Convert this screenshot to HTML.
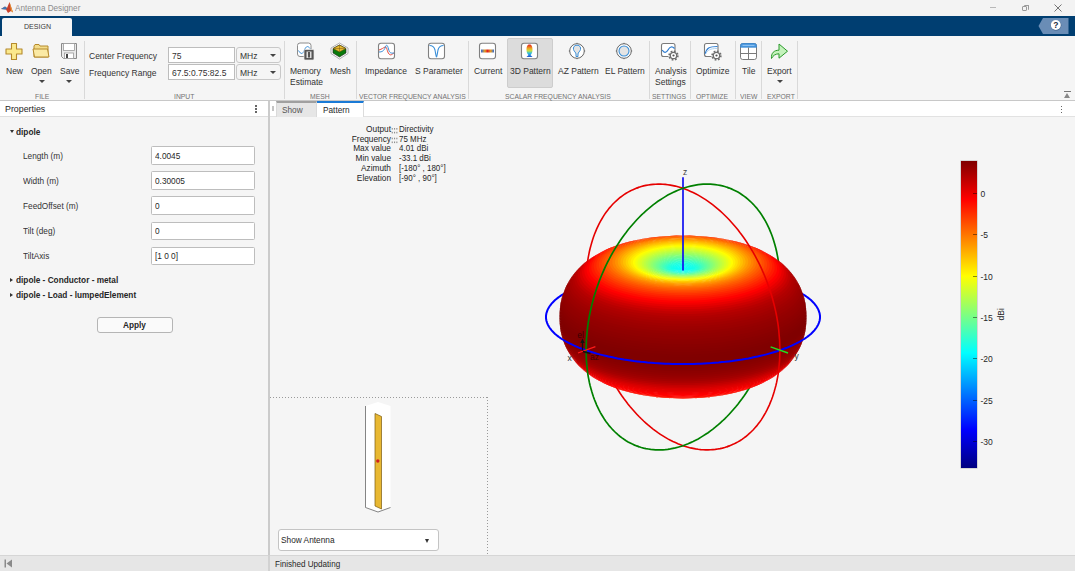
<!DOCTYPE html>
<html><head><meta charset="utf-8">
<style>
*{margin:0;padding:0;box-sizing:border-box}
html,body{width:1075px;height:571px;overflow:hidden;background:#f5f5f5;font-family:"Liberation Sans",sans-serif;color:#262626}
.a{position:absolute}
.t{position:absolute;white-space:nowrap;line-height:1}
#title{left:0;top:0;width:1075px;height:16px;background:#f3f3f3}
#tabbar{left:0;top:16px;width:1075px;height:20px;background:#003e71}
#design{left:2px;top:18px;width:70px;height:18px;background:#f5f5f5;border-radius:2px 2px 0 0}
#strip{left:0;top:36px;width:1075px;height:64px;background:#f5f5f5}
.sep{position:absolute;top:41px;width:1px;height:58px;background:#d9d9d9}
.lbl{font-size:8.5px;color:#333}
.grp{font-size:7.3px;color:#727272;transform:scaleX(.93);transform-origin:0 0}
.inp{position:absolute;background:#fff;border:1px solid #bdbdbd}
.dd{position:absolute;background:#f5f5f5;border:1px solid #c8c8c8;border-radius:3px}
</style></head><body>
<!-- title bar -->
<div id="title" class="a"></div>
<div class="t" style="left:14.5px;top:3.8px;font-size:8.6px;color:#8c8c8c;transform:scaleX(.95);transform-origin:0 0">Antenna Designer</div>
<div id="tabbar" class="a"></div>
<div id="design" class="a"></div>
<div class="t" style="left:24px;top:23.3px;font-size:7.6px;color:#3a3a3a;transform:scaleX(.93);transform-origin:0 0">DESIGN</div>
<svg class="a" style="left:0;top:0" width="14" height="15" viewBox="0 0 14 15">
<path d="M1,9 L5,6.5 L7,8 L9.5,2 L13,12.5 L11,11 L8,13 L6,9.5z" fill="#c8402a"/>
<path d="M1,9 L5,6.5 L7,8 L6,9.5z" fill="#3a7ab8"/>
<path d="M9.5,2 L13,12.5 L11,11z" fill="#e89a30"/></svg>
<div class="a" style="left:990px;top:7px;width:6px;height:1px;background:#b8b8b8"></div>
<div class="a" style="left:1022px;top:6px;width:5px;height:5px;border:1px solid #9a9a9a;border-radius:1px"></div>
<div class="a" style="left:1024px;top:4.5px;width:5px;height:5px;border-top:1px solid #9a9a9a;border-right:1px solid #9a9a9a;border-radius:1px"></div>
<svg class="a" style="left:1054px;top:4px" width="8" height="8" viewBox="0 0 8 8"><path d="M0.5,0.5 L7.5,7.5 M7.5,0.5 L0.5,7.5" stroke="#666" stroke-width="0.9"/></svg>
<svg class="a" style="left:1038px;top:18px" width="31" height="16" viewBox="0 0 31 16">
<path d="M0.5,8 L5,0 H30.5 V16 H5z" fill="#6a8db6"/>
<circle cx="18" cy="7.3" r="5.3" fill="#0f2f55" opacity=".5"/>
<circle cx="17.8" cy="7" r="5" fill="#fff"/>
<text x="17.8" y="10.2" font-family="Liberation Sans" font-weight="bold" font-size="8.5" text-anchor="middle" fill="#1a2a40">?</text></svg>
<div id="strip" class="a"></div>
<div class="a" style="left:0;top:100px;width:1075px;height:1px;background:#c8c8c8"></div>

<!-- separators -->
<div class="sep" style="left:84px"></div>
<div class="sep" style="left:284px"></div>
<div class="sep" style="left:356px"></div>
<div class="sep" style="left:468px"></div>
<div class="sep" style="left:649px"></div>
<div class="sep" style="left:690px"></div>
<div class="sep" style="left:735px"></div>
<div class="sep" style="left:761px"></div>
<div class="sep" style="left:797px"></div>

<!-- labels -->
<div class="t lbl" style="left:6px;top:67px">New</div>
<div class="t lbl" style="left:31px;top:67px">Open</div>
<div class="t lbl" style="left:60px;top:67px">Save</div>
<div class="a" style="left:39px;top:80px;width:0;height:0;border-left:3px solid transparent;border-right:3px solid transparent;border-top:3px solid #444"></div>
<div class="a" style="left:66px;top:80px;width:0;height:0;border-left:3px solid transparent;border-right:3px solid transparent;border-top:3px solid #444"></div>
<div class="t grp" style="left:35px;top:93px">FILE</div>
<svg class="a" style="left:4px;top:42px" width="20" height="20" viewBox="0 0 20 20">
<path d="M7.5,1.5 h5 v5.5 h5.5 v5 h-5.5 v5.5 h-5 v-5.5 h-5.5 v-5 h5.5z" fill="#fbe98c" stroke="#b58a2c" stroke-width="1.1" stroke-linejoin="round"/></svg>
<svg class="a" style="left:32px;top:43px" width="19" height="16" viewBox="0 0 19 16">
<path d="M2,3 l1,-1.5 h4 l1,1.5 h8 v11 h-14z" fill="#f3dc8a" stroke="#b58a2c" stroke-width="1"/>
<path d="M1,6 h14.5 l1.5,8 h-14.5z" fill="#fbeaa5" stroke="#b58a2c" stroke-width="1" stroke-linejoin="round"/></svg>
<svg class="a" style="left:60px;top:42px" width="18" height="18" viewBox="0 0 18 18">
<path d="M1.5,1.5 h15 v15 h-13 l-2,-2z" fill="#e9e9e9" stroke="#8a8a8a" stroke-width="1"/>
<rect x="3.5" y="1.5" width="11" height="7" fill="#fff" stroke="#9a9a9a" stroke-width="0.8"/>
<rect x="4.5" y="11" width="9" height="5.5" fill="#fff" stroke="#9a9a9a" stroke-width="0.8"/>
<rect x="6" y="12" width="2" height="4" fill="#444"/></svg>

<div class="t lbl" style="left:89px;top:52px">Center Frequency</div>
<div class="t lbl" style="left:89px;top:69px">Frequency Range</div>
<div class="inp" style="left:168px;top:47px;width:67px;height:16px"></div>
<div class="inp" style="left:168px;top:64px;width:67px;height:16px"></div>
<div class="t lbl" style="left:172px;top:52px">75</div>
<div class="t lbl" style="left:172px;top:69px">67.5:0.75:82.5</div>
<div class="dd" style="left:236px;top:47px;width:45px;height:16px"></div>
<div class="dd" style="left:236px;top:64px;width:45px;height:16px"></div>
<div class="t lbl" style="left:240px;top:52px">MHz</div>
<div class="t lbl" style="left:240px;top:69px">MHz</div>
<div class="a" style="left:270px;top:54px;width:0;height:0;border-left:3px solid transparent;border-right:3px solid transparent;border-top:3px solid #444"></div>
<div class="a" style="left:270px;top:71px;width:0;height:0;border-left:3px solid transparent;border-right:3px solid transparent;border-top:3px solid #444"></div>
<div class="t grp" style="left:174px;top:93px">INPUT</div>

<svg class="a" style="left:296px;top:42px" width="20" height="19" viewBox="0 0 20 19">
<rect x="1.5" y="1" width="13.5" height="13.5" rx="2.5" fill="#fff" stroke="#8c8c8c" stroke-width="1"/>
<path d="M2.5,8.5 C5,13 7,12 8.5,8 C10,4 12,3.5 14,6.5" fill="none" stroke="#3a8fd8" stroke-width="1"/>
<rect x="8" y="7.5" width="10" height="10.5" rx="1" fill="#555" stroke="#eee" stroke-width="0.7"/>
<rect x="10.5" y="9.5" width="5" height="6.5" fill="#ddd"/><rect x="12" y="10" width="2" height="5.5" fill="#555"/></svg>
<svg class="a" style="left:330px;top:42px" width="19" height="18" viewBox="0 0 19 18">
<path d="M9.5,1 L18,6 L18,11.5 L9.5,17 L1,11.5 L1,6z" fill="#fff" stroke="#9a9a9a" stroke-width="0.8"/>
<path d="M9.5,3 L16,6.5 L16,11 L9.5,15 L3,11 L3,6.5z" fill="#0a7a0a" stroke="#222" stroke-width="0.6"/>
<path d="M9.5,3 L16,6.5 L9.5,10 L3,6.5z" fill="#e8b930" stroke="#5a4a10" stroke-width="0.6"/>
<path d="M9.5,3 V10 M3,6.5 H16" stroke="#7a5a10" stroke-width="0.5"/></svg>
<div class="t lbl" style="left:290px;top:67px">Memory</div>
<div class="t lbl" style="left:290px;top:78px">Estimate</div>
<div class="t lbl" style="left:330px;top:67px">Mesh</div>
<div class="t grp" style="left:310px;top:93px">MESH</div>

<svg class="a" style="left:376.5px;top:42px" width="19" height="18" viewBox="0 0 19 18">
<rect x="1.5" y="1.2" width="16" height="15.6" rx="2.5" fill="#fff" stroke="#808080" stroke-width="1.1"/>
<path d="M2,8 C5,7 6,6 8,5 C10,4 10,10 12,12 C14,14 15,12 17,11" fill="none" stroke="#e8473a" stroke-width="1"/>
<path d="M2,10 C5,10 7,9 8.5,5 C9.5,2 10.5,3 11.5,7 C12.5,11 14,11.5 17,11" fill="none" stroke="#3a8fd8" stroke-width="1"/></svg>
<svg class="a" style="left:427px;top:42px" width="19" height="18" viewBox="0 0 19 18">
<rect x="1.5" y="1.2" width="16" height="15.6" rx="2.5" fill="#fff" stroke="#808080" stroke-width="1.1"/>
<path d="M2.5,3.5 C5,3.5 7,4 8,8 C8.8,12 9,15 9.5,15 C10,15 10.2,12 11,8 C12,4 14,3.5 16.5,3.5" fill="none" stroke="#3a8fd8" stroke-width="1.1"/></svg>
<div class="t lbl" style="left:365px;top:67px">Impedance</div>
<div class="t lbl" style="left:415px;top:67px">S Parameter</div>
<div class="t grp" style="left:359px;top:93px">VECTOR FREQUENCY ANALYSIS</div>

<div class="a" style="left:507px;top:38px;width:46px;height:50px;background:#dcdcdc;border:1px solid #cdcdcd;border-radius:2px"></div>
<svg class="a" style="left:478px;top:42px" width="19" height="18" viewBox="0 0 19 18">
<rect x="1.5" y="1.2" width="16" height="15.6" rx="2.5" fill="#fff" stroke="#808080" stroke-width="1.1"/>
<defs><linearGradient id="cur" x1="0" x2="1"><stop offset="0" stop-color="#2a6ae0"/><stop offset=".3" stop-color="#e8a020"/><stop offset=".5" stop-color="#e02020"/><stop offset=".75" stop-color="#e8a020"/><stop offset="1" stop-color="#2a6ae0"/></linearGradient></defs>
<rect x="3" y="7.5" width="13" height="3" fill="url(#cur)"/></svg>
<svg class="a" style="left:520px;top:42px" width="19" height="18" viewBox="0 0 19 18">
<rect x="1.5" y="1.2" width="16" height="15.6" rx="2.5" fill="#fff" stroke="#808080" stroke-width="1.1"/>
<defs><linearGradient id="p3" x1="0" y1="0" x2="0" y2="1"><stop offset="0" stop-color="#e02020"/><stop offset=".3" stop-color="#f0a020"/><stop offset=".5" stop-color="#c8e040"/><stop offset=".7" stop-color="#30c0e0"/><stop offset="1" stop-color="#2050d0"/></linearGradient></defs>
<path d="M9.5,2.5 C12,2.5 12.5,5 12.5,8 C12.5,11 11,12.5 10.5,13 L12.5,15 H6.5 L8.5,13 C8,12.5 6.5,11 6.5,8 C6.5,5 7,2.5 9.5,2.5z" fill="url(#p3)"/></svg>
<svg class="a" style="left:568px;top:42px" width="18" height="18" viewBox="0 0 18 18">
<circle cx="9" cy="9" r="7.3" fill="#fff" stroke="#666" stroke-width="1"/>
<path d="M9,0.8 V2 M9,16 V17.2 M0.8,9 H2 M16,9 H17.2" stroke="#666" stroke-width="0.8"/>
<path d="M9,3.2 C12,3.2 13,5.5 12.5,7.5 C12,9.5 10,10.5 10,12 V14.5 H8 V12 C8,10.5 6,9.5 5.5,7.5 C5,5.5 6,3.2 9,3.2z" fill="#e4e4e4" stroke="#3a8fd8" stroke-width="1"/></svg>
<svg class="a" style="left:615px;top:42px" width="18" height="18" viewBox="0 0 18 18">
<circle cx="9" cy="9" r="7.3" fill="#fff" stroke="#666" stroke-width="1"/>
<path d="M9,0.8 V2 M9,16 V17.2 M0.8,9 H2 M16,9 H17.2" stroke="#666" stroke-width="0.8"/>
<circle cx="9" cy="9" r="5" fill="#e4e4e4" stroke="#3a8fd8" stroke-width="1.1"/></svg>
<div class="t lbl" style="left:474px;top:67px">Current</div>
<div class="t lbl" style="left:510px;top:67px">3D Pattern</div>
<div class="t lbl" style="left:558px;top:67px">AZ Pattern</div>
<div class="t lbl" style="left:605px;top:67px">EL Pattern</div>
<div class="t grp" style="left:505px;top:93px">SCALAR FREQUENCY ANALYSIS</div>

<svg class="a" style="left:660px;top:42px" width="20" height="20" viewBox="0 0 20 20">
<rect x="1.5" y="1.5" width="13.5" height="13" rx="2" fill="#fff" stroke="#7a7a7a" stroke-width="1.1"/>
<path d="M2.2,8 C4,11 6,11.5 8,8 C10,4.5 12,4 14.5,6.5" fill="none" stroke="#2a7ad0" stroke-width="1.2"/>
<g transform="translate(13.5,13.5)"><circle r="5.2" fill="#f5f5f5"/><circle r="4.3" fill="none" stroke="#6e6e6e" stroke-width="1.8" stroke-dasharray="1.689 1.689"/><circle r="3.2" fill="#fff" stroke="#6e6e6e" stroke-width="1.3"/><circle r="1.1" fill="#555"/></g></svg>
<svg class="a" style="left:703px;top:42px" width="20" height="20" viewBox="0 0 20 20">
<rect x="1.5" y="1.5" width="13.5" height="13" rx="2" fill="#fff" stroke="#7a7a7a" stroke-width="1.1"/>
<path d="M2.2,12 C3.5,6 6,4.5 14.5,4.5" fill="none" stroke="#2a7ad0" stroke-width="1.2"/>
<path d="M2.5,12 C5,8 7,6.5 14,6.5" fill="none" stroke="#9cc8ee" stroke-width="0.8"/>
<g transform="translate(13.5,13.5)"><circle r="5.2" fill="#f5f5f5"/><circle r="4.3" fill="none" stroke="#6e6e6e" stroke-width="1.8" stroke-dasharray="1.689 1.689"/><circle r="3.2" fill="#fff" stroke="#6e6e6e" stroke-width="1.3"/><circle r="1.1" fill="#555"/></g></svg>
<svg class="a" style="left:739px;top:42px" width="19" height="19" viewBox="0 0 19 19">
<rect x="1.5" y="1.5" width="16" height="16" rx="2.2" fill="#fff" stroke="#7a7a7a" stroke-width="1"/>
<path d="M1.5,5.2 V3.7 Q1.5,1.5 3.7,1.5 H15.3 Q17.5,1.5 17.5,3.7 V5.2z" fill="#4a98e0" stroke="#3a88d0" stroke-width="0.8"/>
<path d="M3.5,3.4 H15.5" stroke="#a8d0f5" stroke-width="0.8"/>
<path d="M1.5,11.5 H17.5 M9.5,5.5 V17.5" stroke="#7a7a7a" stroke-width="1"/></svg>
<svg class="a" style="left:769px;top:42px" width="20" height="18" viewBox="0 0 20 18">
<path d="M2.5,16.5 C2,11 5,8.2 10,8.2 V2 L18.5,9.2 L10,16.2 V11.8 C6.5,11.8 4,13.5 2.5,16.5z" fill="#c4f2bc" stroke="#2a9a2a" stroke-width="1" stroke-linejoin="round"/></svg>
<div class="t lbl" style="left:655px;top:67px">Analysis</div>
<div class="t lbl" style="left:655px;top:78px">Settings</div>
<div class="t grp" style="left:652px;top:93px">SETTINGS</div>
<div class="t lbl" style="left:696px;top:67px">Optimize</div>
<div class="t grp" style="left:696px;top:93px">OPTIMIZE</div>
<div class="t lbl" style="left:742px;top:67px">Tile</div>
<div class="t grp" style="left:740px;top:93px">VIEW</div>
<div class="t lbl" style="left:767px;top:67px">Export</div>
<div class="a" style="left:777px;top:80px;width:0;height:0;border-left:3px solid transparent;border-right:3px solid transparent;border-top:3px solid #444"></div>
<div class="t grp" style="left:767px;top:93px">EXPORT</div>
<!-- collapse -->
<div class="a" style="left:1064px;top:91px;width:7px;height:1px;background:#777"></div>
<div class="a" style="left:1064px;top:93px;width:0;height:0;border-left:3.5px solid transparent;border-right:3.5px solid transparent;border-bottom:5px solid #888"></div>

<!-- left panel -->
<div class="a" style="left:0;top:101px;width:268px;height:16px;background:#fff;border-bottom:1px solid #dedede"></div>
<div class="t" style="left:4.5px;top:104.5px;font-size:9.3px;color:#262626;transform:scaleX(.95);transform-origin:0 0">Properties</div>
<div class="a" style="left:255px;top:105px;width:1.5px;height:1.5px;background:#666"></div>
<div class="a" style="left:255px;top:108px;width:1.5px;height:1.5px;background:#666"></div>
<div class="a" style="left:255px;top:111px;width:1.5px;height:1.5px;background:#666"></div>
<div class="a" style="left:268px;top:101px;width:2px;height:454px;background:#cbcbcb"></div>
<div class="a" style="left:10px;top:130px;width:0;height:0;border-left:2.5px solid transparent;border-right:2.5px solid transparent;border-top:3px solid #333"></div>
<div class="t" style="left:16px;top:127.5px;font-size:8.7px;font-weight:bold;color:#262626;transform:scaleX(.95);transform-origin:0 0">dipole</div>
<div class="t" style="left:23px;top:151.5px;font-size:8.7px;color:#333;transform:scaleX(.95);transform-origin:0 0">Length (m)</div>
<div class="a" style="left:151px;top:146.0px;width:104px;height:18.5px;background:#fff;border:1px solid #bdbdbd;border-radius:1.5px"></div>
<div class="t" style="left:154.5px;top:151.5px;font-size:8.7px;color:#262626;transform:scaleX(.95);transform-origin:0 0">4.0045</div>
<div class="t" style="left:23px;top:176.7px;font-size:8.7px;color:#333;transform:scaleX(.95);transform-origin:0 0">Width (m)</div>
<div class="a" style="left:151px;top:171.2px;width:104px;height:18.5px;background:#fff;border:1px solid #bdbdbd;border-radius:1.5px"></div>
<div class="t" style="left:154.5px;top:176.7px;font-size:8.7px;color:#262626;transform:scaleX(.95);transform-origin:0 0">0.30005</div>
<div class="t" style="left:23px;top:201.9px;font-size:8.7px;color:#333;transform:scaleX(.95);transform-origin:0 0">FeedOffset (m)</div>
<div class="a" style="left:151px;top:196.4px;width:104px;height:18.5px;background:#fff;border:1px solid #bdbdbd;border-radius:1.5px"></div>
<div class="t" style="left:154.5px;top:201.9px;font-size:8.7px;color:#262626;transform:scaleX(.95);transform-origin:0 0">0</div>
<div class="t" style="left:23px;top:227.1px;font-size:8.7px;color:#333;transform:scaleX(.95);transform-origin:0 0">Tilt (deg)</div>
<div class="a" style="left:151px;top:221.6px;width:104px;height:18.5px;background:#fff;border:1px solid #bdbdbd;border-radius:1.5px"></div>
<div class="t" style="left:154.5px;top:227.1px;font-size:8.7px;color:#262626;transform:scaleX(.95);transform-origin:0 0">0</div>
<div class="t" style="left:23px;top:252.3px;font-size:8.7px;color:#333;transform:scaleX(.95);transform-origin:0 0">TiltAxis</div>
<div class="a" style="left:151px;top:246.8px;width:104px;height:18.5px;background:#fff;border:1px solid #bdbdbd;border-radius:1.5px"></div>
<div class="t" style="left:154.5px;top:252.3px;font-size:8.7px;color:#262626;transform:scaleX(.95);transform-origin:0 0">[1 0 0]</div>
<div class="a" style="left:10px;top:277.5px;width:0;height:0;border-top:2.5px solid transparent;border-bottom:2.5px solid transparent;border-left:3px solid #333"></div>
<div class="t" style="left:16px;top:275.5px;font-size:8.7px;font-weight:bold;color:#262626;transform:scaleX(.95);transform-origin:0 0">dipole - Conductor - metal</div>
<div class="a" style="left:10px;top:293px;width:0;height:0;border-top:2.5px solid transparent;border-bottom:2.5px solid transparent;border-left:3px solid #333"></div>
<div class="t" style="left:16px;top:291px;font-size:8.7px;font-weight:bold;color:#262626;transform:scaleX(.95);transform-origin:0 0">dipole - Load - lumpedElement</div>
<div class="a" style="left:96.5px;top:317px;width:76.5px;height:16px;background:#fafafa;border:1px solid #b5b5b5;border-radius:3px"></div>
<div class="t" style="left:123px;top:321px;font-size:8.7px;font-weight:bold;color:#262626;transform:scaleX(.95);transform-origin:0 0">Apply</div>

<!-- doc area -->
<div class="a" style="left:270px;top:101px;width:805px;height:16px;background:#fff;border-bottom:1px solid #e2e2e2"></div>
<div class="a" style="left:271.8px;top:106px;width:2px;height:5px;background:#c4c4c4"></div>
<div class="a" style="left:276px;top:101px;width:40.5px;height:16px;background:#e6e6e6;border-top:2px solid #a0a0a0;border-left:1px solid #dadada;border-right:1px solid #dadada"></div>
<div class="a" style="left:316.5px;top:101px;width:47px;height:16px;background:#fff;border-top:2px solid #1a7ad6;border-right:1px solid #dcdcdc"></div>
<div class="t" style="left:281.5px;top:105.8px;font-size:8.7px;color:#555;transform:scaleX(.95);transform-origin:0 0">Show</div>
<div class="t" style="left:322.5px;top:105.8px;font-size:8.7px;color:#262626;transform:scaleX(.95);transform-origin:0 0">Pattern</div>
<div class="a" style="left:1060.5px;top:105.5px;width:1.5px;height:1.5px;background:#666"></div>
<div class="a" style="left:1060.5px;top:108.5px;width:1.5px;height:1.5px;background:#666"></div>
<div class="a" style="left:1060.5px;top:111.5px;width:1.5px;height:1.5px;background:#666"></div>
<!-- info text -->
<svg class="a" style="left:390px;top:126px" width="9" height="18" viewBox="0 0 9 18" fill="#8f8f8f"><rect x="1.7" y="2.0" width="1.1" height="1.6"/><rect x="1.7" y="5.8" width="1.1" height="1.6"/><rect x="4.0" y="2.0" width="1.1" height="1.6"/><rect x="4.0" y="5.8" width="1.1" height="1.6"/><rect x="6.3" y="2.0" width="1.1" height="1.6"/><rect x="6.3" y="5.8" width="1.1" height="1.6"/><rect x="1.7" y="11.7" width="1.1" height="1.6"/><rect x="1.7" y="15.5" width="1.1" height="1.6"/><rect x="4.0" y="11.7" width="1.1" height="1.6"/><rect x="4.0" y="15.5" width="1.1" height="1.6"/><rect x="6.3" y="11.7" width="1.1" height="1.6"/><rect x="6.3" y="15.5" width="1.1" height="1.6"/></svg>

<div class="a" style="left:300px;top:125px;width:91px;font-size:8.3px;line-height:9.7px;text-align:right;color:#262626">Output<br>Frequency<br>Max value<br>Min value<br>Azimuth<br>Elevation</div>
<div class="a" style="left:398.5px;top:125px;font-size:8.3px;line-height:9.7px;color:#262626;white-space:nowrap;transform:scaleX(.96);transform-origin:0 0">Directivity<br>75 MHz<br>4.01 dBi<br>-33.1 dBi<br>[-180&deg; , 180&deg;]<br>[-90&deg; , 90&deg;]</div>
<!--PLOT-->
<svg class="a" style="left:0;top:0" width="1075" height="571" viewBox="0 0 1075 571">
<path d="M820,317L820,315.8L819.8,314.5L819.6,313.3L819.2,312.1L818.8,310.9L818.3,309.6L817.7,308.4L817,307.2L816.2,306L815.3,304.8L814.4,303.6L813.3,302.5L812.1,301.3L810.9,300.1L809.6,299L808.2,297.9L806.7,296.7L805.1,295.6L803.4,294.5L801.6,293.5M564.4,293.5L562.6,294.5L560.9,295.6L559.3,296.7L557.8,297.9L556.4,299L555.1,300.1L553.9,301.3L552.7,302.5L551.6,303.6L550.7,304.8L549.8,306L549,307.2L548.3,308.4L547.7,309.6L547.2,310.9L546.8,312.1L546.4,313.3L546.2,314.5L546,315.8L546,317L546,318.2" fill="none" stroke="#0000ff" stroke-width="2.0"/><path d="M639,187.3L636.8,188L634.6,188.9L632.4,189.9L630.2,191L628.1,192.1L626.1,193.3L624,194.7L622,196.1L620.1,197.5L618.2,199.1L616.3,200.8L614.5,202.5L612.7,204.3L611,206.2L609.3,208.1L607.7,210.2L606.1,212.3L604.6,214.4L603.2,216.7L601.8,219L600.4,221.4L599.1,223.8L597.9,226.4L596.7,228.9L595.6,231.6L594.5,234.3L593.5,237L592.6,239.8L591.7,242.7L590.9,245.6L590.1,248.5L589.4,251.5L588.8,254.6L588.2,257.7L587.7,260.8L587.3,264M614.5,384.4L616.3,387.4L618.2,390.3L620.1,393.2L622,396L624,398.8L626.1,401.5L628.1,404.2L630.2,406.8L632.4,409.3L634.6,411.8L636.8,414.2L639,416.5L641.3,418.8L643.6,421L645.9,423.1L648.3,425.2L650.7,427.2L653.1,429.1L655.5,430.9L657.9,432.7L660.4,434.3L662.9,435.9L665.3,437.4L667.8,438.9L670.4,440.2L672.9,441.5L675.4,442.6L677.9,443.7L680.5,444.7L683,445.7L685.5,446.5L688.1,447.2L690.6,447.9L693.1,448.4L695.6,448.9L698.2,449.3L700.7,449.6L703.1,449.8L705.6,449.9L708.1,449.9L710.5,449.8L712.9,449.6L715.3,449.4L717.7,449L720.1,448.6L722.4,448.1L724.7,447.5L727,446.7L729.2,446" fill="none" stroke="#e60000" stroke-width="1.6"/><path d="M727,187.3L729.2,188L731.4,188.9L733.6,189.9L735.8,191L737.9,192.1L739.9,193.3L742,194.7L744,196.1L745.9,197.5L747.8,199.1L749.7,200.8L751.5,202.5L753.3,204.3L755,206.2L756.7,208.1L758.3,210.2L759.9,212.3L761.4,214.4L762.8,216.7L764.2,219L765.6,221.4L766.9,223.8L768.1,226.4L769.3,228.9L770.4,231.6L771.5,234.3L772.5,237L773.4,239.8L774.3,242.7L775.1,245.6L775.9,248.5L776.6,251.5L777.2,254.6L777.8,257.7L778.3,260.8L778.7,264M751.5,384.4L749.7,387.4L747.8,390.3L745.9,393.2L744,396L742,398.8L739.9,401.5L737.9,404.2L735.8,406.8L733.6,409.3L731.4,411.8L729.2,414.2L727,416.5L724.7,418.8L722.4,421L720.1,423.1L717.7,425.2L715.3,427.2L712.9,429.1L710.5,430.9L708.1,432.7L705.6,434.3L703.1,435.9L700.7,437.4L698.2,438.9L695.6,440.2L693.1,441.5L690.6,442.6L688.1,443.7L685.5,444.7L683,445.7L680.5,446.5L677.9,447.2L675.4,447.9L672.9,448.4L670.4,448.9L667.8,449.3L665.3,449.6L662.9,449.8L660.4,449.9L657.9,449.9L655.5,449.8L653.1,449.6L650.7,449.4L648.3,449L645.9,448.6L643.6,448.1L641.3,447.5L639,446.7L636.8,446" fill="none" stroke="#008000" stroke-width="1.7"/>
<g><path d="M683,269L683,269L683,269L683,269L683,269L683,269L683,269L683,269L683,269L683,269L683,269L683,269L683,269L683,269L683,269L683,269L683,269L683,269L683,269L683,269L683,269L683,269L683,269L683,269L683,269L683,269L683,269L683,269L683,269L683,269L683,269L683,269L683,269L683,269L683,269L683,269L683,269L683,269L683,269L683,269L683,269L683,269L683,269L683,269L683,269L683,269L683,269L683,269L683,269L683,269L683,269L683,269L683,269L683,269L683,269L683,269L683,269L683,269L683,269L683,269L683,269L683,269L683,269L683,269L683,269L683,269L683,269L683,269L683,269L683,269L683,269L683,269L683,269L683,269L683,269L683,269L683,269L683,269L683,269L683,269ZM681.8,269.4L681.9,269.4L682,269.4L682.1,269.5L682.2,269.5L682.3,269.5L682.5,269.5L682.6,269.5L682.7,269.5L682.9,269.5L683,269.6L683.1,269.5L683.3,269.5L683.4,269.5L683.5,269.5L683.7,269.5L683.8,269.5L683.9,269.5L684,269.4L684.1,269.4L684.2,269.4L684.3,269.3L684.4,269.3L684.5,269.3L684.5,269.2L684.6,269.2L684.6,269.1L684.7,269.1L684.7,269.1L684.7,269L684.7,269L684.7,268.9L684.7,268.9L684.7,268.8L684.6,268.8L684.6,268.7L684.5,268.7L684.5,268.7L684.4,268.6L684.3,268.6L684.2,268.5L684.1,268.5L684,268.5L683.9,268.5L683.8,268.4L683.7,268.4L683.5,268.4L683.4,268.4L683.3,268.4L683.1,268.4L683,268.4L682.9,268.4L682.7,268.4L682.6,268.4L682.5,268.4L682.3,268.4L682.2,268.4L682.1,268.5L682,268.5L681.9,268.5L681.8,268.5L681.7,268.6L681.6,268.6L681.5,268.7L681.5,268.7L681.4,268.7L681.4,268.8L681.3,268.8L681.3,268.9L681.3,268.9L681.3,269L681.3,269L681.3,269.1L681.3,269.1L681.4,269.1L681.4,269.2L681.5,269.2L681.5,269.3L681.6,269.3L681.7,269.3Z" fill="#05fffa" fill-rule="evenodd"/><path d="M682.2,269.2L682.3,269.3L682.4,269.3L682.4,269.3L682.5,269.3L682.6,269.3L682.7,269.3L682.7,269.3L682.8,269.3L682.9,269.3L683,269.3L683.1,269.3L683.2,269.3L683.3,269.3L683.3,269.3L683.4,269.3L683.5,269.3L683.6,269.3L683.6,269.3L683.7,269.3L683.8,269.2L683.8,269.2L683.9,269.2L683.9,269.2L684,269.1L684,269.1L684,269.1L684,269.1L684.1,269L684.1,269L684.1,269L684.1,268.9L684.1,268.9L684,268.9L684,268.9L684,268.8L684,268.8L683.9,268.8L683.9,268.8L683.8,268.7L683.8,268.7L683.7,268.7L683.6,268.7L683.6,268.7L683.5,268.6L683.4,268.6L683.3,268.6L683.3,268.6L683.2,268.6L683.1,268.6L683,268.6L682.9,268.6L682.8,268.6L682.7,268.6L682.7,268.6L682.6,268.6L682.5,268.6L682.4,268.7L682.4,268.7L682.3,268.7L682.2,268.7L682.2,268.7L682.1,268.8L682.1,268.8L682,268.8L682,268.8L682,268.9L682,268.9L681.9,268.9L681.9,268.9L681.9,269L681.9,269L681.9,269L682,269.1L682,269.1L682,269.1L682,269.1L682.1,269.2L682.1,269.2L682.2,269.2ZM681,269.6L681.2,269.7L681.4,269.7L681.5,269.7L681.7,269.8L681.9,269.8L682.1,269.8L682.3,269.9L682.6,269.9L682.8,269.9L683,269.9L683.2,269.9L683.4,269.9L683.7,269.9L683.9,269.8L684.1,269.8L684.3,269.8L684.5,269.7L684.6,269.7L684.8,269.7L685,269.6L685.1,269.5L685.3,269.5L685.4,269.4L685.5,269.4L685.6,269.3L685.7,269.2L685.7,269.1L685.8,269.1L685.8,269L685.8,268.9L685.8,268.8L685.8,268.8L685.7,268.7L685.7,268.6L685.6,268.6L685.5,268.5L685.4,268.4L685.3,268.4L685.1,268.3L685,268.2L684.8,268.2L684.6,268.1L684.5,268.1L684.3,268.1L684.1,268L683.9,268L683.7,268L683.4,268L683.2,268L683,268L682.8,268L682.6,268L682.3,268L682.1,268L681.9,268L681.7,268.1L681.5,268.1L681.4,268.1L681.2,268.2L681,268.2L680.9,268.3L680.7,268.4L680.6,268.4L680.5,268.5L680.4,268.6L680.3,268.6L680.3,268.7L680.2,268.8L680.2,268.8L680.2,268.9L680.2,269L680.2,269.1L680.3,269.1L680.3,269.2L680.4,269.3L680.5,269.4L680.6,269.4L680.7,269.5L680.9,269.5Z" fill="#06fff9" fill-rule="evenodd"/><path d="M681.5,269.5L681.6,269.5L681.7,269.5L681.9,269.6L682,269.6L682.2,269.6L682.3,269.6L682.5,269.7L682.7,269.7L682.8,269.7L683,269.7L683.2,269.7L683.3,269.7L683.5,269.7L683.7,269.6L683.8,269.6L684,269.6L684.1,269.6L684.3,269.5L684.4,269.5L684.5,269.5L684.6,269.4L684.7,269.4L684.8,269.3L684.9,269.3L685,269.2L685,269.2L685.1,269.1L685.1,269.1L685.1,269L685.1,268.9L685.1,268.9L685.1,268.8L685.1,268.8L685,268.7L685,268.7L684.9,268.6L684.8,268.6L684.7,268.5L684.6,268.5L684.5,268.4L684.4,268.4L684.3,268.4L684.1,268.3L684,268.3L683.8,268.3L683.7,268.2L683.5,268.2L683.3,268.2L683.2,268.2L683,268.2L682.8,268.2L682.7,268.2L682.5,268.2L682.3,268.2L682.2,268.3L682,268.3L681.9,268.3L681.7,268.4L681.6,268.4L681.5,268.4L681.4,268.5L681.3,268.5L681.2,268.6L681.1,268.6L681,268.7L681,268.7L680.9,268.8L680.9,268.8L680.9,268.9L680.9,268.9L680.9,269L680.9,269.1L680.9,269.1L681,269.2L681,269.2L681.1,269.3L681.2,269.3L681.3,269.4L681.4,269.4ZM680.3,269.8L680.5,269.9L680.7,269.9L681,270L681.2,270.1L681.5,270.1L681.8,270.1L682.1,270.2L682.4,270.2L682.7,270.2L683,270.2L683.3,270.2L683.6,270.2L683.9,270.2L684.2,270.1L684.5,270.1L684.8,270.1L685,270L685.3,269.9L685.5,269.9L685.7,269.8L685.9,269.7L686.1,269.7L686.3,269.6L686.4,269.5L686.6,269.4L686.7,269.3L686.8,269.2L686.8,269.1L686.9,269L686.9,268.9L686.9,268.8L686.8,268.7L686.8,268.6L686.7,268.5L686.6,268.4L686.4,268.3L686.3,268.2L686.1,268.1L685.9,268L685.7,267.9L685.5,267.9L685.3,267.8L685,267.7L684.8,267.7L684.5,267.6L684.2,267.6L683.9,267.6L683.6,267.6L683.3,267.5L683,267.5L682.7,267.5L682.4,267.6L682.1,267.6L681.8,267.6L681.5,267.6L681.2,267.7L681,267.7L680.7,267.8L680.5,267.9L680.3,267.9L680.1,268L679.9,268.1L679.7,268.2L679.6,268.3L679.4,268.4L679.3,268.5L679.2,268.6L679.2,268.7L679.1,268.8L679.1,268.9L679.1,269L679.2,269.1L679.2,269.2L679.3,269.3L679.4,269.4L679.6,269.5L679.7,269.6L679.9,269.7L680.1,269.7Z" fill="#07fff8" fill-rule="evenodd"/><path d="M680.7,269.7L680.9,269.7L681.1,269.8L681.3,269.8L681.5,269.9L681.8,269.9L682,270L682.2,270L682.5,270L682.7,270L683,270L683.3,270L683.5,270L683.8,270L684,270L684.2,269.9L684.5,269.9L684.7,269.8L684.9,269.8L685.1,269.7L685.3,269.7L685.5,269.6L685.6,269.6L685.7,269.5L685.9,269.4L686,269.3L686.1,269.2L686.1,269.2L686.2,269.1L686.2,269L686.2,268.9L686.2,268.8L686.2,268.7L686.1,268.6L686.1,268.6L686,268.5L685.9,268.4L685.7,268.3L685.6,268.3L685.5,268.2L685.3,268.1L685.1,268.1L684.9,268L684.7,268L684.5,267.9L684.2,267.9L684,267.9L683.8,267.8L683.5,267.8L683.3,267.8L683,267.8L682.7,267.8L682.5,267.8L682.2,267.8L682,267.9L681.8,267.9L681.5,267.9L681.3,268L681.1,268L680.9,268.1L680.7,268.1L680.5,268.2L680.4,268.3L680.3,268.3L680.1,268.4L680,268.5L679.9,268.6L679.9,268.6L679.8,268.7L679.8,268.8L679.8,268.9L679.8,269L679.8,269.1L679.9,269.2L679.9,269.2L680,269.3L680.1,269.4L680.3,269.5L680.4,269.6L680.5,269.6ZM679.5,270L679.8,270.1L680.1,270.2L680.4,270.2L680.7,270.3L681.1,270.4L681.5,270.4L681.8,270.5L682.2,270.5L682.6,270.5L683,270.5L683.4,270.5L683.8,270.5L684.2,270.5L684.5,270.4L684.9,270.4L685.3,270.3L685.6,270.2L685.9,270.2L686.2,270.1L686.5,270L686.8,269.9L687,269.8L687.2,269.7L687.4,269.6L687.6,269.4L687.7,269.3L687.8,269.2L687.9,269.1L687.9,268.9L688,268.8L687.9,268.7L687.9,268.5L687.8,268.4L687.7,268.3L687.6,268.1L687.4,268L687.2,267.9L687,267.8L686.8,267.7L686.5,267.6L686.2,267.5L685.9,267.4L685.6,267.3L685.3,267.3L684.9,267.2L684.5,267.2L684.2,267.1L683.8,267.1L683.4,267.1L683,267.1L682.6,267.1L682.2,267.1L681.8,267.1L681.5,267.2L681.1,267.2L680.7,267.3L680.4,267.3L680.1,267.4L679.8,267.5L679.5,267.6L679.2,267.7L679,267.8L678.8,267.9L678.6,268L678.4,268.1L678.3,268.3L678.2,268.4L678.1,268.5L678.1,268.7L678,268.8L678.1,268.9L678.1,269.1L678.2,269.2L678.3,269.3L678.4,269.4L678.6,269.6L678.8,269.7L679,269.8L679.2,269.9Z" fill="#08fff7" fill-rule="evenodd"/><path d="M680,269.9L680.2,270L680.5,270L680.7,270.1L681,270.2L681.4,270.2L681.7,270.2L682,270.3L682.3,270.3L682.7,270.3L683,270.3L683.3,270.3L683.7,270.3L684,270.3L684.3,270.2L684.6,270.2L685,270.2L685.3,270.1L685.5,270L685.8,270L686,269.9L686.3,269.8L686.5,269.7L686.7,269.6L686.8,269.5L687,269.4L687.1,269.3L687.2,269.2L687.3,269.1L687.3,269L687.3,268.8L687.3,268.7L687.3,268.6L687.2,268.5L687.1,268.4L687,268.3L686.8,268.2L686.7,268.1L686.5,268L686.3,267.9L686,267.8L685.8,267.7L685.5,267.6L685.3,267.6L685,267.5L684.6,267.5L684.3,267.4L684,267.4L683.7,267.4L683.3,267.4L683,267.4L682.7,267.4L682.3,267.4L682,267.4L681.7,267.4L681.4,267.5L681,267.5L680.7,267.6L680.5,267.6L680.2,267.7L680,267.8L679.7,267.9L679.5,268L679.3,268.1L679.2,268.2L679,268.3L678.9,268.4L678.8,268.5L678.7,268.6L678.7,268.7L678.7,268.8L678.7,269L678.7,269.1L678.8,269.2L678.9,269.3L679,269.4L679.2,269.5L679.3,269.6L679.5,269.7L679.7,269.8ZM678.7,270.2L679.1,270.3L679.4,270.4L679.8,270.5L680.2,270.6L680.7,270.6L681.1,270.7L681.6,270.7L682.1,270.8L682.5,270.8L683,270.8L683.5,270.8L683.9,270.8L684.4,270.7L684.9,270.7L685.3,270.6L685.8,270.6L686.2,270.5L686.6,270.4L686.9,270.3L687.3,270.2L687.6,270.1L687.9,269.9L688.2,269.8L688.4,269.7L688.6,269.5L688.8,269.4L688.9,269.2L689,269L689,268.9L689.1,268.7L689,268.5L689,268.4L688.9,268.2L688.8,268.1L688.6,267.9L688.4,267.8L688.2,267.6L687.9,267.5L687.6,267.4L687.3,267.2L686.9,267.1L686.6,267L686.2,266.9L685.8,266.9L685.3,266.8L684.9,266.7L684.4,266.7L683.9,266.7L683.5,266.6L683,266.6L682.5,266.6L682.1,266.7L681.6,266.7L681.1,266.7L680.7,266.8L680.2,266.9L679.8,266.9L679.4,267L679.1,267.1L678.7,267.2L678.4,267.4L678.1,267.5L677.8,267.6L677.6,267.8L677.4,267.9L677.2,268.1L677.1,268.2L677,268.4L677,268.5L676.9,268.7L677,268.9L677,269L677.1,269.2L677.2,269.4L677.4,269.5L677.6,269.7L677.8,269.8L678.1,269.9L678.4,270.1Z" fill="#0afff5" fill-rule="evenodd"/><path d="M679.2,270.1L679.5,270.2L679.8,270.3L680.2,270.3L680.5,270.4L680.9,270.5L681.3,270.5L681.7,270.6L682.2,270.6L682.6,270.6L683,270.6L683.4,270.6L683.8,270.6L684.3,270.6L684.7,270.5L685.1,270.5L685.5,270.4L685.8,270.3L686.2,270.3L686.5,270.2L686.8,270.1L687.1,270L687.4,269.9L687.6,269.7L687.8,269.6L688,269.5L688.1,269.3L688.2,269.2L688.3,269.1L688.4,268.9L688.4,268.8L688.4,268.6L688.3,268.5L688.2,268.3L688.1,268.2L688,268.1L687.8,267.9L687.6,267.8L687.4,267.7L687.1,267.6L686.8,267.5L686.5,267.4L686.2,267.3L685.8,267.2L685.5,267.1L685.1,267L684.7,267L684.3,267L683.8,266.9L683.4,266.9L683,266.9L682.6,266.9L682.2,266.9L681.7,267L681.3,267L680.9,267L680.5,267.1L680.2,267.2L679.8,267.3L679.5,267.4L679.2,267.5L678.9,267.6L678.6,267.7L678.4,267.8L678.2,267.9L678,268.1L677.9,268.2L677.8,268.3L677.7,268.5L677.6,268.6L677.6,268.8L677.6,268.9L677.7,269.1L677.8,269.2L677.9,269.3L678,269.5L678.2,269.6L678.4,269.7L678.6,269.9L678.9,270ZM677.9,270.3L678.3,270.5L678.8,270.6L679.3,270.7L679.7,270.8L680.3,270.9L680.8,270.9L681.3,271L681.9,271L682.4,271.1L683,271.1L683.6,271.1L684.1,271L684.7,271L685.2,270.9L685.7,270.9L686.3,270.8L686.7,270.7L687.2,270.6L687.7,270.5L688.1,270.3L688.5,270.2L688.8,270.1L689.1,269.9L689.4,269.7L689.6,269.5L689.8,269.4L690,269.2L690.1,269L690.1,268.8L690.2,268.6L690.1,268.4L690.1,268.2L690,268L689.8,267.8L689.6,267.7L689.4,267.5L689.1,267.3L688.8,267.2L688.5,267L688.1,266.9L687.7,266.7L687.2,266.6L686.7,266.5L686.3,266.4L685.7,266.3L685.2,266.3L684.7,266.2L684.1,266.2L683.6,266.1L683,266.1L682.4,266.1L681.9,266.2L681.3,266.2L680.8,266.3L680.3,266.3L679.7,266.4L679.3,266.5L678.8,266.6L678.3,266.7L677.9,266.9L677.5,267L677.2,267.2L676.9,267.3L676.6,267.5L676.4,267.7L676.2,267.8L676,268L675.9,268.2L675.9,268.4L675.8,268.6L675.9,268.8L675.9,269L676,269.2L676.2,269.4L676.4,269.5L676.6,269.7L676.9,269.9L677.2,270.1L677.5,270.2Z" fill="#0cfff3" fill-rule="evenodd"/><path d="M678.4,270.2L678.8,270.4L679.2,270.5L679.6,270.6L680,270.7L680.5,270.7L681,270.8L681.5,270.8L682,270.9L682.5,270.9L683,270.9L683.5,270.9L684,270.9L684.5,270.8L685,270.8L685.5,270.7L686,270.7L686.4,270.6L686.8,270.5L687.2,270.4L687.6,270.2L687.9,270.1L688.3,270L688.5,269.8L688.8,269.7L689,269.5L689.2,269.4L689.3,269.2L689.4,269L689.5,268.8L689.5,268.7L689.5,268.5L689.4,268.3L689.3,268.1L689.2,268L689,267.8L688.8,267.7L688.5,267.5L688.3,267.4L687.9,267.2L687.6,267.1L687.2,267L686.8,266.9L686.4,266.8L686,266.7L685.5,266.6L685,266.5L684.5,266.5L684,266.5L683.5,266.4L683,266.4L682.5,266.4L682,266.5L681.5,266.5L681,266.5L680.5,266.6L680,266.7L679.6,266.8L679.2,266.9L678.8,267L678.4,267.1L678.1,267.2L677.7,267.4L677.5,267.5L677.2,267.7L677,267.8L676.8,268L676.7,268.1L676.6,268.3L676.5,268.5L676.5,268.7L676.5,268.8L676.6,269L676.7,269.2L676.8,269.4L677,269.5L677.2,269.7L677.5,269.8L677.7,270L678.1,270.1ZM677.1,270.5L677.6,270.6L678.1,270.8L678.7,270.9L679.2,271L679.8,271.1L680.4,271.2L681.1,271.3L681.7,271.3L682.3,271.3L683,271.3L683.7,271.3L684.3,271.3L684.9,271.3L685.6,271.2L686.2,271.1L686.8,271L687.3,270.9L687.9,270.8L688.4,270.6L688.9,270.5L689.3,270.3L689.7,270.2L690.1,270L690.4,269.8L690.7,269.6L690.9,269.4L691.1,269.1L691.2,268.9L691.3,268.7L691.3,268.5L691.3,268.3L691.2,268L691.1,267.8L690.9,267.6L690.7,267.4L690.4,267.2L690.1,267L689.7,266.8L689.3,266.6L688.9,266.5L688.4,266.3L687.9,266.2L687.3,266.1L686.8,265.9L686.2,265.8L685.6,265.8L684.9,265.7L684.3,265.7L683.7,265.6L683,265.6L682.3,265.6L681.7,265.7L681.1,265.7L680.4,265.8L679.8,265.8L679.2,265.9L678.7,266.1L678.1,266.2L677.6,266.3L677.1,266.5L676.7,266.6L676.3,266.8L675.9,267L675.6,267.2L675.3,267.4L675.1,267.6L674.9,267.8L674.8,268L674.7,268.3L674.7,268.5L674.7,268.7L674.8,268.9L674.9,269.1L675.1,269.4L675.3,269.6L675.6,269.8L675.9,270L676.3,270.2L676.7,270.3Z" fill="#0efff1" fill-rule="evenodd"/><path d="M677.6,270.4L678.1,270.5L678.5,270.7L679,270.8L679.5,270.9L680.1,271L680.6,271L681.2,271.1L681.8,271.1L682.4,271.2L683,271.2L683.6,271.2L684.2,271.1L684.8,271.1L685.4,271L685.9,271L686.5,270.9L687,270.8L687.5,270.7L687.9,270.5L688.4,270.4L688.8,270.3L689.2,270.1L689.5,269.9L689.8,269.7L690,269.6L690.2,269.4L690.4,269.2L690.5,269L690.6,268.8L690.6,268.6L690.6,268.4L690.5,268.1L690.4,267.9L690.2,267.7L690,267.6L689.8,267.4L689.5,267.2L689.2,267L688.8,266.9L688.4,266.7L687.9,266.6L687.5,266.4L687,266.3L686.5,266.2L685.9,266.1L685.4,266.1L684.8,266L684.2,266L683.6,265.9L683,265.9L682.4,265.9L681.8,266L681.2,266L680.6,266.1L680.1,266.1L679.5,266.2L679,266.3L678.5,266.4L678.1,266.6L677.6,266.7L677.2,266.9L676.8,267L676.5,267.2L676.2,267.4L676,267.6L675.8,267.7L675.6,267.9L675.5,268.1L675.4,268.4L675.4,268.6L675.4,268.8L675.5,269L675.6,269.2L675.8,269.4L676,269.6L676.2,269.7L676.5,269.9L676.8,270.1L677.2,270.3ZM676.3,270.6L676.9,270.8L677.5,271L678.1,271.1L678.7,271.2L679.4,271.3L680.1,271.4L680.8,271.5L681.5,271.5L682.3,271.6L683,271.6L683.7,271.6L684.5,271.5L685.2,271.5L685.9,271.4L686.6,271.3L687.3,271.2L687.9,271.1L688.5,271L689.1,270.8L689.7,270.6L690.2,270.5L690.6,270.3L691,270L691.4,269.8L691.7,269.6L692,269.3L692.2,269.1L692.3,268.9L692.4,268.6L692.4,268.3L692.4,268.1L692.3,267.8L692.2,267.6L692,267.3L691.7,267.1L691.4,266.9L691,266.7L690.6,266.4L690.2,266.2L689.7,266.1L689.1,265.9L688.5,265.7L687.9,265.6L687.3,265.5L686.6,265.4L685.9,265.3L685.2,265.2L684.5,265.1L683.7,265.1L683,265.1L682.3,265.1L681.5,265.1L680.8,265.2L680.1,265.3L679.4,265.4L678.7,265.5L678.1,265.6L677.5,265.7L676.9,265.9L676.3,266.1L675.8,266.2L675.4,266.4L675,266.7L674.6,266.9L674.3,267.1L674,267.3L673.8,267.6L673.7,267.8L673.6,268.1L673.6,268.3L673.6,268.6L673.7,268.9L673.8,269.1L674,269.3L674.3,269.6L674.6,269.8L675,270L675.4,270.3L675.8,270.5Z" fill="#11ffee" fill-rule="evenodd"/><path d="M676.8,270.6L677.3,270.7L677.9,270.9L678.4,271L679,271.1L679.7,271.2L680.3,271.3L681,271.4L681.6,271.4L682.3,271.4L683,271.4L683.7,271.4L684.4,271.4L685,271.4L685.7,271.3L686.3,271.2L687,271.1L687.6,271L688.1,270.9L688.7,270.7L689.2,270.6L689.7,270.4L690.1,270.2L690.5,270L690.8,269.8L691.1,269.6L691.3,269.4L691.5,269.1L691.6,268.9L691.7,268.7L691.7,268.4L691.7,268.2L691.6,268L691.5,267.7L691.3,267.5L691.1,267.3L690.8,267.1L690.5,266.9L690.1,266.7L689.7,266.5L689.2,266.3L688.7,266.1L688.1,266L687.6,265.9L687,265.8L686.3,265.7L685.7,265.6L685,265.5L684.4,265.5L683.7,265.4L683,265.4L682.3,265.4L681.6,265.5L681,265.5L680.3,265.6L679.7,265.7L679,265.8L678.4,265.9L677.9,266L677.3,266.1L676.8,266.3L676.3,266.5L675.9,266.7L675.5,266.9L675.2,267.1L674.9,267.3L674.7,267.5L674.5,267.7L674.4,268L674.3,268.2L674.3,268.4L674.3,268.7L674.4,268.9L674.5,269.1L674.7,269.4L674.9,269.6L675.2,269.8L675.5,270L675.9,270.2L676.3,270.4ZM675.5,270.8L676.1,271L676.8,271.1L677.5,271.3L678.2,271.4L678.9,271.6L679.7,271.7L680.5,271.7L681.3,271.8L682.2,271.8L683,271.8L683.8,271.8L684.7,271.8L685.5,271.7L686.3,271.7L687.1,271.6L687.8,271.4L688.5,271.3L689.2,271.1L689.9,271L690.5,270.8L691.1,270.6L691.6,270.3L692,270.1L692.4,269.9L692.8,269.6L693.1,269.3L693.3,269L693.5,268.8L693.6,268.5L693.6,268.2L693.6,267.9L693.5,267.6L693.3,267.3L693.1,267.1L692.8,266.8L692.4,266.5L692,266.3L691.6,266.1L691.1,265.8L690.5,265.6L689.9,265.4L689.2,265.3L688.5,265.1L687.8,265L687.1,264.8L686.3,264.7L685.5,264.7L684.7,264.6L683.8,264.6L683,264.6L682.2,264.6L681.3,264.6L680.5,264.7L679.7,264.7L678.9,264.8L678.2,265L677.5,265.1L676.8,265.3L676.1,265.4L675.5,265.6L674.9,265.8L674.4,266.1L674,266.3L673.6,266.5L673.2,266.8L672.9,267.1L672.7,267.3L672.5,267.6L672.4,267.9L672.4,268.2L672.4,268.5L672.5,268.8L672.7,269L672.9,269.3L673.2,269.6L673.6,269.9L674,270.1L674.4,270.3L674.9,270.6Z" fill="#14ffeb" fill-rule="evenodd"/><path d="M676,270.7L676.6,270.9L677.2,271L677.8,271.2L678.5,271.3L679.2,271.4L679.9,271.5L680.7,271.6L681.5,271.6L682.2,271.7L683,271.7L683.8,271.7L684.5,271.6L685.3,271.6L686.1,271.5L686.8,271.4L687.5,271.3L688.2,271.2L688.8,271L689.4,270.9L690,270.7L690.5,270.5L691,270.3L691.4,270.1L691.8,269.8L692.1,269.6L692.4,269.3L692.6,269.1L692.8,268.8L692.9,268.6L692.9,268.3L692.9,268L692.8,267.8L692.6,267.5L692.4,267.2L692.1,267L691.8,266.7L691.4,266.5L691,266.3L690.5,266.1L690,265.9L689.4,265.7L688.8,265.5L688.2,265.4L687.5,265.3L686.8,265.1L686.1,265.1L685.3,265L684.5,264.9L683.8,264.9L683,264.9L682.2,264.9L681.5,264.9L680.7,265L679.9,265.1L679.2,265.1L678.5,265.3L677.8,265.4L677.2,265.5L676.6,265.7L676,265.9L675.5,266.1L675,266.3L674.6,266.5L674.2,266.7L673.9,267L673.6,267.2L673.4,267.5L673.2,267.8L673.1,268L673.1,268.3L673.1,268.6L673.2,268.8L673.4,269.1L673.6,269.3L673.9,269.6L674.2,269.8L674.6,270.1L675,270.3L675.5,270.5ZM674.7,270.9L675.4,271.1L676.1,271.3L676.9,271.5L677.7,271.6L678.5,271.8L679.4,271.9L680.3,272L681.2,272L682.1,272.1L683,272.1L683.9,272.1L684.8,272L685.7,272L686.6,271.9L687.5,271.8L688.3,271.6L689.1,271.5L689.9,271.3L690.6,271.1L691.3,270.9L691.9,270.7L692.5,270.4L693,270.2L693.5,269.9L693.9,269.6L694.2,269.3L694.4,269L694.6,268.7L694.7,268.4L694.8,268L694.7,267.7L694.6,267.4L694.4,267.1L694.2,266.8L693.9,266.5L693.5,266.2L693,265.9L692.5,265.7L691.9,265.4L691.3,265.2L690.6,265L689.9,264.8L689.1,264.6L688.3,264.4L687.5,264.3L686.6,264.2L685.7,264.1L684.8,264L683.9,264L683,264L682.1,264L681.2,264L680.3,264.1L679.4,264.2L678.5,264.3L677.7,264.4L676.9,264.6L676.1,264.8L675.4,265L674.7,265.2L674.1,265.4L673.5,265.7L673,265.9L672.5,266.2L672.1,266.5L671.8,266.8L671.6,267.1L671.4,267.4L671.3,267.7L671.2,268L671.3,268.4L671.4,268.7L671.6,269L671.8,269.3L672.1,269.6L672.5,269.9L673,270.2L673.5,270.4L674.1,270.7Z" fill="#17ffe8" fill-rule="evenodd"/><path d="M675.2,270.8L675.8,271L676.5,271.2L677.2,271.4L678,271.5L678.8,271.6L679.6,271.8L680.4,271.8L681.3,271.9L682.1,271.9L683,271.9L683.9,271.9L684.7,271.9L685.6,271.8L686.4,271.8L687.2,271.6L688,271.5L688.8,271.4L689.5,271.2L690.2,271L690.8,270.8L691.4,270.6L691.9,270.4L692.4,270.1L692.9,269.9L693.2,269.6L693.5,269.3L693.8,269L693.9,268.7L694,268.4L694.1,268.1L694,267.8L693.9,267.5L693.8,267.2L693.5,267L693.2,266.7L692.9,266.4L692.4,266.2L691.9,265.9L691.4,265.7L690.8,265.4L690.2,265.2L689.5,265.1L688.8,264.9L688,264.8L687.2,264.6L686.4,264.5L685.6,264.4L684.7,264.4L683.9,264.3L683,264.3L682.1,264.3L681.3,264.4L680.4,264.4L679.6,264.5L678.8,264.6L678,264.8L677.2,264.9L676.5,265.1L675.8,265.2L675.2,265.4L674.6,265.7L674.1,265.9L673.6,266.2L673.1,266.4L672.8,266.7L672.5,267L672.2,267.2L672.1,267.5L672,267.8L671.9,268.1L672,268.4L672.1,268.7L672.2,269L672.5,269.3L672.8,269.6L673.1,269.9L673.6,270.1L674.1,270.4L674.6,270.6ZM673.8,271L674.6,271.3L675.4,271.5L676.2,271.7L677.1,271.8L678,272L679,272.1L680,272.2L681,272.3L682,272.3L683,272.3L684,272.3L685,272.3L686,272.2L687,272.1L688,272L688.9,271.8L689.8,271.7L690.6,271.5L691.4,271.3L692.2,271L692.9,270.8L693.5,270.5L694.1,270.2L694.6,269.9L695,269.6L695.3,269.2L695.6,268.9L695.8,268.6L695.9,268.2L696,267.9L695.9,267.5L695.8,267.2L695.6,266.8L695.3,266.5L695,266.2L694.6,265.8L694.1,265.5L693.5,265.2L692.9,265L692.2,264.7L691.4,264.5L690.6,264.3L689.8,264.1L688.9,263.9L688,263.8L687,263.6L686,263.5L685,263.5L684,263.4L683,263.4L682,263.4L681,263.5L680,263.5L679,263.6L678,263.8L677.1,263.9L676.2,264.1L675.4,264.3L674.6,264.5L673.8,264.7L673.1,265L672.5,265.2L671.9,265.5L671.4,265.8L671,266.2L670.7,266.5L670.4,266.8L670.2,267.2L670.1,267.5L670,267.9L670.1,268.2L670.2,268.6L670.4,268.9L670.7,269.2L671,269.6L671.4,269.9L671.9,270.2L672.5,270.5L673.1,270.8Z" fill="#1affe5" fill-rule="evenodd"/><path d="M674.3,270.9L675,271.2L675.8,271.4L676.6,271.6L677.4,271.7L678.3,271.9L679.2,272L680.1,272.1L681.1,272.1L682,272.2L683,272.2L684,272.2L684.9,272.1L685.9,272.1L686.8,272L687.7,271.9L688.6,271.7L689.4,271.6L690.2,271.4L691,271.2L691.7,270.9L692.3,270.7L692.9,270.4L693.4,270.2L693.9,269.9L694.3,269.6L694.6,269.3L694.9,269L695.1,268.6L695.2,268.3L695.2,268L695.2,267.6L695.1,267.3L694.9,267L694.6,266.7L694.3,266.4L693.9,266.1L693.4,265.8L692.9,265.5L692.3,265.2L691.7,265L691,264.8L690.2,264.6L689.4,264.4L688.6,264.2L687.7,264.1L686.8,264L685.9,263.9L684.9,263.8L684,263.8L683,263.8L682,263.8L681.1,263.8L680.1,263.9L679.2,264L678.3,264.1L677.4,264.2L676.6,264.4L675.8,264.6L675,264.8L674.3,265L673.7,265.2L673.1,265.5L672.6,265.8L672.1,266.1L671.7,266.4L671.4,266.7L671.1,267L670.9,267.3L670.8,267.6L670.8,268L670.8,268.3L670.9,268.6L671.1,269L671.4,269.3L671.7,269.6L672.1,269.9L672.6,270.2L673.1,270.4L673.7,270.7ZM673,271.1L673.8,271.4L674.7,271.6L675.6,271.8L676.6,272L677.6,272.2L678.6,272.3L679.7,272.4L680.8,272.5L681.9,272.5L683,272.6L684.1,272.5L685.2,272.5L686.3,272.4L687.4,272.3L688.4,272.2L689.4,272L690.4,271.8L691.3,271.6L692.2,271.4L693,271.1L693.8,270.9L694.5,270.6L695.1,270.2L695.6,269.9L696.1,269.6L696.5,269.2L696.8,268.8L697,268.4L697.1,268.1L697.2,267.7L697.1,267.3L697,266.9L696.8,266.5L696.5,266.2L696.1,265.8L695.6,265.5L695.1,265.1L694.5,264.8L693.8,264.5L693,264.2L692.2,264L691.3,263.7L690.4,263.5L689.4,263.3L688.4,263.2L687.4,263L686.3,262.9L685.2,262.9L684.1,262.8L683,262.8L681.9,262.8L680.8,262.9L679.7,262.9L678.6,263L677.6,263.2L676.6,263.3L675.6,263.5L674.7,263.7L673.8,264L673,264.2L672.2,264.5L671.5,264.8L670.9,265.1L670.4,265.5L669.9,265.8L669.5,266.2L669.2,266.5L669,266.9L668.9,267.3L668.8,267.7L668.9,268.1L669,268.4L669.2,268.8L669.5,269.2L669.9,269.6L670.4,269.9L670.9,270.2L671.5,270.6L672.2,270.9Z" fill="#1fffe0" fill-rule="evenodd"/><path d="M673.5,271.1L674.3,271.3L675.1,271.5L676,271.7L676.9,271.9L677.9,272.1L678.8,272.2L679.9,272.3L680.9,272.4L681.9,272.4L683,272.4L684.1,272.4L685.1,272.4L686.1,272.3L687.2,272.2L688.1,272.1L689.1,271.9L690,271.7L690.9,271.5L691.7,271.3L692.5,271.1L693.2,270.8L693.9,270.5L694.5,270.2L695,269.9L695.4,269.6L695.8,269.2L696.1,268.9L696.3,268.5L696.4,268.2L696.5,267.8L696.4,267.4L696.3,267.1L696.1,266.7L695.8,266.4L695.4,266L695,265.7L694.5,265.4L693.9,265.1L693.2,264.8L692.5,264.5L691.7,264.3L690.9,264.1L690,263.9L689.1,263.7L688.1,263.5L687.2,263.4L686.1,263.3L685.1,263.2L684.1,263.2L683,263.2L681.9,263.2L680.9,263.2L679.9,263.3L678.8,263.4L677.9,263.5L676.9,263.7L676,263.9L675.1,264.1L674.3,264.3L673.5,264.5L672.8,264.8L672.1,265.1L671.5,265.4L671,265.7L670.6,266L670.2,266.4L669.9,266.7L669.7,267.1L669.6,267.4L669.5,267.8L669.6,268.2L669.7,268.5L669.9,268.9L670.2,269.2L670.6,269.6L671,269.9L671.5,270.2L672.1,270.5L672.8,270.8ZM672.1,271.2L673,271.5L673.9,271.8L674.9,272L676,272.2L677.1,272.4L678.2,272.5L679.4,272.7L680.6,272.7L681.8,272.8L683,272.8L684.2,272.8L685.4,272.7L686.6,272.7L687.8,272.5L688.9,272.4L690,272.2L691.1,272L692.1,271.8L693,271.5L693.9,271.2L694.7,270.9L695.5,270.6L696.2,270.3L696.8,269.9L697.3,269.5L697.7,269.1L698,268.7L698.2,268.3L698.4,267.9L698.4,267.5L698.4,267.1L698.2,266.7L698,266.3L697.7,265.9L697.3,265.5L696.8,265.1L696.2,264.7L695.5,264.4L694.7,264L693.9,263.7L693,263.5L692.1,263.2L691.1,263L690,262.8L688.9,262.6L687.8,262.4L686.6,262.3L685.4,262.3L684.2,262.2L683,262.2L681.8,262.2L680.6,262.3L679.4,262.3L678.2,262.4L677.1,262.6L676,262.8L674.9,263L673.9,263.2L673,263.5L672.1,263.7L671.3,264L670.5,264.4L669.8,264.7L669.2,265.1L668.7,265.5L668.3,265.9L668,266.3L667.8,266.7L667.6,267.1L667.6,267.5L667.6,267.9L667.8,268.3L668,268.7L668.3,269.1L668.7,269.5L669.2,269.9L669.8,270.3L670.5,270.6L671.3,270.9Z" fill="#24ffdb" fill-rule="evenodd"/><path d="M672.6,271.2L673.5,271.4L674.4,271.7L675.3,271.9L676.3,272.1L677.4,272.3L678.5,272.4L679.6,272.5L680.7,272.6L681.8,272.6L683,272.7L684.2,272.6L685.3,272.6L686.4,272.5L687.5,272.4L688.6,272.3L689.7,272.1L690.7,271.9L691.6,271.7L692.5,271.4L693.4,271.2L694.2,270.9L694.9,270.6L695.5,270.2L696.1,269.9L696.6,269.5L697,269.2L697.3,268.8L697.5,268.4L697.6,268L697.7,267.6L697.6,267.2L697.5,266.8L697.3,266.4L697,266.1L696.6,265.7L696.1,265.3L695.5,265L694.9,264.6L694.2,264.3L693.4,264L692.5,263.8L691.6,263.5L690.7,263.3L689.7,263.1L688.6,262.9L687.5,262.8L686.4,262.7L685.3,262.6L684.2,262.6L683,262.6L681.8,262.6L680.7,262.6L679.6,262.7L678.5,262.8L677.4,262.9L676.3,263.1L675.3,263.3L674.4,263.5L673.5,263.8L672.6,264L671.8,264.3L671.1,264.6L670.5,265L669.9,265.3L669.4,265.7L669,266.1L668.7,266.4L668.5,266.8L668.4,267.2L668.3,267.6L668.4,268L668.5,268.4L668.7,268.8L669,269.2L669.4,269.5L669.9,269.9L670.5,270.2L671.1,270.6L671.8,270.9ZM671.2,271.4L672.1,271.7L673.2,271.9L674.3,272.2L675.4,272.4L676.6,272.6L677.8,272.8L679.1,272.9L680.4,273L681.7,273L683,273L684.3,273L685.6,273L686.9,272.9L688.2,272.8L689.4,272.6L690.6,272.4L691.7,272.2L692.8,271.9L693.9,271.7L694.8,271.4L695.7,271L696.5,270.7L697.2,270.3L697.9,269.9L698.4,269.5L698.9,269.1L699.2,268.6L699.5,268.2L699.7,267.7L699.7,267.3L699.7,266.8L699.5,266.4L699.2,266L698.9,265.5L698.4,265.1L697.9,264.7L697.2,264.3L696.5,263.9L695.7,263.6L694.8,263.2L693.9,262.9L692.8,262.7L691.7,262.4L690.6,262.2L689.4,262L688.2,261.8L686.9,261.7L685.6,261.6L684.3,261.6L683,261.6L681.7,261.6L680.4,261.6L679.1,261.7L677.8,261.8L676.6,262L675.4,262.2L674.3,262.4L673.2,262.7L672.1,262.9L671.2,263.2L670.3,263.6L669.5,263.9L668.8,264.3L668.1,264.7L667.6,265.1L667.1,265.5L666.8,266L666.5,266.4L666.3,266.8L666.3,267.3L666.3,267.7L666.5,268.2L666.8,268.6L667.1,269.1L667.6,269.5L668.1,269.9L668.8,270.3L669.5,270.7L670.3,271Z" fill="#2bffd4" fill-rule="evenodd"/><path d="M671.7,271.3L672.6,271.6L673.6,271.8L674.7,272.1L675.8,272.3L676.9,272.5L678.1,272.6L679.3,272.7L680.5,272.8L681.7,272.9L683,272.9L684.3,272.9L685.5,272.8L686.7,272.7L687.9,272.6L689.1,272.5L690.2,272.3L691.3,272.1L692.4,271.8L693.4,271.6L694.3,271.3L695.1,271L695.9,270.6L696.6,270.3L697.2,269.9L697.7,269.5L698.2,269.1L698.5,268.7L698.7,268.3L698.9,267.8L698.9,267.4L698.9,267L698.7,266.6L698.5,266.1L698.2,265.7L697.7,265.3L697.2,264.9L696.6,264.6L695.9,264.2L695.1,263.9L694.3,263.5L693.4,263.3L692.4,263L691.3,262.7L690.2,262.5L689.1,262.4L687.9,262.2L686.7,262.1L685.5,262L684.3,262L683,261.9L681.7,262L680.5,262L679.3,262.1L678.1,262.2L676.9,262.4L675.8,262.5L674.7,262.7L673.6,263L672.6,263.3L671.7,263.5L670.9,263.9L670.1,264.2L669.4,264.6L668.8,264.9L668.3,265.3L667.8,265.7L667.5,266.1L667.3,266.6L667.1,267L667.1,267.4L667.1,267.8L667.3,268.3L667.5,268.7L667.8,269.1L668.3,269.5L668.8,269.9L669.4,270.3L670.1,270.6L670.9,271ZM670.3,271.5L671.3,271.8L672.4,272.1L673.6,272.4L674.8,272.6L676.1,272.8L677.4,273L678.8,273.1L680.2,273.2L681.6,273.3L683,273.3L684.4,273.3L685.8,273.2L687.2,273.1L688.6,273L689.9,272.8L691.2,272.6L692.4,272.4L693.6,272.1L694.7,271.8L695.7,271.5L696.7,271.1L697.6,270.7L698.4,270.3L699,269.9L699.6,269.5L700.1,269L700.5,268.5L700.8,268.1L701,267.6L701,267.1L701,266.6L700.8,266.1L700.5,265.6L700.1,265.2L699.6,264.7L699,264.3L698.4,263.9L697.6,263.5L696.7,263.1L695.7,262.7L694.7,262.4L693.6,262.1L692.4,261.8L691.2,261.6L689.9,261.4L688.6,261.2L687.2,261.1L685.8,261L684.4,260.9L683,260.9L681.6,260.9L680.2,261L678.8,261.1L677.4,261.2L676.1,261.4L674.8,261.6L673.6,261.8L672.4,262.1L671.3,262.4L670.3,262.7L669.3,263.1L668.4,263.5L667.6,263.9L667,264.3L666.4,264.7L665.9,265.2L665.5,265.6L665.2,266.1L665,266.6L665,267.1L665,267.6L665.2,268.1L665.5,268.5L665.9,269L666.4,269.5L667,269.9L667.6,270.3L668.4,270.7L669.3,271.1Z" fill="#33ffcc" fill-rule="evenodd"/><path d="M670.8,271.4L671.8,271.7L672.9,272L674,272.3L675.2,272.5L676.4,272.7L677.7,272.8L679,273L680.3,273.1L681.6,273.1L683,273.1L684.4,273.1L685.7,273.1L687,273L688.3,272.8L689.6,272.7L690.8,272.5L692,272.3L693.1,272L694.2,271.7L695.2,271.4L696.1,271.1L696.9,270.7L697.7,270.3L698.3,269.9L698.9,269.5L699.4,269L699.7,268.6L700,268.1L700.2,267.7L700.2,267.2L700.2,266.8L700,266.3L699.7,265.8L699.4,265.4L698.9,264.9L698.3,264.5L697.7,264.1L696.9,263.7L696.1,263.4L695.2,263L694.2,262.7L693.1,262.4L692,262.2L690.8,261.9L689.6,261.7L688.3,261.6L687,261.5L685.7,261.4L684.4,261.3L683,261.3L681.6,261.3L680.3,261.4L679,261.5L677.7,261.6L676.4,261.7L675.2,261.9L674,262.2L672.9,262.4L671.8,262.7L670.8,263L669.9,263.4L669.1,263.7L668.3,264.1L667.7,264.5L667.1,264.9L666.6,265.4L666.3,265.8L666,266.3L665.8,266.8L665.8,267.2L665.8,267.7L666,268.1L666.3,268.6L666.6,269L667.1,269.5L667.7,269.9L668.3,270.3L669.1,270.7L669.9,271.1ZM669.3,271.6L670.4,271.9L671.6,272.3L672.9,272.5L674.2,272.8L675.6,273L677,273.2L678.5,273.3L680,273.4L681.5,273.5L683,273.5L684.5,273.5L686,273.4L687.5,273.3L689,273.2L690.4,273L691.8,272.8L693.1,272.5L694.4,272.3L695.6,271.9L696.7,271.6L697.7,271.2L698.6,270.8L699.5,270.4L700.2,269.9L700.9,269.4L701.4,268.9L701.8,268.4L702.1,267.9L702.3,267.4L702.3,266.9L702.3,266.4L702.1,265.8L701.8,265.3L701.4,264.8L700.9,264.3L700.2,263.9L699.5,263.4L698.6,263L697.7,262.6L696.7,262.2L695.6,261.8L694.4,261.5L693.1,261.2L691.8,261L690.4,260.7L689,260.6L687.5,260.4L686,260.3L684.5,260.3L683,260.2L681.5,260.3L680,260.3L678.5,260.4L677,260.6L675.6,260.7L674.2,261L672.9,261.2L671.6,261.5L670.4,261.8L669.3,262.2L668.3,262.6L667.4,263L666.5,263.4L665.8,263.9L665.1,264.3L664.6,264.8L664.2,265.3L663.9,265.8L663.7,266.4L663.7,266.9L663.7,267.4L663.9,267.9L664.2,268.4L664.6,268.9L665.1,269.4L665.8,269.9L666.5,270.4L667.4,270.8L668.3,271.2Z" fill="#3cffc3" fill-rule="evenodd"/><path d="M669.9,271.5L671,271.9L672.1,272.2L673.3,272.4L674.6,272.7L675.9,272.9L677.3,273.1L678.7,273.2L680.1,273.3L681.5,273.4L683,273.4L684.5,273.4L685.9,273.3L687.3,273.2L688.7,273.1L690.1,272.9L691.4,272.7L692.7,272.4L693.9,272.2L695,271.9L696.1,271.5L697.1,271.1L698,270.8L698.8,270.3L699.5,269.9L700.1,269.4L700.6,269L701,268.5L701.3,268L701.5,267.5L701.5,267L701.5,266.5L701.3,266L701,265.5L700.6,265L700.1,264.6L699.5,264.1L698.8,263.7L698,263.3L697.1,262.9L696.1,262.5L695,262.2L693.9,261.9L692.7,261.6L691.4,261.3L690.1,261.1L688.7,260.9L687.3,260.8L685.9,260.7L684.5,260.7L683,260.6L681.5,260.7L680.1,260.7L678.7,260.8L677.3,260.9L675.9,261.1L674.6,261.3L673.3,261.6L672.1,261.9L671,262.2L669.9,262.5L668.9,262.9L668,263.3L667.2,263.7L666.5,264.1L665.9,264.6L665.4,265L665,265.5L664.7,266L664.5,266.5L664.5,267L664.5,267.5L664.7,268L665,268.5L665.4,269L665.9,269.4L666.5,269.9L667.2,270.3L668,270.8L668.9,271.1ZM668.4,271.7L669.6,272.1L670.8,272.4L672.2,272.7L673.6,273L675.1,273.2L676.6,273.4L678.2,273.6L679.8,273.7L681.4,273.8L683,273.8L684.6,273.8L686.2,273.7L687.8,273.6L689.4,273.4L690.9,273.2L692.4,273L693.8,272.7L695.2,272.4L696.4,272.1L697.6,271.7L698.7,271.3L699.7,270.9L700.7,270.4L701.4,269.9L702.1,269.4L702.7,268.9L703.1,268.3L703.4,267.8L703.6,267.2L703.7,266.7L703.6,266.1L703.4,265.6L703.1,265L702.7,264.5L702.1,263.9L701.4,263.4L700.7,263L699.7,262.5L698.7,262L697.6,261.6L696.4,261.3L695.2,260.9L693.8,260.6L692.4,260.3L690.9,260.1L689.4,259.9L687.8,259.8L686.2,259.6L684.6,259.6L683,259.6L681.4,259.6L679.8,259.6L678.2,259.8L676.6,259.9L675.1,260.1L673.6,260.3L672.2,260.6L670.8,260.9L669.6,261.3L668.4,261.6L667.3,262L666.3,262.5L665.3,263L664.6,263.4L663.9,263.9L663.3,264.5L662.9,265L662.6,265.6L662.4,266.1L662.3,266.7L662.4,267.2L662.6,267.8L662.9,268.3L663.3,268.9L663.9,269.4L664.6,269.9L665.3,270.4L666.3,270.9L667.3,271.3Z" fill="#45ffba" fill-rule="evenodd"/><path d="M668.9,271.6L670.1,272L671.3,272.3L672.6,272.6L674,272.9L675.4,273.1L676.9,273.3L678.4,273.4L679.9,273.5L681.4,273.6L683,273.6L684.6,273.6L686.1,273.5L687.6,273.4L689.1,273.3L690.6,273.1L692,272.9L693.4,272.6L694.7,272.3L695.9,272L697.1,271.6L698.1,271.2L699.1,270.8L700,270.4L700.7,269.9L701.4,269.4L701.9,268.9L702.3,268.4L702.6,267.9L702.8,267.3L702.9,266.8L702.8,266.3L702.6,265.7L702.3,265.2L701.9,264.7L701.4,264.2L700.7,263.7L700,263.2L699.1,262.8L698.1,262.4L697.1,262L695.9,261.6L694.7,261.3L693.4,261L692,260.7L690.6,260.5L689.1,260.3L687.6,260.2L686.1,260L684.6,260L683,260L681.4,260L679.9,260L678.4,260.2L676.9,260.3L675.4,260.5L674,260.7L672.6,261L671.3,261.3L670.1,261.6L668.9,262L667.9,262.4L666.9,262.8L666,263.2L665.3,263.7L664.6,264.2L664.1,264.7L663.7,265.2L663.4,265.7L663.2,266.3L663.1,266.8L663.2,267.3L663.4,267.9L663.7,268.4L664.1,268.9L664.6,269.4L665.3,269.9L666,270.4L666.9,270.8L667.9,271.2ZM667.4,271.8L668.6,272.2L670,272.6L671.5,272.9L673,273.2L674.5,273.5L676.2,273.7L677.8,273.8L679.5,274L681.3,274L683,274L684.7,274L686.5,274L688.2,273.8L689.8,273.7L691.5,273.5L693,273.2L694.5,272.9L696,272.6L697.4,272.2L698.6,271.8L699.8,271.4L700.9,270.9L701.8,270.4L702.7,269.9L703.4,269.4L704,268.8L704.5,268.2L704.8,267.6L705,267L705.1,266.5L705,265.9L704.8,265.3L704.5,264.7L704,264.1L703.4,263.5L702.7,263L701.8,262.5L700.9,262L699.8,261.5L698.6,261.1L697.4,260.7L696,260.3L694.5,260L693,259.7L691.5,259.4L689.8,259.2L688.2,259.1L686.5,258.9L684.7,258.9L683,258.9L681.3,258.9L679.5,258.9L677.8,259.1L676.2,259.2L674.5,259.4L673,259.7L671.5,260L670,260.3L668.6,260.7L667.4,261.1L666.2,261.5L665.1,262L664.2,262.5L663.3,263L662.6,263.5L662,264.1L661.5,264.7L661.2,265.3L661,265.9L660.9,266.5L661,267L661.2,267.6L661.5,268.2L662,268.8L662.6,269.4L663.3,269.9L664.2,270.4L665.1,270.9L666.2,271.4Z" fill="#4effb1" fill-rule="evenodd"/><path d="M668,271.7L669.2,272.1L670.5,272.5L671.9,272.8L673.3,273.1L674.9,273.3L676.4,273.5L678,273.7L679.7,273.8L681.3,273.9L683,273.9L684.7,273.9L686.3,273.8L688,273.7L689.6,273.5L691.1,273.3L692.7,273.1L694.1,272.8L695.5,272.5L696.8,272.1L698,271.7L699.2,271.3L700.2,270.9L701.1,270.4L701.9,269.9L702.6,269.4L703.2,268.8L703.7,268.3L704,267.7L704.2,267.2L704.3,266.6L704.2,266L704,265.4L703.7,264.9L703.2,264.3L702.6,263.8L701.9,263.3L701.1,262.8L700.2,262.3L699.2,261.8L698,261.4L696.8,261L695.5,260.7L694.1,260.4L692.7,260.1L691.1,259.8L689.6,259.6L688,259.5L686.3,259.4L684.7,259.3L683,259.3L681.3,259.3L679.7,259.4L678,259.5L676.4,259.6L674.9,259.8L673.3,260.1L671.9,260.4L670.5,260.7L669.2,261L668,261.4L666.8,261.8L665.8,262.3L664.9,262.8L664.1,263.3L663.4,263.8L662.8,264.3L662.3,264.9L662,265.4L661.8,266L661.7,266.6L661.8,267.2L662,267.7L662.3,268.3L662.8,268.8L663.4,269.4L664.1,269.9L664.9,270.4L665.8,270.9L666.8,271.3ZM666.4,271.9L667.7,272.4L669.2,272.8L670.7,273.1L672.3,273.4L674,273.7L675.7,273.9L677.5,274.1L679.3,274.2L681.2,274.3L683,274.3L684.8,274.3L686.7,274.2L688.5,274.1L690.3,273.9L692,273.7L693.7,273.4L695.3,273.1L696.8,272.8L698.3,272.4L699.6,271.9L700.9,271.5L702,271L703.1,270.5L704,269.9L704.7,269.3L705.4,268.7L705.9,268.1L706.2,267.5L706.5,266.9L706.5,266.2L706.5,265.6L706.2,265L705.9,264.3L705.4,263.7L704.7,263.1L704,262.6L703.1,262L702,261.5L700.9,261L699.6,260.5L698.3,260.1L696.8,259.7L695.3,259.3L693.7,259L692,258.8L690.3,258.5L688.5,258.4L686.7,258.2L684.8,258.2L683,258.1L681.2,258.2L679.3,258.2L677.5,258.4L675.7,258.5L674,258.8L672.3,259L670.7,259.3L669.2,259.7L667.7,260.1L666.4,260.5L665.1,261L664,261.5L662.9,262L662,262.6L661.3,263.1L660.6,263.7L660.1,264.3L659.8,265L659.5,265.6L659.5,266.2L659.5,266.9L659.8,267.5L660.1,268.1L660.6,268.7L661.3,269.3L662,269.9L662.9,270.5L664,271L665.1,271.5Z" fill="#57ffa8" fill-rule="evenodd"/><path d="M667,271.9L668.3,272.3L669.7,272.7L671.2,273L672.7,273.3L674.3,273.6L676,273.8L677.7,273.9L679.5,274.1L681.2,274.1L683,274.2L684.8,274.1L686.5,274.1L688.3,273.9L690,273.8L691.7,273.6L693.3,273.3L694.8,273L696.3,272.7L697.7,272.3L699,271.9L700.2,271.4L701.3,270.9L702.3,270.4L703.2,269.9L703.9,269.3L704.6,268.8L705,268.2L705.4,267.6L705.6,267L705.7,266.4L705.6,265.8L705.4,265.1L705,264.5L704.6,264L703.9,263.4L703.2,262.8L702.3,262.3L701.3,261.8L700.2,261.3L699,260.9L697.7,260.4L696.3,260.1L694.8,259.7L693.3,259.4L691.7,259.2L690,259L688.3,258.8L686.5,258.7L684.8,258.6L683,258.6L681.2,258.6L679.5,258.7L677.7,258.8L676,259L674.3,259.2L672.7,259.4L671.2,259.7L669.7,260.1L668.3,260.4L667,260.9L665.8,261.3L664.7,261.8L663.7,262.3L662.8,262.8L662.1,263.4L661.4,264L661,264.5L660.6,265.1L660.4,265.8L660.3,266.4L660.4,267L660.6,267.6L661,268.2L661.4,268.8L662.1,269.3L662.8,269.9L663.7,270.4L664.7,270.9L665.8,271.4ZM665.3,272.1L666.8,272.5L668.3,273L669.9,273.3L671.6,273.7L673.4,273.9L675.3,274.2L677.2,274.4L679.1,274.5L681,274.6L683,274.6L685,274.6L686.9,274.5L688.8,274.4L690.7,274.2L692.6,273.9L694.4,273.7L696.1,273.3L697.7,273L699.2,272.5L700.7,272.1L702,271.6L703.2,271.1L704.3,270.5L705.3,269.9L706.1,269.3L706.8,268.7L707.3,268L707.7,267.3L707.9,266.7L708,266L707.9,265.3L707.7,264.7L707.3,264L706.8,263.3L706.1,262.7L705.3,262.1L704.3,261.5L703.2,261L702,260.4L700.7,259.9L699.2,259.5L697.7,259L696.1,258.7L694.4,258.3L692.6,258.1L690.7,257.8L688.8,257.6L686.9,257.5L685,257.4L683,257.4L681,257.4L679.1,257.5L677.2,257.6L675.3,257.8L673.4,258.1L671.6,258.3L669.9,258.7L668.3,259L666.8,259.5L665.3,259.9L664,260.4L662.8,261L661.7,261.5L660.7,262.1L659.9,262.7L659.2,263.3L658.7,264L658.3,264.7L658.1,265.3L658,266L658.1,266.7L658.3,267.3L658.7,268L659.2,268.7L659.9,269.3L660.7,269.9L661.7,270.5L662.8,271.1L664,271.6Z" fill="#61ff9e" fill-rule="evenodd"/><path d="M665.9,272L667.3,272.4L668.8,272.8L670.4,273.2L672.1,273.5L673.8,273.8L675.5,274L677.4,274.2L679.2,274.3L681.1,274.4L683,274.4L684.9,274.4L686.8,274.3L688.6,274.2L690.5,274L692.2,273.8L693.9,273.5L695.6,273.2L697.2,272.8L698.7,272.4L700.1,272L701.3,271.5L702.5,271L703.6,270.5L704.5,269.9L705.3,269.3L705.9,268.7L706.4,268.1L706.8,267.4L707,266.8L707.1,266.1L707,265.5L706.8,264.8L706.4,264.2L705.9,263.6L705.3,263L704.5,262.4L703.6,261.8L702.5,261.3L701.3,260.8L700.1,260.3L698.7,259.8L697.2,259.4L695.6,259.1L693.9,258.8L692.2,258.5L690.5,258.3L688.6,258.1L686.8,258L684.9,257.9L683,257.9L681.1,257.9L679.2,258L677.4,258.1L675.5,258.3L673.8,258.5L672.1,258.8L670.4,259.1L668.8,259.4L667.3,259.8L665.9,260.3L664.7,260.8L663.5,261.3L662.4,261.8L661.5,262.4L660.7,263L660.1,263.6L659.6,264.2L659.2,264.8L659,265.5L658.9,266.1L659,266.8L659.2,267.4L659.6,268.1L660.1,268.7L660.7,269.3L661.5,269.9L662.4,270.5L663.5,271L664.7,271.5ZM664.3,272.2L665.8,272.7L667.4,273.1L669.1,273.5L671,273.9L672.9,274.2L674.8,274.4L676.8,274.6L678.9,274.8L680.9,274.9L683,274.9L685.1,274.9L687.1,274.8L689.2,274.6L691.2,274.4L693.1,274.2L695,273.9L696.9,273.5L698.6,273.1L700.2,272.7L701.7,272.2L703.2,271.7L704.5,271.1L705.6,270.5L706.6,269.9L707.5,269.3L708.2,268.6L708.8,267.9L709.2,267.2L709.4,266.5L709.5,265.8L709.4,265.1L709.2,264.3L708.8,263.6L708.2,263L707.5,262.3L706.6,261.6L705.6,261L704.5,260.4L703.2,259.8L701.7,259.3L700.2,258.8L698.6,258.4L696.9,258L695,257.6L693.1,257.3L691.2,257.1L689.2,256.9L687.1,256.8L685.1,256.7L683,256.7L680.9,256.7L678.9,256.8L676.8,256.9L674.8,257.1L672.9,257.3L671,257.6L669.1,258L667.4,258.4L665.8,258.8L664.3,259.3L662.8,259.8L661.5,260.4L660.4,261L659.4,261.6L658.5,262.3L657.8,263L657.2,263.6L656.8,264.3L656.6,265.1L656.5,265.8L656.6,266.5L656.8,267.2L657.2,267.9L657.8,268.6L658.5,269.3L659.4,269.9L660.4,270.5L661.5,271.1L662.8,271.7Z" fill="#6aff95" fill-rule="evenodd"/><path d="M664.9,272.1L666.4,272.6L668,273L669.6,273.4L671.4,273.7L673.2,274L675.1,274.3L677,274.5L679,274.6L681,274.7L683,274.7L685,274.7L687,274.6L689,274.5L690.9,274.3L692.8,274L694.6,273.7L696.4,273.4L698,273L699.6,272.6L701.1,272.1L702.5,271.6L703.7,271.1L704.8,270.5L705.8,269.9L706.7,269.3L707.3,268.6L707.9,268L708.3,267.3L708.5,266.6L708.6,265.9L708.5,265.2L708.3,264.5L707.9,263.9L707.3,263.2L706.7,262.5L705.8,261.9L704.8,261.3L703.7,260.7L702.5,260.2L701.1,259.7L699.6,259.2L698,258.8L696.4,258.4L694.6,258.1L692.8,257.8L690.9,257.5L689,257.4L687,257.2L685,257.1L683,257.1L681,257.1L679,257.2L677,257.4L675.1,257.5L673.2,257.8L671.4,258.1L669.6,258.4L668,258.8L666.4,259.2L664.9,259.7L663.5,260.2L662.3,260.7L661.2,261.3L660.2,261.9L659.3,262.5L658.7,263.2L658.1,263.9L657.7,264.5L657.5,265.2L657.4,265.9L657.5,266.6L657.7,267.3L658.1,268L658.7,268.6L659.3,269.3L660.2,269.9L661.2,270.5L662.3,271.1L663.5,271.6ZM663.2,272.3L664.8,272.9L666.5,273.3L668.3,273.8L670.3,274.1L672.3,274.4L674.3,274.7L676.4,274.9L678.6,275.1L680.8,275.1L683,275.2L685.2,275.1L687.4,275.1L689.6,274.9L691.7,274.7L693.7,274.4L695.7,274.1L697.7,273.8L699.5,273.3L701.2,272.9L702.8,272.3L704.3,271.8L705.7,271.2L706.9,270.6L708,269.9L708.9,269.2L709.7,268.5L710.3,267.8L710.7,267L711,266.3L711.1,265.5L711,264.8L710.7,264L710.3,263.3L709.7,262.5L708.9,261.8L708,261.1L706.9,260.5L705.7,259.9L704.3,259.3L702.8,258.7L701.2,258.2L699.5,257.7L697.7,257.3L695.7,256.9L693.7,256.6L691.7,256.4L689.6,256.1L687.4,256L685.2,255.9L683,255.9L680.8,255.9L678.6,256L676.4,256.1L674.3,256.4L672.3,256.6L670.3,256.9L668.3,257.3L666.5,257.7L664.8,258.2L663.2,258.7L661.7,259.3L660.3,259.9L659.1,260.5L658,261.1L657.1,261.8L656.3,262.5L655.7,263.3L655.3,264L655,264.8L654.9,265.5L655,266.3L655.3,267L655.7,267.8L656.3,268.5L657.1,269.2L658,269.9L659.1,270.6L660.3,271.2L661.7,271.8Z" fill="#73ff8c" fill-rule="evenodd"/><path d="M663.8,272.3L665.4,272.8L667.1,273.2L668.8,273.6L670.7,274L672.6,274.3L674.6,274.5L676.7,274.7L678.8,274.9L680.9,275L683,275L685.1,275L687.2,274.9L689.3,274.7L691.4,274.5L693.4,274.3L695.3,274L697.2,273.6L698.9,273.2L700.6,272.8L702.2,272.3L703.6,271.7L704.9,271.2L706.1,270.5L707.2,269.9L708.1,269.2L708.8,268.6L709.4,267.8L709.8,267.1L710,266.4L710.1,265.7L710,264.9L709.8,264.2L709.4,263.5L708.8,262.8L708.1,262.1L707.2,261.4L706.1,260.8L704.9,260.2L703.6,259.6L702.2,259.1L700.6,258.6L698.9,258.1L697.2,257.7L695.3,257.4L693.4,257.1L691.4,256.8L689.3,256.6L687.2,256.5L685.1,256.4L683,256.3L680.9,256.4L678.8,256.5L676.7,256.6L674.6,256.8L672.6,257.1L670.7,257.4L668.8,257.7L667.1,258.1L665.4,258.6L663.8,259.1L662.4,259.6L661.1,260.2L659.9,260.8L658.8,261.4L657.9,262.1L657.2,262.8L656.6,263.5L656.2,264.2L656,264.9L655.9,265.7L656,266.4L656.2,267.1L656.6,267.8L657.2,268.6L657.9,269.2L658.8,269.9L659.9,270.5L661.1,271.2L662.4,271.7ZM662,272.5L663.7,273L665.6,273.5L667.5,274L669.5,274.4L671.6,274.7L673.8,275L676.1,275.2L678.4,275.4L680.7,275.5L683,275.5L685.3,275.5L687.6,275.4L689.9,275.2L692.2,275L694.4,274.7L696.5,274.4L698.5,274L700.4,273.5L702.3,273L704,272.5L705.6,271.9L707,271.3L708.3,270.6L709.4,269.9L710.4,269.2L711.2,268.4L711.9,267.7L712.3,266.9L712.6,266.1L712.7,265.3L712.6,264.5L712.3,263.7L711.9,262.9L711.2,262.1L710.4,261.4L709.4,260.7L708.3,260L707,259.3L705.6,258.7L704,258.1L702.3,257.5L700.4,257L698.5,256.6L696.5,256.2L694.4,255.9L692.2,255.6L689.9,255.4L687.6,255.2L685.3,255.1L683,255.1L680.7,255.1L678.4,255.2L676.1,255.4L673.8,255.6L671.6,255.9L669.5,256.2L667.5,256.6L665.6,257L663.7,257.5L662,258.1L660.4,258.7L659,259.3L657.7,260L656.6,260.7L655.6,261.4L654.8,262.1L654.1,262.9L653.7,263.7L653.4,264.5L653.3,265.3L653.4,266.1L653.7,266.9L654.1,267.7L654.8,268.4L655.6,269.2L656.6,269.9L657.7,270.6L659,271.3L660.4,271.9Z" fill="#7dff82" fill-rule="evenodd"/><path d="M662.7,272.4L664.4,272.9L666.1,273.4L668,273.8L670,274.2L672,274.5L674.1,274.8L676.3,275L678.5,275.2L680.7,275.3L683,275.3L685.3,275.3L687.5,275.2L689.7,275L691.9,274.8L694,274.5L696,274.2L698,273.8L699.9,273.4L701.6,272.9L703.3,272.4L704.8,271.8L706.2,271.2L707.5,270.6L708.6,269.9L709.5,269.2L710.3,268.5L710.9,267.7L711.4,267L711.6,266.2L711.7,265.4L711.6,264.7L711.4,263.9L710.9,263.1L710.3,262.4L709.5,261.7L708.6,261L707.5,260.3L706.2,259.6L704.8,259L703.3,258.5L701.6,257.9L699.9,257.4L698,257L696,256.6L694,256.3L691.9,256L689.7,255.8L687.5,255.7L685.3,255.6L683,255.6L680.7,255.6L678.5,255.7L676.3,255.8L674.1,256L672,256.3L670,256.6L668,257L666.1,257.4L664.4,257.9L662.7,258.5L661.2,259L659.8,259.6L658.5,260.3L657.4,261L656.5,261.7L655.7,262.4L655.1,263.1L654.6,263.9L654.4,264.7L654.3,265.4L654.4,266.2L654.6,267L655.1,267.7L655.7,268.5L656.5,269.2L657.4,269.9L658.5,270.6L659.8,271.2L661.2,271.8ZM660.8,272.6L662.6,273.2L664.6,273.7L666.6,274.2L668.8,274.6L671,275L673.3,275.3L675.7,275.5L678.1,275.7L680.5,275.8L683,275.8L685.5,275.8L687.9,275.7L690.3,275.5L692.7,275.3L695,275L697.2,274.6L699.4,274.2L701.4,273.7L703.4,273.2L705.2,272.6L706.8,272L708.4,271.4L709.7,270.7L710.9,269.9L711.9,269.2L712.8,268.4L713.5,267.5L713.9,266.7L714.2,265.9L714.3,265L714.2,264.2L713.9,263.3L713.5,262.5L712.8,261.7L711.9,260.9L710.9,260.1L709.7,259.4L708.4,258.7L706.8,258L705.2,257.4L703.4,256.8L701.4,256.3L699.4,255.8L697.2,255.4L695,255.1L692.7,254.8L690.3,254.6L687.9,254.4L685.5,254.3L683,254.3L680.5,254.3L678.1,254.4L675.7,254.6L673.3,254.8L671,255.1L668.8,255.4L666.6,255.8L664.6,256.3L662.6,256.8L660.8,257.4L659.2,258L657.6,258.7L656.3,259.4L655.1,260.1L654.1,260.9L653.2,261.7L652.5,262.5L652.1,263.3L651.8,264.2L651.7,265L651.8,265.9L652.1,266.7L652.5,267.5L653.2,268.4L654.1,269.2L655.1,269.9L656.3,270.7L657.6,271.4L659.2,272Z" fill="#87ff78" fill-rule="evenodd"/><path d="M661.6,272.6L663.3,273.1L665.2,273.6L667.2,274.1L669.2,274.5L671.4,274.8L673.6,275.1L675.9,275.3L678.3,275.5L680.6,275.6L683,275.6L685.4,275.6L687.7,275.5L690.1,275.3L692.4,275.1L694.6,274.8L696.8,274.5L698.8,274.1L700.8,273.6L702.7,273.1L704.4,272.6L706.1,272L707.5,271.3L708.9,270.6L710,269.9L711,269.2L711.8,268.4L712.5,267.6L713,266.8L713.2,266L713.3,265.2L713.2,264.4L713,263.6L712.5,262.7L711.8,262L711,261.2L710,260.5L708.9,259.7L707.5,259.1L706.1,258.4L704.4,257.8L702.7,257.3L700.8,256.7L698.8,256.3L696.8,255.9L694.6,255.6L692.4,255.3L690.1,255L687.7,254.9L685.4,254.8L683,254.8L680.6,254.8L678.3,254.9L675.9,255L673.6,255.3L671.4,255.6L669.2,255.9L667.2,256.3L665.2,256.7L663.3,257.3L661.6,257.8L659.9,258.4L658.5,259.1L657.1,259.7L656,260.5L655,261.2L654.2,262L653.5,262.7L653,263.6L652.8,264.4L652.7,265.2L652.8,266L653,266.8L653.5,267.6L654.2,268.4L655,269.2L656,269.9L657.1,270.6L658.5,271.3L659.9,272ZM659.6,272.8L661.5,273.4L663.6,274L665.7,274.5L668,274.9L670.4,275.3L672.8,275.6L675.3,275.8L677.8,276L680.4,276.1L683,276.1L685.6,276.1L688.2,276L690.7,275.8L693.2,275.6L695.6,275.3L698,274.9L700.3,274.5L702.4,274L704.5,273.4L706.4,272.8L708.1,272.2L709.7,271.4L711.2,270.7L712.4,269.9L713.5,269.1L714.4,268.3L715.1,267.4L715.6,266.6L715.9,265.7L716,264.8L715.9,263.9L715.6,263L715.1,262.1L714.4,261.3L713.5,260.4L712.4,259.6L711.2,258.8L709.7,258.1L708.1,257.4L706.4,256.7L704.5,256.1L702.4,255.6L700.3,255.1L698,254.7L695.6,254.3L693.2,254L690.7,253.7L688.2,253.6L685.6,253.5L683,253.4L680.4,253.5L677.8,253.6L675.3,253.7L672.8,254L670.4,254.3L668,254.7L665.7,255.1L663.6,255.6L661.5,256.1L659.6,256.7L657.9,257.4L656.3,258.1L654.8,258.8L653.6,259.6L652.5,260.4L651.6,261.3L650.9,262.1L650.4,263L650.1,263.9L650,264.8L650.1,265.7L650.4,266.6L650.9,267.4L651.6,268.3L652.5,269.1L653.6,269.9L654.8,270.7L656.3,271.4L657.9,272.2Z" fill="#92ff6d" fill-rule="evenodd"/><path d="M660.4,272.7L662.2,273.3L664.2,273.8L666.3,274.3L668.5,274.7L670.7,275.1L673.1,275.4L675.5,275.6L678,275.8L680.5,275.9L683,275.9L685.5,275.9L688,275.8L690.5,275.6L692.9,275.4L695.3,275.1L697.5,274.7L699.7,274.3L701.8,273.8L703.8,273.3L705.6,272.7L707.3,272.1L708.9,271.4L710.3,270.7L711.5,269.9L712.6,269.1L713.4,268.3L714.1,267.5L714.6,266.7L714.9,265.8L715,264.9L714.9,264.1L714.6,263.2L714.1,262.4L713.4,261.5L712.6,260.7L711.5,259.9L710.3,259.2L708.9,258.5L707.3,257.8L705.6,257.2L703.8,256.6L701.8,256L699.7,255.5L697.5,255.1L695.3,254.8L692.9,254.5L690.5,254.2L688,254.1L685.5,254L683,253.9L680.5,254L678,254.1L675.5,254.2L673.1,254.5L670.7,254.8L668.5,255.1L666.3,255.5L664.2,256L662.2,256.6L660.4,257.2L658.7,257.8L657.1,258.5L655.7,259.2L654.5,259.9L653.4,260.7L652.6,261.5L651.9,262.4L651.4,263.2L651.1,264.1L651,264.9L651.1,265.8L651.4,266.7L651.9,267.5L652.6,268.3L653.4,269.1L654.5,269.9L655.7,270.7L657.1,271.4L658.7,272.1ZM658.4,273L660.4,273.6L662.5,274.2L664.8,274.7L667.2,275.2L669.7,275.6L672.2,275.9L674.9,276.1L677.6,276.3L680.3,276.4L683,276.5L685.7,276.4L688.4,276.3L691.1,276.1L693.8,275.9L696.3,275.6L698.8,275.2L701.2,274.7L703.5,274.2L705.6,273.6L707.6,273L709.5,272.3L711.2,271.5L712.7,270.8L714,269.9L715.2,269.1L716.1,268.2L716.9,267.3L717.4,266.4L717.7,265.5L717.8,264.5L717.7,263.6L717.4,262.6L716.9,261.7L716.1,260.8L715.2,259.9L714,259.1L712.7,258.3L711.2,257.5L709.5,256.7L707.6,256.1L705.6,255.4L703.5,254.8L701.2,254.3L698.8,253.9L696.3,253.5L693.8,253.1L691.1,252.9L688.4,252.7L685.7,252.6L683,252.5L680.3,252.6L677.6,252.7L674.9,252.9L672.2,253.1L669.7,253.5L667.2,253.9L664.8,254.3L662.5,254.8L660.4,255.4L658.4,256.1L656.5,256.7L654.8,257.5L653.3,258.3L652,259.1L650.8,259.9L649.9,260.8L649.1,261.7L648.6,262.6L648.3,263.6L648.2,264.5L648.3,265.5L648.6,266.4L649.1,267.3L649.9,268.2L650.8,269.1L652,269.9L653.3,270.8L654.8,271.5L656.5,272.3Z" fill="#9dff62" fill-rule="evenodd"/><path d="M659.1,272.9L661.1,273.5L663.2,274.1L665.4,274.6L667.7,275L670.1,275.4L672.6,275.7L675.1,275.9L677.7,276.1L680.4,276.2L683,276.3L685.6,276.2L688.3,276.1L690.9,275.9L693.4,275.7L695.9,275.4L698.3,275L700.6,274.6L702.8,274.1L704.9,273.5L706.9,272.9L708.7,272.2L710.3,271.5L711.8,270.7L713.1,269.9L714.2,269.1L715.1,268.3L715.8,267.4L716.3,266.5L716.6,265.6L716.7,264.7L716.6,263.8L716.3,262.9L715.8,262L715.1,261.1L714.2,260.2L713.1,259.4L711.8,258.6L710.3,257.9L708.7,257.1L706.9,256.5L704.9,255.9L702.8,255.3L700.6,254.8L698.3,254.3L695.9,254L693.4,253.6L690.9,253.4L688.3,253.2L685.6,253.1L683,253.1L680.4,253.1L677.7,253.2L675.1,253.4L672.6,253.6L670.1,254L667.7,254.3L665.4,254.8L663.2,255.3L661.1,255.9L659.1,256.5L657.3,257.1L655.7,257.9L654.2,258.6L652.9,259.4L651.8,260.2L650.9,261.1L650.2,262L649.7,262.9L649.4,263.8L649.3,264.7L649.4,265.6L649.7,266.5L650.2,267.4L650.9,268.3L651.8,269.1L652.9,269.9L654.2,270.7L655.7,271.5L657.3,272.2ZM657.1,273.2L659.2,273.8L661.5,274.4L663.9,275L666.4,275.5L669,275.9L671.7,276.2L674.4,276.5L677.3,276.7L680.1,276.8L683,276.8L685.9,276.8L688.7,276.7L691.6,276.5L694.3,276.2L697,275.9L699.6,275.5L702.1,275L704.5,274.4L706.8,273.8L708.9,273.2L710.9,272.4L712.6,271.6L714.2,270.8L715.7,270L716.9,269.1L717.9,268.1L718.6,267.2L719.2,266.2L719.5,265.2L719.6,264.2L719.5,263.3L719.2,262.3L718.6,261.3L717.9,260.4L716.9,259.4L715.7,258.5L714.2,257.7L712.6,256.8L710.9,256.1L708.9,255.3L706.8,254.7L704.5,254.1L702.1,253.5L699.6,253L697,252.6L694.3,252.3L691.6,252L688.7,251.8L685.9,251.7L683,251.7L680.1,251.7L677.3,251.8L674.4,252L671.7,252.3L669,252.6L666.4,253L663.9,253.5L661.5,254.1L659.2,254.7L657.1,255.3L655.1,256.1L653.4,256.8L651.8,257.7L650.3,258.5L649.1,259.4L648.1,260.4L647.4,261.3L646.8,262.3L646.5,263.3L646.4,264.2L646.5,265.2L646.8,266.2L647.4,267.2L648.1,268.1L649.1,269.1L650.3,270L651.8,270.8L653.4,271.6L655.1,272.4Z" fill="#a8ff57" fill-rule="evenodd"/><path d="M657.9,273L659.9,273.7L662.1,274.3L664.4,274.8L666.9,275.3L669.4,275.7L672,276L674.7,276.3L677.4,276.5L680.2,276.6L683,276.6L685.8,276.6L688.6,276.5L691.3,276.3L694,276L696.6,275.7L699.1,275.3L701.6,274.8L703.9,274.3L706.1,273.7L708.1,273L710,272.3L711.8,271.6L713.3,270.8L714.7,270L715.8,269.1L716.8,268.2L717.6,267.3L718.1,266.3L718.4,265.4L718.5,264.4L718.4,263.4L718.1,262.5L717.6,261.6L716.8,260.6L715.8,259.7L714.7,258.9L713.3,258L711.8,257.2L710,256.5L708.1,255.8L706.1,255.1L703.9,254.5L701.6,254L699.1,253.5L696.6,253.1L694,252.8L691.3,252.5L688.6,252.3L685.8,252.2L683,252.2L680.2,252.2L677.4,252.3L674.7,252.5L672,252.8L669.4,253.1L666.9,253.5L664.4,254L662.1,254.5L659.9,255.1L657.9,255.8L656,256.5L654.2,257.2L652.7,258L651.3,258.9L650.2,259.7L649.2,260.6L648.4,261.6L647.9,262.5L647.6,263.4L647.5,264.4L647.6,265.4L647.9,266.3L648.4,267.3L649.2,268.2L650.2,269.1L651.3,270L652.7,270.8L654.2,271.6L656,272.3ZM655.7,273.3L658,274L660.3,274.7L662.9,275.3L665.5,275.8L668.2,276.2L671.1,276.6L674,276.9L677,277.1L680,277.2L683,277.2L686,277.2L689,277.1L692,276.9L694.9,276.6L697.8,276.2L700.5,275.8L703.1,275.3L705.7,274.7L708,274L710.3,273.3L712.3,272.6L714.2,271.8L715.9,270.9L717.3,270L718.6,269L719.7,268.1L720.5,267.1L721.1,266L721.4,265L721.5,264L721.4,262.9L721.1,261.9L720.5,260.9L719.7,259.9L718.6,258.9L717.3,258L715.9,257.1L714.2,256.2L712.3,255.4L710.3,254.6L708,253.9L705.7,253.3L703.1,252.7L700.5,252.2L697.8,251.7L694.9,251.4L692,251.1L689,250.9L686,250.8L683,250.7L680,250.8L677,250.9L674,251.1L671.1,251.4L668.2,251.7L665.5,252.2L662.9,252.7L660.3,253.3L658,253.9L655.7,254.6L653.7,255.4L651.8,256.2L650.1,257.1L648.7,258L647.4,258.9L646.3,259.9L645.5,260.9L644.9,261.9L644.6,262.9L644.5,264L644.6,265L644.9,266L645.5,267.1L646.3,268.1L647.4,269L648.7,270L650.1,270.9L651.8,271.8L653.7,272.6Z" fill="#b3ff4c" fill-rule="evenodd"/><path d="M656.6,273.2L658.7,273.9L661,274.5L663.5,275.1L666,275.6L668.7,276L671.4,276.4L674.3,276.6L677.1,276.8L680.1,277L683,277L685.9,277L688.9,276.8L691.7,276.6L694.6,276.4L697.3,276L700,275.6L702.5,275.1L705,274.5L707.3,273.9L709.4,273.2L711.4,272.5L713.3,271.7L714.9,270.9L716.3,270L717.6,269.1L718.6,268.1L719.4,267.1L719.9,266.1L720.3,265.1L720.4,264.1L720.3,263.1L719.9,262.1L719.4,261.1L718.6,260.2L717.6,259.2L716.3,258.3L714.9,257.4L713.3,256.6L711.4,255.8L709.4,255.1L707.3,254.4L705,253.7L702.5,253.2L700,252.7L697.3,252.3L694.6,251.9L691.7,251.6L688.9,251.4L685.9,251.3L683,251.3L680.1,251.3L677.1,251.4L674.3,251.6L671.4,251.9L668.7,252.3L666,252.7L663.5,253.2L661,253.7L658.7,254.4L656.6,255.1L654.6,255.8L652.7,256.6L651.1,257.4L649.7,258.3L648.4,259.2L647.4,260.2L646.6,261.1L646.1,262.1L645.7,263.1L645.6,264.1L645.7,265.1L646.1,266.1L646.6,267.1L647.4,268.1L648.4,269.1L649.7,270L651.1,270.9L652.7,271.7L654.6,272.5ZM654.4,273.5L656.7,274.3L659.2,275L661.8,275.6L664.6,276.1L667.5,276.6L670.5,276.9L673.5,277.2L676.7,277.5L679.8,277.6L683,277.6L686.2,277.6L689.3,277.5L692.5,277.2L695.5,276.9L698.5,276.6L701.4,276.1L704.2,275.6L706.8,275L709.3,274.3L711.6,273.5L713.8,272.7L715.8,271.9L717.5,271L719.1,270L720.4,269L721.5,268L722.4,267L723,265.9L723.4,264.8L723.5,263.7L723.4,262.6L723,261.5L722.4,260.5L721.5,259.4L720.4,258.4L719.1,257.4L717.5,256.4L715.8,255.5L713.8,254.7L711.6,253.9L709.3,253.1L706.8,252.4L704.2,251.8L701.4,251.3L698.5,250.8L695.5,250.5L692.5,250.2L689.3,250L686.2,249.8L683,249.8L679.8,249.8L676.7,250L673.5,250.2L670.5,250.5L667.5,250.8L664.6,251.3L661.8,251.8L659.2,252.4L656.7,253.1L654.4,253.9L652.2,254.7L650.2,255.5L648.5,256.4L646.9,257.4L645.6,258.4L644.5,259.4L643.6,260.5L643,261.5L642.6,262.6L642.5,263.7L642.6,264.8L643,265.9L643.6,267L644.5,268L645.6,269L646.9,270L648.5,271L650.2,271.9L652.2,272.7Z" fill="#bfff40" fill-rule="evenodd"/><path d="M655.2,273.4L657.5,274.1L659.9,274.8L662.5,275.4L665.1,275.9L668,276.4L670.8,276.7L673.8,277L676.8,277.2L679.9,277.3L683,277.4L686.1,277.3L689.2,277.2L692.2,277L695.2,276.7L698,276.4L700.9,275.9L703.5,275.4L706.1,274.8L708.5,274.1L710.8,273.4L712.9,272.6L714.8,271.8L716.5,270.9L718,270L719.3,269L720.4,268L721.2,267L721.8,266L722.2,264.9L722.3,263.9L722.2,262.8L721.8,261.8L721.2,260.7L720.4,259.7L719.3,258.7L718,257.7L716.5,256.8L714.8,255.9L712.9,255.1L710.8,254.3L708.5,253.6L706.1,252.9L703.5,252.3L700.9,251.8L698,251.4L695.2,251L692.2,250.7L689.2,250.5L686.1,250.4L683,250.4L679.9,250.4L676.8,250.5L673.8,250.7L670.8,251L668,251.4L665.1,251.8L662.5,252.3L659.9,252.9L657.5,253.6L655.2,254.3L653.1,255.1L651.2,255.9L649.5,256.8L648,257.7L646.7,258.7L645.6,259.7L644.8,260.7L644.2,261.8L643.8,262.8L643.7,263.9L643.8,264.9L644.2,266L644.8,267L645.6,268L646.7,269L648,270L649.5,270.9L651.2,271.8L653.1,272.6ZM652.9,273.8L655.4,274.6L658,275.3L660.8,275.9L663.7,276.5L666.7,276.9L669.9,277.3L673.1,277.7L676.3,277.9L679.7,278L683,278.1L686.3,278L689.7,277.9L692.9,277.7L696.1,277.3L699.3,276.9L702.3,276.5L705.2,275.9L708,275.3L710.6,274.6L713.1,273.8L715.4,272.9L717.4,272L719.3,271.1L720.9,270.1L722.3,269L723.5,268L724.4,266.8L725,265.7L725.4,264.6L725.5,263.4L725.4,262.3L725,261.1L724.4,260L723.5,258.9L722.3,257.8L720.9,256.8L719.3,255.8L717.4,254.8L715.4,253.9L713.1,253.1L710.6,252.3L708,251.6L705.2,251L702.3,250.4L699.3,249.9L696.1,249.5L692.9,249.2L689.7,249L686.3,248.9L683,248.8L679.7,248.9L676.3,249L673.1,249.2L669.9,249.5L666.7,249.9L663.7,250.4L660.8,251L658,251.6L655.4,252.3L652.9,253.1L650.6,253.9L648.6,254.8L646.7,255.8L645.1,256.8L643.7,257.8L642.5,258.9L641.6,260L641,261.1L640.6,262.3L640.5,263.4L640.6,264.6L641,265.7L641.6,266.8L642.5,268L643.7,269L645.1,270.1L646.7,271.1L648.6,272L650.6,272.9Z" fill="#cbff34" fill-rule="evenodd"/><path d="M653.8,273.6L656.2,274.4L658.7,275.1L661.4,275.7L664.2,276.2L667.2,276.7L670.2,277.1L673.4,277.4L676.5,277.6L679.8,277.8L683,277.8L686.2,277.8L689.5,277.6L692.6,277.4L695.8,277.1L698.8,276.7L701.8,276.2L704.6,275.7L707.3,275.1L709.8,274.4L712.2,273.6L714.4,272.8L716.4,271.9L718.2,271L719.8,270L721.2,269L722.3,268L723.2,266.9L723.8,265.8L724.2,264.7L724.3,263.6L724.2,262.5L723.8,261.4L723.2,260.3L722.3,259.2L721.2,258.2L719.8,257.2L718.2,256.2L716.4,255.3L714.4,254.4L712.2,253.6L709.8,252.8L707.3,252.1L704.6,251.5L701.8,250.9L698.8,250.5L695.8,250.1L692.6,249.8L689.5,249.6L686.2,249.4L683,249.4L679.8,249.4L676.5,249.6L673.4,249.8L670.2,250.1L667.2,250.5L664.2,250.9L661.4,251.5L658.7,252.1L656.2,252.8L653.8,253.6L651.6,254.4L649.6,255.3L647.8,256.2L646.2,257.2L644.8,258.2L643.7,259.2L642.8,260.3L642.2,261.4L641.8,262.5L641.7,263.6L641.8,264.7L642.2,265.8L642.8,266.9L643.7,268L644.8,269L646.2,270L647.8,271L649.6,271.9L651.6,272.8ZM651.4,274L654,274.8L656.7,275.6L659.7,276.2L662.7,276.8L665.9,277.3L669.2,277.8L672.6,278.1L676,278.3L679.5,278.5L683,278.5L686.5,278.5L690,278.3L693.4,278.1L696.8,277.8L700.1,277.3L703.3,276.8L706.3,276.2L709.3,275.6L712,274.8L714.6,274L717,273.1L719.1,272.2L721.1,271.2L722.8,270.1L724.3,269L725.5,267.9L726.4,266.7L727.1,265.6L727.5,264.4L727.7,263.2L727.5,262L727.1,260.8L726.4,259.6L725.5,258.4L724.3,257.3L722.8,256.2L721.1,255.1L719.1,254.1L717,253.2L714.6,252.3L712,251.5L709.3,250.7L706.3,250.1L703.3,249.5L700.1,249L696.8,248.6L693.4,248.2L690,248L686.5,247.9L683,247.8L679.5,247.9L676,248L672.6,248.2L669.2,248.6L665.9,249L662.7,249.5L659.7,250.1L656.7,250.7L654,251.5L651.4,252.3L649,253.2L646.9,254.1L644.9,255.1L643.2,256.2L641.7,257.3L640.5,258.4L639.6,259.6L638.9,260.8L638.5,262L638.3,263.2L638.5,264.4L638.9,265.6L639.6,266.7L640.5,267.9L641.7,269L643.2,270.1L644.9,271.2L646.9,272.2L649,273.1Z" fill="#d8ff27" fill-rule="evenodd"/><path d="M652.3,273.9L654.8,274.7L657.5,275.4L660.3,276L663.3,276.6L666.4,277.1L669.6,277.5L672.9,277.8L676.2,278.1L679.6,278.2L683,278.2L686.4,278.2L689.8,278.1L693.1,277.8L696.4,277.5L699.6,277.1L702.7,276.6L705.7,276L708.5,275.4L711.2,274.7L713.7,273.9L716,273L718.1,272.1L720,271.1L721.7,270.1L723.1,269L724.3,267.9L725.2,266.8L725.8,265.7L726.3,264.5L726.4,263.3L726.3,262.2L725.8,261L725.2,259.8L724.3,258.7L723.1,257.6L721.7,256.6L720,255.5L718.1,254.6L716,253.6L713.7,252.8L711.2,252L708.5,251.3L705.7,250.6L702.7,250L699.6,249.6L696.4,249.1L693.1,248.8L689.8,248.6L686.4,248.5L683,248.4L679.6,248.5L676.2,248.6L672.9,248.8L669.6,249.1L666.4,249.6L663.3,250L660.3,250.6L657.5,251.3L654.8,252L652.3,252.8L650,253.6L647.9,254.6L646,255.5L644.3,256.6L642.9,257.6L641.7,258.7L640.8,259.8L640.2,261L639.7,262.2L639.6,263.3L639.7,264.5L640.2,265.7L640.8,266.8L641.7,267.9L642.9,269L644.3,270.1L646,271.1L647.9,272.1L650,273ZM649.9,274.3L652.6,275.1L655.5,275.9L658.5,276.6L661.7,277.2L665.1,277.8L668.5,278.2L672.1,278.6L675.7,278.8L679.3,278.9L683,279L686.7,278.9L690.3,278.8L693.9,278.6L697.5,278.2L700.9,277.8L704.3,277.2L707.5,276.6L710.5,275.9L713.4,275.1L716.1,274.3L718.6,273.4L720.9,272.4L723,271.3L724.7,270.2L726.3,269.1L727.6,267.9L728.6,266.7L729.3,265.4L729.7,264.2L729.9,262.9L729.7,261.6L729.3,260.4L728.6,259.1L727.6,257.9L726.3,256.7L724.7,255.6L723,254.5L720.9,253.4L718.6,252.4L716.1,251.5L713.4,250.6L710.5,249.9L707.5,249.2L704.3,248.5L700.9,248L697.5,247.6L693.9,247.2L690.3,247L686.7,246.8L683,246.8L679.3,246.8L675.7,247L672.1,247.2L668.5,247.6L665.1,248L661.7,248.5L658.5,249.2L655.5,249.9L652.6,250.6L649.9,251.5L647.4,252.4L645.1,253.4L643,254.5L641.3,255.6L639.7,256.7L638.4,257.9L637.4,259.1L636.7,260.4L636.3,261.6L636.1,262.9L636.3,264.2L636.7,265.4L637.4,266.7L638.4,267.9L639.7,269.1L641.3,270.2L643,271.3L645.1,272.4L647.4,273.4Z" fill="#e4ff1b" fill-rule="evenodd"/><path d="M650.8,274.1L653.4,275L656.2,275.7L659.2,276.4L662.3,277L665.6,277.5L668.9,277.9L672.4,278.3L675.9,278.5L679.4,278.7L683,278.7L686.6,278.7L690.1,278.5L693.6,278.3L697.1,277.9L700.4,277.5L703.7,277L706.8,276.4L709.8,275.7L712.6,275L715.2,274.1L717.6,273.2L719.8,272.3L721.8,271.2L723.6,270.2L725.1,269L726.3,267.9L727.3,266.7L728,265.5L728.4,264.3L728.5,263.1L728.4,261.8L728,260.6L727.3,259.4L726.3,258.2L725.1,257.1L723.6,256L721.8,254.9L719.8,253.9L717.6,252.9L715.2,252L712.6,251.2L709.8,250.4L706.8,249.7L703.7,249.1L700.4,248.6L697.1,248.2L693.6,247.8L690.1,247.6L686.6,247.5L683,247.4L679.4,247.5L675.9,247.6L672.4,247.8L668.9,248.2L665.6,248.6L662.3,249.1L659.2,249.7L656.2,250.4L653.4,251.2L650.8,252L648.4,252.9L646.2,253.9L644.2,254.9L642.4,256L640.9,257.1L639.7,258.2L638.7,259.4L638,260.6L637.6,261.8L637.5,263.1L637.6,264.3L638,265.5L638.7,266.7L639.7,267.9L640.9,269L642.4,270.2L644.2,271.2L646.2,272.3L648.4,273.2ZM648.3,274.6L651.1,275.5L654.1,276.3L657.3,277L660.7,277.7L664.2,278.2L667.8,278.7L671.5,279.1L675.3,279.3L679.1,279.5L683,279.5L686.9,279.5L690.7,279.3L694.5,279.1L698.2,278.7L701.8,278.2L705.3,277.7L708.7,277L711.9,276.3L714.9,275.5L717.7,274.6L720.4,273.6L722.7,272.6L724.9,271.5L726.8,270.3L728.4,269.1L729.7,267.9L730.8,266.6L731.5,265.3L732,264L732.1,262.6L732,261.3L731.5,260L730.8,258.7L729.7,257.4L728.4,256.2L726.8,255L724.9,253.8L722.7,252.7L720.4,251.7L717.7,250.7L714.9,249.8L711.9,249L708.7,248.2L705.3,247.6L701.8,247L698.2,246.6L694.5,246.2L690.7,246L686.9,245.8L683,245.7L679.1,245.8L675.3,246L671.5,246.2L667.8,246.6L664.2,247L660.7,247.6L657.3,248.2L654.1,249L651.1,249.8L648.3,250.7L645.6,251.7L643.3,252.7L641.1,253.8L639.2,255L637.6,256.2L636.3,257.4L635.2,258.7L634.5,260L634,261.3L633.9,262.6L634,264L634.5,265.3L635.2,266.6L636.3,267.9L637.6,269.1L639.2,270.3L641.1,271.5L643.3,272.6L645.6,273.6Z" fill="#f2ff0d" fill-rule="evenodd"/><path d="M649.2,274.4L652,275.3L654.9,276.1L658,276.8L661.3,277.4L664.7,278L668.2,278.4L671.9,278.7L675.5,279L679.3,279.1L683,279.2L686.7,279.1L690.5,279L694.1,278.7L697.8,278.4L701.3,278L704.7,277.4L708,276.8L711.1,276.1L714,275.3L716.8,274.4L719.3,273.4L721.6,272.4L723.7,271.4L725.6,270.2L727.1,269.1L728.4,267.9L729.4,266.6L730.2,265.4L730.6,264.1L730.8,262.8L730.6,261.5L730.2,260.2L729.4,259L728.4,257.7L727.1,256.5L725.6,255.3L723.7,254.2L721.6,253.1L719.3,252.1L716.8,251.2L714,250.3L711.1,249.5L708,248.8L704.7,248.2L701.3,247.6L697.8,247.2L694.1,246.8L690.5,246.6L686.7,246.4L683,246.4L679.3,246.4L675.5,246.6L671.9,246.8L668.2,247.2L664.7,247.6L661.3,248.2L658,248.8L654.9,249.5L652,250.3L649.2,251.2L646.7,252.1L644.4,253.1L642.3,254.2L640.4,255.3L638.9,256.5L637.6,257.7L636.6,259L635.8,260.2L635.4,261.5L635.2,262.8L635.4,264.1L635.8,265.4L636.6,266.6L637.6,267.9L638.9,269.1L640.4,270.2L642.3,271.4L644.4,272.4L646.7,273.4ZM646.6,274.9L649.6,275.8L652.7,276.7L656.1,277.5L659.6,278.2L663.3,278.7L667.1,279.2L671,279.6L674.9,279.9L679,280L683,280.1L687,280L691.1,279.9L695,279.6L698.9,279.2L702.7,278.7L706.4,278.2L709.9,277.5L713.3,276.7L716.4,275.8L719.4,274.9L722.2,273.9L724.7,272.8L726.9,271.6L728.9,270.4L730.6,269.2L732,267.9L733.1,266.5L733.9,265.2L734.3,263.8L734.5,262.4L734.3,261L733.9,259.6L733.1,258.3L732,256.9L730.6,255.6L728.9,254.4L726.9,253.1L724.7,252L722.2,250.9L719.4,249.9L716.4,248.9L713.3,248.1L709.9,247.3L706.4,246.6L702.7,246L698.9,245.6L695,245.2L691.1,244.9L687,244.7L683,244.7L679,244.7L674.9,244.9L671,245.2L667.1,245.6L663.3,246L659.6,246.6L656.1,247.3L652.7,248.1L649.6,248.9L646.6,249.9L643.8,250.9L641.3,252L639.1,253.1L637.1,254.4L635.4,255.6L634,256.9L632.9,258.3L632.1,259.6L631.7,261L631.5,262.4L631.7,263.8L632.1,265.2L632.9,266.5L634,267.9L635.4,269.2L637.1,270.4L639.1,271.6L641.3,272.8L643.8,273.9Z" fill="#fffe00" fill-rule="evenodd"/><path d="M647.6,274.7L650.5,275.6L653.6,276.5L656.8,277.2L660.3,277.9L663.8,278.4L667.5,278.9L671.3,279.3L675.2,279.5L679.1,279.7L683,279.7L686.9,279.7L690.8,279.5L694.7,279.3L698.5,278.9L702.2,278.4L705.7,277.9L709.2,277.2L712.4,276.5L715.5,275.6L718.4,274.7L721.1,273.7L723.5,272.6L725.7,271.5L727.6,270.3L729.3,269.1L730.6,267.8L731.7,266.5L732.4,265.2L732.9,263.9L733.1,262.5L732.9,261.2L732.4,259.8L731.7,258.5L730.6,257.2L729.3,255.9L727.6,254.7L725.7,253.5L723.5,252.4L721.1,251.4L718.4,250.4L715.5,249.4L712.4,248.6L709.2,247.9L705.7,247.2L702.2,246.6L698.5,246.2L694.7,245.8L690.8,245.5L686.9,245.4L683,245.3L679.1,245.4L675.2,245.5L671.3,245.8L667.5,246.2L663.8,246.6L660.3,247.2L656.8,247.9L653.6,248.6L650.5,249.4L647.6,250.4L644.9,251.4L642.5,252.4L640.3,253.5L638.4,254.7L636.7,255.9L635.4,257.2L634.3,258.5L633.6,259.8L633.1,261.2L632.9,262.5L633.1,263.9L633.6,265.2L634.3,266.5L635.4,267.8L636.7,269.1L638.4,270.3L640.3,271.5L642.5,272.6L644.9,273.7ZM644.9,275.3L648,276.3L651.3,277.2L654.8,278L658.5,278.7L662.4,279.3L666.3,279.8L670.4,280.2L674.6,280.5L678.8,280.6L683,280.7L687.2,280.6L691.4,280.5L695.6,280.2L699.7,279.8L703.6,279.3L707.5,278.7L711.2,278L714.7,277.2L718,276.3L721.1,275.3L724,274.2L726.6,273.1L729,271.9L731,270.6L732.8,269.3L734.3,267.9L735.4,266.5L736.2,265.1L736.7,263.6L736.9,262.2L736.7,260.7L736.2,259.3L735.4,257.8L734.3,256.4L732.8,255.1L731,253.8L729,252.5L726.6,251.3L724,250.1L721.1,249.1L718,248.1L714.7,247.2L711.2,246.4L707.5,245.7L703.6,245.1L699.7,244.6L695.6,244.2L691.4,243.9L687.2,243.7L683,243.6L678.8,243.7L674.6,243.9L670.4,244.2L666.3,244.6L662.4,245.1L658.5,245.7L654.8,246.4L651.3,247.2L648,248.1L644.9,249.1L642,250.1L639.4,251.3L637,252.5L635,253.8L633.2,255.1L631.7,256.4L630.6,257.8L629.8,259.3L629.3,260.7L629.1,262.2L629.3,263.6L629.8,265.1L630.6,266.5L631.7,267.9L633.2,269.3L635,270.6L637,271.9L639.4,273.1L642,274.2Z" fill="#ffef00" fill-rule="evenodd"/><path d="M645.9,275L648.9,276L652.2,276.9L655.6,277.7L659.2,278.4L662.9,279L666.8,279.4L670.8,279.8L674.8,280.1L678.9,280.3L683,280.3L687.1,280.3L691.2,280.1L695.2,279.8L699.2,279.4L703.1,279L706.8,278.4L710.4,277.7L713.8,276.9L717.1,276L720.1,275L722.9,274L725.4,272.9L727.7,271.7L729.7,270.5L731.5,269.2L732.9,267.9L734,266.5L734.8,265.1L735.3,263.7L735.4,262.3L735.3,260.9L734.8,259.5L734,258.1L732.9,256.7L731.5,255.4L729.7,254.1L727.7,252.9L725.4,251.7L722.9,250.6L720.1,249.6L717.1,248.6L713.8,247.7L710.4,246.9L706.8,246.2L703.1,245.6L699.2,245.2L695.2,244.8L691.2,244.5L687.1,244.3L683,244.3L678.9,244.3L674.8,244.5L670.8,244.8L666.8,245.2L662.9,245.6L659.2,246.2L655.6,246.9L652.2,247.7L648.9,248.6L645.9,249.6L643.1,250.6L640.6,251.7L638.3,252.9L636.3,254.1L634.5,255.4L633.1,256.7L632,258.1L631.2,259.5L630.7,260.9L630.6,262.3L630.7,263.7L631.2,265.1L632,266.5L633.1,267.9L634.5,269.2L636.3,270.5L638.3,271.7L640.6,272.9L643.1,274ZM643.1,275.7L646.4,276.7L649.8,277.7L653.5,278.5L657.4,279.3L661.4,279.9L665.6,280.4L669.8,280.8L674.2,281.1L678.6,281.3L683,281.4L687.4,281.3L691.8,281.1L696.2,280.8L700.4,280.4L704.6,279.9L708.6,279.3L712.5,278.5L716.2,277.7L719.6,276.7L722.9,275.7L725.9,274.6L728.6,273.4L731.1,272.1L733.3,270.8L735.1,269.4L736.6,268L737.8,266.5L738.7,265L739.2,263.5L739.4,262L739.2,260.5L738.7,259L737.8,257.5L736.6,256L735.1,254.6L733.3,253.2L731.1,251.9L728.6,250.6L725.9,249.4L722.9,248.3L719.6,247.3L716.2,246.3L712.5,245.5L708.6,244.7L704.6,244.1L700.4,243.6L696.2,243.1L691.8,242.8L687.4,242.7L683,242.6L678.6,242.7L674.2,242.8L669.8,243.1L665.6,243.6L661.4,244.1L657.4,244.7L653.5,245.5L649.8,246.3L646.4,247.3L643.1,248.3L640.1,249.4L637.4,250.6L634.9,251.9L632.7,253.2L630.9,254.6L629.4,256L628.2,257.5L627.3,259L626.8,260.5L626.6,262L626.8,263.5L627.3,265L628.2,266.5L629.4,268L630.9,269.4L632.7,270.8L634.9,272.1L637.4,273.4L640.1,274.6Z" fill="#ffe000" fill-rule="evenodd"/><path d="M644.2,275.4L647.3,276.4L650.7,277.4L654.3,278.2L658.1,278.9L662,279.5L666,280L670.2,280.4L674.4,280.7L678.7,280.9L683,281L687.3,280.9L691.6,280.7L695.8,280.4L700,280L704,279.5L707.9,278.9L711.7,278.2L715.3,277.4L718.7,276.4L721.8,275.4L724.7,274.3L727.4,273.2L729.8,272L731.9,270.7L733.7,269.3L735.2,267.9L736.4,266.5L737.2,265L737.7,263.6L737.9,262.1L737.7,260.6L737.2,259.1L736.4,257.7L735.2,256.3L733.7,254.9L731.9,253.5L729.8,252.2L727.4,251L724.7,249.8L721.8,248.8L718.7,247.7L715.3,246.8L711.7,246L707.9,245.3L704,244.7L700,244.2L695.8,243.8L691.6,243.5L687.3,243.3L683,243.2L678.7,243.3L674.4,243.5L670.2,243.8L666,244.2L662,244.7L658.1,245.3L654.3,246L650.7,246.8L647.3,247.7L644.2,248.8L641.3,249.8L638.6,251L636.2,252.2L634.1,253.5L632.3,254.9L630.8,256.3L629.6,257.7L628.8,259.1L628.3,260.6L628.1,262.1L628.3,263.6L628.8,265L629.6,266.5L630.8,267.9L632.3,269.3L634.1,270.7L636.2,272L638.6,273.2L641.3,274.3ZM641.3,276.2L644.7,277.3L648.3,278.3L652.2,279.1L656.2,279.9L660.4,280.6L664.8,281.1L669.2,281.6L673.8,281.9L678.4,282.1L683,282.1L687.6,282.1L692.2,281.9L696.8,281.6L701.2,281.1L705.6,280.6L709.8,279.9L713.8,279.1L717.7,278.3L721.3,277.3L724.7,276.2L727.8,275L730.7,273.8L733.3,272.5L735.5,271.1L737.5,269.6L739.1,268.1L740.3,266.6L741.2,265L741.8,263.5L742,261.9L741.8,260.3L741.2,258.7L740.3,257.1L739.1,255.6L737.5,254.1L735.5,252.7L733.3,251.3L730.7,250L727.8,248.7L724.7,247.5L721.3,246.5L717.7,245.5L713.8,244.6L709.8,243.8L705.6,243.1L701.2,242.6L696.8,242.2L692.2,241.9L687.6,241.7L683,241.6L678.4,241.7L673.8,241.9L669.2,242.2L664.8,242.6L660.4,243.1L656.2,243.8L652.2,244.6L648.3,245.5L644.7,246.5L641.3,247.5L638.2,248.7L635.3,250L632.7,251.3L630.5,252.7L628.5,254.1L626.9,255.6L625.7,257.1L624.8,258.7L624.2,260.3L624,261.9L624.2,263.5L624.8,265L625.7,266.6L626.9,268.1L628.5,269.6L630.5,271.1L632.7,272.5L635.3,273.8L638.2,275Z" fill="#ffd000" fill-rule="evenodd"/><path d="M642.4,275.9L645.7,276.9L649.2,277.9L653,278.8L656.9,279.5L661,280.2L665.3,280.7L669.6,281.1L674,281.4L678.5,281.6L683,281.7L687.5,281.6L692,281.4L696.4,281.1L700.7,280.7L705,280.2L709.1,279.5L713,278.8L716.8,277.9L720.3,276.9L723.6,275.9L726.7,274.8L729.5,273.5L732,272.2L734.2,270.9L736,269.5L737.6,268L738.8,266.5L739.7,265L740.2,263.5L740.4,261.9L740.2,260.4L739.7,258.8L738.8,257.3L737.6,255.8L736,254.4L734.2,253L732,251.6L729.5,250.3L726.7,249.1L723.6,248L720.3,246.9L716.8,246L713,245.1L709.1,244.4L705,243.7L700.7,243.2L696.4,242.7L692,242.4L687.5,242.3L683,242.2L678.5,242.3L674,242.4L669.6,242.7L665.3,243.2L661,243.7L656.9,244.4L653,245.1L649.2,246L645.7,246.9L642.4,248L639.3,249.1L636.5,250.3L634,251.6L631.8,253L630,254.4L628.4,255.8L627.2,257.3L626.3,258.8L625.8,260.4L625.6,261.9L625.8,263.5L626.3,265L627.2,266.5L628.4,268L630,269.5L631.8,270.9L634,272.2L636.5,273.5L639.3,274.8ZM639.5,276.8L643,277.9L646.8,278.9L650.8,279.8L655.1,280.6L659.4,281.3L664,281.9L668.6,282.4L673.4,282.7L678.2,282.9L683,282.9L687.8,282.9L692.6,282.7L697.4,282.4L702,281.9L706.6,281.3L710.9,280.6L715.2,279.8L719.2,278.9L723,277.9L726.5,276.8L729.8,275.5L732.8,274.2L735.5,272.8L737.9,271.4L739.9,269.9L741.5,268.3L742.9,266.7L743.8,265.1L744.4,263.5L744.6,261.8L744.4,260.1L743.8,258.5L742.9,256.9L741.5,255.3L739.9,253.7L737.9,252.2L735.5,250.7L732.8,249.4L729.8,248.1L726.5,246.8L723,245.7L719.2,244.7L715.2,243.8L710.9,242.9L706.6,242.2L702,241.7L697.4,241.2L692.6,240.9L687.8,240.7L683,240.6L678.2,240.7L673.4,240.9L668.6,241.2L664,241.7L659.4,242.2L655.1,242.9L650.8,243.8L646.8,244.7L643,245.7L639.5,246.8L636.2,248.1L633.2,249.4L630.5,250.7L628.1,252.2L626.1,253.7L624.5,255.3L623.1,256.9L622.2,258.5L621.6,260.1L621.4,261.8L621.6,263.5L622.2,265.1L623.1,266.7L624.5,268.3L626.1,269.9L628.1,271.4L630.5,272.8L633.2,274.2L636.2,275.5Z" fill="#ffc000" fill-rule="evenodd"/><path d="M640.6,276.4L644,277.5L647.7,278.5L651.7,279.4L655.8,280.2L660,280.9L664.5,281.4L669,281.9L673.6,282.2L678.3,282.4L683,282.4L687.7,282.4L692.4,282.2L697,281.9L701.5,281.4L706,280.9L710.2,280.2L714.3,279.4L718.3,278.5L722,277.5L725.4,276.4L728.6,275.2L731.5,273.9L734.2,272.6L736.5,271.2L738.4,269.7L740.1,268.2L741.3,266.6L742.3,265.1L742.8,263.4L743,261.8L742.8,260.2L742.3,258.6L741.3,257L740.1,255.5L738.4,253.9L736.5,252.5L734.2,251.1L731.5,249.7L728.6,248.4L725.4,247.3L722,246.2L718.3,245.1L714.3,244.2L710.2,243.5L706,242.8L701.5,242.2L697,241.8L692.4,241.5L687.7,241.3L683,241.2L678.3,241.3L673.6,241.5L669,241.8L664.5,242.2L660,242.8L655.8,243.5L651.7,244.2L647.7,245.1L644,246.2L640.6,247.3L637.4,248.4L634.5,249.7L631.8,251.1L629.5,252.5L627.6,253.9L625.9,255.5L624.7,257L623.7,258.6L623.2,260.2L623,261.8L623.2,263.4L623.7,265.1L624.7,266.6L625.9,268.2L627.6,269.7L629.5,271.2L631.8,272.6L634.5,273.9L637.4,275.2ZM637.6,277.4L641.3,278.6L645.3,279.6L649.5,280.6L653.9,281.4L658.4,282.2L663.2,282.8L668,283.2L673,283.6L678,283.8L683,283.9L688,283.8L693,283.6L698,283.2L702.8,282.8L707.6,282.2L712.1,281.4L716.5,280.6L720.7,279.6L724.7,278.6L728.4,277.4L731.8,276.1L734.9,274.8L737.7,273.3L740.2,271.8L742.3,270.2L744.1,268.6L745.4,266.9L746.4,265.2L747,263.5L747.2,261.8L747,260.1L746.4,258.3L745.4,256.6L744.1,255L742.3,253.3L740.2,251.8L737.7,250.3L734.9,248.8L731.8,247.5L728.4,246.2L724.7,245L720.7,243.9L716.5,243L712.1,242.1L707.6,241.4L702.8,240.8L698,240.3L693,240L688,239.8L683,239.7L678,239.8L673,240L668,240.3L663.2,240.8L658.4,241.4L653.9,242.1L649.5,243L645.3,243.9L641.3,245L637.6,246.2L634.2,247.5L631.1,248.8L628.3,250.3L625.8,251.8L623.7,253.3L621.9,255L620.6,256.6L619.6,258.3L619,260.1L618.8,261.8L619,263.5L619.6,265.2L620.6,266.9L621.9,268.6L623.7,270.2L625.8,271.8L628.3,273.3L631.1,274.8L634.2,276.1Z" fill="#ffb000" fill-rule="evenodd"/><path d="M638.7,277L642.3,278.1L646.2,279.2L650.3,280.1L654.6,281L659,281.7L663.7,282.2L668.4,282.7L673.2,283L678.1,283.2L683,283.3L687.9,283.2L692.8,283L697.6,282.7L702.3,282.2L707,281.7L711.4,281L715.7,280.1L719.8,279.2L723.7,278.1L727.3,277L730.6,275.8L733.7,274.4L736.4,273L738.8,271.6L740.8,270L742.5,268.4L743.9,266.8L744.8,265.1L745.4,263.5L745.6,261.8L745.4,260.1L744.8,258.4L743.9,256.8L742.5,255.1L740.8,253.5L738.8,252L736.4,250.5L733.7,249.1L730.6,247.8L727.3,246.6L723.7,245.4L719.8,244.4L715.7,243.4L711.4,242.6L707,241.9L702.3,241.3L697.6,240.9L692.8,240.5L687.9,240.3L683,240.3L678.1,240.3L673.2,240.5L668.4,240.9L663.7,241.3L659,241.9L654.6,242.6L650.3,243.4L646.2,244.4L642.3,245.4L638.7,246.6L635.4,247.8L632.3,249.1L629.6,250.5L627.2,252L625.2,253.5L623.5,255.1L622.1,256.8L621.2,258.4L620.6,260.1L620.4,261.8L620.6,263.5L621.2,265.1L622.1,266.8L623.5,268.4L625.2,270L627.2,271.6L629.6,273L632.3,274.4L635.4,275.8ZM635.7,278.1L639.6,279.3L643.7,280.5L648.1,281.5L652.6,282.3L657.4,283.1L662.3,283.7L667.4,284.2L672.5,284.6L677.8,284.8L683,284.8L688.2,284.8L693.5,284.6L698.6,284.2L703.7,283.7L708.6,283.1L713.4,282.3L717.9,281.5L722.3,280.5L726.4,279.3L730.3,278.1L733.9,276.8L737.1,275.4L740,273.9L742.6,272.3L744.8,270.7L746.6,269L748,267.2L749.1,265.5L749.7,263.7L749.9,261.9L749.7,260.1L749.1,258.3L748,256.5L746.6,254.8L744.8,253.1L742.6,251.4L740,249.8L737.1,248.3L733.9,246.9L730.3,245.6L726.4,244.4L722.3,243.3L717.9,242.3L713.4,241.4L708.6,240.6L703.7,240L698.6,239.5L693.5,239.2L688.2,238.9L683,238.9L677.8,238.9L672.5,239.2L667.4,239.5L662.3,240L657.4,240.6L652.6,241.4L648.1,242.3L643.7,243.3L639.6,244.4L635.7,245.6L632.1,246.9L628.9,248.3L626,249.8L623.4,251.4L621.2,253.1L619.4,254.8L618,256.5L616.9,258.3L616.3,260.1L616.1,261.9L616.3,263.7L616.9,265.5L618,267.2L619.4,269L621.2,270.7L623.4,272.3L626,273.9L628.9,275.4L632.1,276.8Z" fill="#ffa000" fill-rule="evenodd"/><path d="M636.8,277.7L640.6,278.9L644.6,280L648.9,280.9L653.4,281.8L658,282.5L662.8,283.1L667.8,283.6L672.8,284L677.9,284.2L683,284.2L688.1,284.2L693.2,284L698.2,283.6L703.2,283.1L708,282.5L712.6,281.8L717.1,280.9L721.4,280L725.4,278.9L729.2,277.7L732.6,276.4L735.8,275L738.7,273.5L741.2,272L743.3,270.4L745.1,268.7L746.5,267L747.5,265.3L748.1,263.6L748.3,261.8L748.1,260L747.5,258.3L746.5,256.6L745.1,254.9L743.3,253.2L741.2,251.6L738.7,250.1L735.8,248.6L732.6,247.2L729.2,245.9L725.4,244.7L721.4,243.7L717.1,242.7L712.6,241.8L708,241.1L703.2,240.5L698.2,240L693.2,239.6L688.1,239.4L683,239.4L677.9,239.4L672.8,239.6L667.8,240L662.8,240.5L658,241.1L653.4,241.8L648.9,242.7L644.6,243.7L640.6,244.7L636.8,245.9L633.4,247.2L630.2,248.6L627.3,250.1L624.8,251.6L622.7,253.2L620.9,254.9L619.5,256.6L618.5,258.3L617.9,260L617.7,261.8L617.9,263.6L618.5,265.3L619.5,267L620.9,268.7L622.7,270.4L624.8,272L627.3,273.5L630.2,275L633.4,276.4ZM633.8,278.9L637.8,280.2L642.1,281.4L646.6,282.4L651.4,283.3L656.4,284.1L661.5,284.8L666.8,285.3L672.1,285.6L677.5,285.8L683,285.9L688.5,285.8L693.9,285.6L699.2,285.3L704.5,284.8L709.6,284.1L714.6,283.3L719.4,282.4L723.9,281.4L728.2,280.2L732.2,278.9L735.9,277.5L739.3,276.1L742.3,274.5L745,272.9L747.3,271.2L749.2,269.4L750.7,267.6L751.7,265.7L752.4,263.9L752.6,262L752.4,260.1L751.7,258.3L750.7,256.4L749.2,254.6L747.3,252.9L745,251.1L742.3,249.5L739.3,247.9L735.9,246.5L732.2,245.1L728.2,243.8L723.9,242.7L719.4,241.6L714.6,240.7L709.6,239.9L704.5,239.3L699.2,238.8L693.9,238.4L688.5,238.2L683,238.1L677.5,238.2L672.1,238.4L666.8,238.8L661.5,239.3L656.4,239.9L651.4,240.7L646.6,241.6L642.1,242.7L637.8,243.8L633.8,245.1L630.1,246.5L626.7,247.9L623.7,249.5L621,251.1L618.7,252.9L616.8,254.6L615.3,256.4L614.3,258.3L613.6,260.1L613.4,262L613.6,263.9L614.3,265.7L615.3,267.6L616.8,269.4L618.7,271.2L621,272.9L623.7,274.5L626.7,276.1L630.1,277.5Z" fill="#ff9100" fill-rule="evenodd"/><path d="M634.9,278.4L638.9,279.7L643.1,280.8L647.5,281.8L652.1,282.7L657,283.5L662,284.1L667.1,284.6L672.4,285L677.7,285.2L683,285.3L688.3,285.2L693.6,285L698.9,284.6L704,284.1L709,283.5L713.9,282.7L718.5,281.8L722.9,280.8L727.1,279.7L731.1,278.4L734.7,277.1L738,275.6L741,274.1L743.6,272.5L745.8,270.8L747.6,269.1L749.1,267.4L750.1,265.6L750.8,263.7L751,261.9L750.8,260.1L750.1,258.3L749.1,256.5L747.6,254.7L745.8,253L743.6,251.3L741,249.7L738,248.2L734.7,246.7L731.1,245.4L727.1,244.1L722.9,243L718.5,242L713.9,241.1L709,240.3L704,239.7L698.9,239.2L693.6,238.8L688.3,238.6L683,238.5L677.7,238.6L672.4,238.8L667.1,239.2L662,239.7L657,240.3L652.1,241.1L647.5,242L643.1,243L638.9,244.1L634.9,245.4L631.3,246.7L628,248.2L625,249.7L622.4,251.3L620.2,253L618.4,254.7L616.9,256.5L615.9,258.3L615.2,260.1L615,261.9L615.2,263.7L615.9,265.6L616.9,267.4L618.4,269.1L620.2,270.8L622.4,272.5L625,274.1L628,275.6L631.3,277.1ZM631.9,279.8L636,281.1L640.5,282.4L645.2,283.4L650.2,284.4L655.3,285.2L660.7,285.9L666.1,286.4L671.7,286.8L677.3,287L683,287.1L688.7,287L694.3,286.8L699.9,286.4L705.3,285.9L710.7,285.2L715.8,284.4L720.8,283.4L725.5,282.4L730,281.1L734.1,279.8L738,278.4L741.5,276.9L744.7,275.2L747.4,273.5L749.8,271.8L751.8,269.9L753.3,268L754.4,266.1L755.1,264.2L755.3,262.2L755.1,260.3L754.4,258.4L753.3,256.4L751.8,254.6L749.8,252.7L747.4,251L744.7,249.3L741.5,247.6L738,246.1L734.1,244.7L730,243.3L725.5,242.1L720.8,241.1L715.8,240.1L710.7,239.3L705.3,238.6L699.9,238.1L694.3,237.7L688.7,237.5L683,237.4L677.3,237.5L671.7,237.7L666.1,238.1L660.7,238.6L655.3,239.3L650.2,240.1L645.2,241.1L640.5,242.1L636,243.3L631.9,244.7L628,246.1L624.5,247.6L621.3,249.3L618.6,251L616.2,252.7L614.2,254.6L612.7,256.4L611.6,258.4L610.9,260.3L610.7,262.2L610.9,264.2L611.6,266.1L612.7,268L614.2,269.9L616.2,271.8L618.6,273.5L621.3,275.2L624.5,276.9L628,278.4Z" fill="#ff8300" fill-rule="evenodd"/><path d="M633,279.3L637.1,280.6L641.5,281.7L646.1,282.8L650.9,283.7L656,284.5L661.2,285.2L666.5,285.7L671.9,286.1L677.5,286.3L683,286.4L688.5,286.3L694.1,286.1L699.5,285.7L704.8,285.2L710,284.5L715.1,283.7L719.9,282.8L724.5,281.7L728.9,280.6L733,279.3L736.7,277.9L740.2,276.4L743.3,274.8L746,273.1L748.3,271.4L750.2,269.6L751.7,267.8L752.8,265.9L753.5,264L753.7,262.1L753.5,260.2L752.8,258.3L751.7,256.4L750.2,254.6L748.3,252.8L746,251.1L743.3,249.4L740.2,247.8L736.7,246.3L733,244.9L728.9,243.6L724.5,242.4L719.9,241.4L715.1,240.4L710,239.7L704.8,239L699.5,238.5L694.1,238.1L688.5,237.9L683,237.8L677.5,237.9L671.9,238.1L666.5,238.5L661.2,239L656,239.7L650.9,240.4L646.1,241.4L641.5,242.4L637.1,243.6L633,244.9L629.3,246.3L625.8,247.8L622.7,249.4L620,251.1L617.7,252.8L615.8,254.6L614.3,256.4L613.2,258.3L612.5,260.2L612.3,262.1L612.5,264L613.2,265.9L614.3,267.8L615.8,269.6L617.7,271.4L620,273.1L622.7,274.8L625.8,276.4L629.3,277.9ZM629.9,280.8L634.3,282.2L638.9,283.4L643.8,284.6L648.9,285.6L654.3,286.4L659.8,287.1L665.5,287.7L671.3,288L677.1,288.3L683,288.4L688.9,288.3L694.7,288L700.5,287.7L706.2,287.1L711.7,286.4L717.1,285.6L722.2,284.6L727.1,283.4L731.7,282.2L736.1,280.8L740.1,279.3L743.7,277.7L747,276.1L749.9,274.3L752.3,272.4L754.4,270.5L756,268.6L757.1,266.6L757.8,264.6L758,262.6L757.8,260.6L757.1,258.5L756,256.6L754.4,254.6L752.3,252.7L749.9,250.9L747,249.1L743.7,247.4L740.1,245.8L736.1,244.3L731.7,243L727.1,241.7L722.2,240.6L717.1,239.6L711.7,238.8L706.2,238.1L700.5,237.5L694.7,237.1L688.9,236.9L683,236.8L677.1,236.9L671.3,237.1L665.5,237.5L659.8,238.1L654.3,238.8L648.9,239.6L643.8,240.6L638.9,241.7L634.3,243L629.9,244.3L625.9,245.8L622.3,247.4L619,249.1L616.1,250.9L613.7,252.7L611.6,254.6L610,256.6L608.9,258.5L608.2,260.6L608,262.6L608.2,264.6L608.9,266.6L610,268.6L611.6,270.5L613.7,272.4L616.1,274.3L619,276.1L622.3,277.7L625.9,279.3Z" fill="#ff7500" fill-rule="evenodd"/><path d="M631.1,280.2L635.3,281.5L639.9,282.8L644.6,283.9L649.7,284.8L654.9,285.7L660.3,286.4L665.9,286.9L671.5,287.3L677.2,287.5L683,287.6L688.8,287.5L694.5,287.3L700.1,286.9L705.7,286.4L711.1,285.7L716.3,284.8L721.4,283.9L726.1,282.8L730.7,281.5L734.9,280.2L738.8,278.7L742.4,277.2L745.6,275.5L748.4,273.8L750.8,272L752.8,270.2L754.4,268.3L755.5,266.3L756.2,264.3L756.4,262.4L756.2,260.4L755.5,258.4L754.4,256.5L752.8,254.6L750.8,252.7L748.4,250.9L745.6,249.2L742.4,247.5L738.8,246L734.9,244.5L730.7,243.2L726.1,242L721.4,240.9L716.3,239.9L711.1,239.1L705.7,238.4L700.1,237.8L694.5,237.5L688.8,237.2L683,237.1L677.2,237.2L671.5,237.5L665.9,237.8L660.3,238.4L654.9,239.1L649.7,239.9L644.6,240.9L639.9,242L635.3,243.2L631.1,244.5L627.2,246L623.6,247.5L620.4,249.2L617.6,250.9L615.2,252.7L613.2,254.6L611.6,256.5L610.5,258.4L609.8,260.4L609.6,262.4L609.8,264.3L610.5,266.3L611.6,268.3L613.2,270.2L615.2,272L617.6,273.8L620.4,275.5L623.6,277.2L627.2,278.7ZM628,281.9L632.5,283.3L637.3,284.6L642.4,285.8L647.7,286.8L653.2,287.7L659,288.4L664.9,289L670.8,289.4L676.9,289.7L683,289.7L689.1,289.7L695.2,289.4L701.1,289L707,288.4L712.8,287.7L718.3,286.8L723.6,285.8L728.7,284.6L733.5,283.3L738,281.9L742.1,280.4L745.9,278.7L749.3,277L752.3,275.1L754.8,273.2L756.9,271.3L758.6,269.3L759.8,267.2L760.5,265.1L760.7,263L760.5,260.9L759.8,258.8L758.6,256.8L756.9,254.8L754.8,252.8L752.3,250.9L749.3,249.1L745.9,247.3L742.1,245.7L738,244.1L733.5,242.7L728.7,241.4L723.6,240.2L718.3,239.2L712.8,238.3L707,237.6L701.1,237L695.2,236.6L689.1,236.4L683,236.3L676.9,236.4L670.8,236.6L664.9,237L659,237.6L653.2,238.3L647.7,239.2L642.4,240.2L637.3,241.4L632.5,242.7L628,244.1L623.9,245.7L620.1,247.3L616.7,249.1L613.7,250.9L611.2,252.8L609.1,254.8L607.4,256.8L606.2,258.8L605.5,260.9L605.3,263L605.5,265.1L606.2,267.2L607.4,269.3L609.1,271.3L611.2,273.2L613.7,275.1L616.7,277L620.1,278.7L623.9,280.4Z" fill="#ff6700" fill-rule="evenodd"/><path d="M629.2,281.2L633.6,282.6L638.3,283.9L643.2,285L648.4,286L653.9,286.9L659.5,287.6L665.2,288.2L671.1,288.6L677,288.8L683,288.9L689,288.8L694.9,288.6L700.8,288.2L706.5,287.6L712.1,286.9L717.6,286L722.8,285L727.7,283.9L732.4,282.6L736.8,281.2L740.9,279.7L744.6,278.1L747.9,276.4L750.8,274.6L753.3,272.8L755.4,270.8L757,268.8L758.2,266.8L758.9,264.8L759.1,262.7L758.9,260.7L758.2,258.7L757,256.6L755.4,254.7L753.3,252.7L750.8,250.9L747.9,249.1L744.6,247.4L740.9,245.8L736.8,244.2L732.4,242.9L727.7,241.6L722.8,240.4L717.6,239.4L712.1,238.6L706.5,237.9L700.8,237.3L694.9,236.9L689,236.7L683,236.6L677,236.7L671.1,236.9L665.2,237.3L659.5,237.9L653.9,238.6L648.4,239.4L643.2,240.4L638.3,241.6L633.6,242.9L629.2,244.2L625.1,245.8L621.4,247.4L618.1,249.1L615.2,250.9L612.7,252.7L610.6,254.7L609,256.6L607.8,258.7L607.1,260.7L606.9,262.7L607.1,264.8L607.8,266.8L609,268.8L610.6,270.8L612.7,272.8L615.2,274.6L618.1,276.4L621.4,278.1L625.1,279.7ZM626.1,283.1L630.8,284.6L635.7,285.9L641,287.1L646.5,288.2L652.2,289.1L658.1,289.8L664.2,290.4L670.4,290.9L676.7,291.1L683,291.2L689.3,291.1L695.6,290.9L701.8,290.4L707.9,289.8L713.8,289.1L719.5,288.2L725,287.1L730.3,285.9L735.2,284.6L739.9,283.1L744.2,281.5L748.1,279.8L751.6,278L754.7,276.1L757.3,274.1L759.5,272.1L761.2,270L762.4,267.9L763.2,265.7L763.4,263.6L763.2,261.4L762.4,259.2L761.2,257.1L759.5,255L757.3,253L754.7,251L751.6,249.1L748.1,247.3L744.2,245.6L739.9,244L735.2,242.5L730.3,241.2L725,240L719.5,238.9L713.8,238L707.9,237.3L701.8,236.7L695.6,236.3L689.3,236L683,235.9L676.7,236L670.4,236.3L664.2,236.7L658.1,237.3L652.2,238L646.5,238.9L641,240L635.7,241.2L630.8,242.5L626.1,244L621.8,245.6L617.9,247.3L614.4,249.1L611.3,251L608.7,253L606.5,255L604.8,257.1L603.6,259.2L602.8,261.4L602.6,263.6L602.8,265.7L603.6,267.9L604.8,270L606.5,272.1L608.7,274.1L611.3,276.1L614.4,278L617.9,279.8L621.8,281.5Z" fill="#ff5a00" fill-rule="evenodd"/><path d="M627.3,282.4L631.8,283.8L636.7,285.1L641.8,286.3L647.2,287.4L652.8,288.2L658.6,289L664.6,289.6L670.7,290L676.8,290.2L683,290.3L689.2,290.2L695.3,290L701.4,289.6L707.4,289L713.2,288.2L718.8,287.4L724.2,286.3L729.3,285.1L734.2,283.8L738.7,282.4L742.9,280.8L746.8,279.1L750.2,277.4L753.2,275.5L755.8,273.6L758,271.6L759.6,269.5L760.9,267.5L761.6,265.3L761.8,263.2L761.6,261.1L760.9,259L759.6,256.9L758,254.8L755.8,252.9L753.2,250.9L750.2,249.1L746.8,247.3L742.9,245.6L738.7,244.1L734.2,242.6L729.3,241.3L724.2,240.1L718.8,239.1L713.2,238.2L707.4,237.5L701.4,236.9L695.3,236.5L689.2,236.2L683,236.1L676.8,236.2L670.7,236.5L664.6,236.9L658.6,237.5L652.8,238.2L647.2,239.1L641.8,240.1L636.7,241.3L631.8,242.6L627.3,244.1L623.1,245.6L619.2,247.3L615.8,249.1L612.8,250.9L610.2,252.9L608,254.8L606.4,256.9L605.1,259L604.4,261.1L604.2,263.2L604.4,265.3L605.1,267.5L606.4,269.5L608,271.6L610.2,273.6L612.8,275.5L615.8,277.4L619.2,279.1L623.1,280.8ZM624.2,284.4L629,285.9L634.2,287.3L639.6,288.6L645.3,289.7L651.2,290.6L657.3,291.4L663.6,292L670,292.4L676.5,292.7L683,292.8L689.5,292.7L696,292.4L702.4,292L708.7,291.4L714.8,290.6L720.7,289.7L726.4,288.6L731.8,287.3L737,285.9L741.8,284.4L746.2,282.8L750.2,281L753.9,279.1L757,277.2L759.8,275.1L762,273L763.8,270.9L765.1,268.7L765.8,266.4L766.1,264.2L765.8,262L765.1,259.7L763.8,257.5L762,255.4L759.8,253.3L757,251.2L753.9,249.3L750.2,247.4L746.2,245.7L741.8,244L737,242.5L731.8,241.1L726.4,239.9L720.7,238.8L714.8,237.8L708.7,237L702.4,236.4L696,236L689.5,235.7L683,235.7L676.5,235.7L670,236L663.6,236.4L657.3,237L651.2,237.8L645.3,238.8L639.6,239.9L634.2,241.1L629,242.5L624.2,244L619.8,245.7L615.8,247.4L612.1,249.3L609,251.2L606.2,253.3L604,255.4L602.2,257.5L600.9,259.7L600.2,262L599.9,264.2L600.2,266.4L600.9,268.7L602.2,270.9L604,273L606.2,275.1L609,277.2L612.1,279.1L615.8,281L619.8,282.8Z" fill="#ff4d00" fill-rule="evenodd"/><path d="M625.4,283.6L630.1,285.1L635.1,286.5L640.4,287.7L646,288.8L651.8,289.7L657.8,290.4L664,291L670.2,291.5L676.6,291.7L683,291.8L689.4,291.7L695.8,291.5L702,291L708.2,290.4L714.2,289.7L720,288.8L725.6,287.7L730.9,286.5L735.9,285.1L740.6,283.6L745,282L748.9,280.3L752.5,278.4L755.6,276.5L758.3,274.5L760.5,272.5L762.3,270.3L763.5,268.2L764.3,266L764.5,263.8L764.3,261.6L763.5,259.4L762.3,257.3L760.5,255.1L758.3,253.1L755.6,251.1L752.5,249.2L748.9,247.3L745,245.6L740.6,244L735.9,242.5L730.9,241.1L725.6,239.9L720,238.8L714.2,237.9L708.2,237.2L702,236.6L695.8,236.1L689.4,235.9L683,235.8L676.6,235.9L670.2,236.1L664,236.6L657.8,237.2L651.8,237.9L646,238.8L640.4,239.9L635.1,241.1L630.1,242.5L625.4,244L621,245.6L617.1,247.3L613.5,249.2L610.4,251.1L607.7,253.1L605.5,255.1L603.7,257.3L602.5,259.4L601.7,261.6L601.5,263.8L601.7,266L602.5,268.2L603.7,270.3L605.5,272.5L607.7,274.5L610.4,276.5L613.5,278.4L617.1,280.3L621,282ZM622.4,285.8L627.3,287.4L632.6,288.8L638.2,290.1L644.1,291.2L650.2,292.2L656.5,293L663,293.6L669.6,294.1L676.3,294.3L683,294.4L689.7,294.3L696.4,294.1L703,293.6L709.5,293L715.8,292.2L721.9,291.2L727.8,290.1L733.4,288.8L738.7,287.4L743.6,285.8L748.2,284.1L752.3,282.3L756.1,280.4L759.4,278.3L762.2,276.2L764.5,274.1L766.3,271.8L767.7,269.6L768.4,267.3L768.7,265L768.4,262.7L767.7,260.4L766.3,258.1L764.5,255.9L762.2,253.7L759.4,251.6L756.1,249.6L752.3,247.7L748.2,245.8L743.6,244.1L738.7,242.6L733.4,241.1L727.8,239.9L721.9,238.7L715.8,237.8L709.5,237L703,236.3L696.4,235.9L689.7,235.6L683,235.5L676.3,235.6L669.6,235.9L663,236.3L656.5,237L650.2,237.8L644.1,238.7L638.2,239.9L632.6,241.1L627.3,242.6L622.4,244.1L617.8,245.8L613.7,247.7L609.9,249.6L606.6,251.6L603.8,253.7L601.5,255.9L599.7,258.1L598.3,260.4L597.6,262.7L597.3,265L597.6,267.3L598.3,269.6L599.7,271.8L601.5,274.1L603.8,276.2L606.6,278.3L609.9,280.4L613.7,282.3L617.8,284.1Z" fill="#ff4000" fill-rule="evenodd"/><path d="M623.5,284.9L628.4,286.5L633.5,287.9L639,289.2L644.8,290.3L650.8,291.2L657,292L663.4,292.6L669.8,293.1L676.4,293.3L683,293.4L689.6,293.3L696.2,293.1L702.6,292.6L709,292L715.2,291.2L721.2,290.3L727,289.2L732.5,287.9L737.6,286.5L742.5,284.9L747,283.3L751.1,281.5L754.7,279.6L758,277.6L760.7,275.6L763,273.4L764.8,271.2L766.1,269L766.9,266.8L767.1,264.5L766.9,262.2L766.1,260L764.8,257.7L763,255.6L760.7,253.4L758,251.4L754.7,249.4L751.1,247.5L747,245.7L742.5,244.1L737.6,242.5L732.5,241.1L727,239.8L721.2,238.7L715.2,237.8L709,237L702.6,236.4L696.2,235.9L689.6,235.7L683,235.6L676.4,235.7L669.8,235.9L663.4,236.4L657,237L650.8,237.8L644.8,238.7L639,239.8L633.5,241.1L628.4,242.5L623.5,244.1L619,245.7L614.9,247.5L611.3,249.4L608,251.4L605.3,253.4L603,255.6L601.2,257.7L599.9,260L599.1,262.2L598.9,264.5L599.1,266.8L599.9,269L601.2,271.2L603,273.4L605.3,275.6L608,277.6L611.3,279.6L614.9,281.5L619,283.3ZM620.6,287.3L625.7,288.9L631.1,290.4L636.9,291.7L642.9,292.9L649.2,293.9L655.7,294.7L662.4,295.3L669.2,295.8L676.1,296.1L683,296.2L689.9,296.1L696.8,295.8L703.6,295.3L710.3,294.7L716.8,293.9L723.1,292.9L729.1,291.7L734.9,290.4L740.3,288.9L745.4,287.3L750.1,285.5L754.4,283.7L758.3,281.7L761.6,279.6L764.5,277.5L766.9,275.2L768.8,272.9L770.2,270.6L771,268.2L771.3,265.8L771,263.5L770.2,261.1L768.8,258.8L766.9,256.5L764.5,254.2L761.6,252.1L758.3,250L754.4,248L750.1,246.1L745.4,244.4L740.3,242.8L734.9,241.3L729.1,240L723.1,238.8L716.8,237.8L710.3,237L703.6,236.4L696.8,235.9L689.9,235.6L683,235.5L676.1,235.6L669.2,235.9L662.4,236.4L655.7,237L649.2,237.8L642.9,238.8L636.9,240L631.1,241.3L625.7,242.8L620.6,244.4L615.9,246.1L611.6,248L607.7,250L604.4,252.1L601.5,254.2L599.1,256.5L597.2,258.8L595.8,261.1L595,263.5L594.7,265.8L595,268.2L595.8,270.6L597.2,272.9L599.1,275.2L601.5,277.5L604.4,279.6L607.7,281.7L611.6,283.7L615.9,285.5Z" fill="#ff3300" fill-rule="evenodd"/><path d="M656.2,237L649.8,237.8L643.6,238.7L637.7,239.9L632,241.2L626.7,242.6L621.7,244.2L617,245.9L612.8,247.8L609,249.7L605.7,251.8L602.9,253.9L600.5,256.1L598.7,258.3L597.3,260.6L596.5,263L596.3,265.3L596.5,267.6L597.3,270L598.7,272.3L600.5,274.5L602.9,276.7L605.7,278.8L609,280.9L612.8,282.8L617,284.7L621.7,286.4L626.7,288L632,289.4L637.7,290.7L643.6,291.9L649.8,292.8L656.2,293.7L662.8,294.3L669.4,294.7L676.2,295L683,295.1L689.8,295L696.6,294.7L703.2,294.3L709.8,293.7L716.2,292.8L722.4,291.9L728.3,290.7L734,289.4L739.3,288L744.3,286.4L749,284.7L753.2,282.8L757,280.9L760.3,278.8L763.1,276.7L765.5,274.5L767.3,272.3L768.7,270L769.5,267.6L769.7,265.3L769.5,263L768.7,260.6L767.3,258.3L765.5,256.1L763.1,253.9L760.3,251.8L757,249.7L753.2,247.8L749,245.9L744.3,244.2L739.3,242.6L734,241.2L728.3,239.9L722.4,238.7L716.2,237.8L709.8,237L711,237.2L717.7,238L724.2,239L730.4,240.2L736.3,241.6L741.9,243.1L747.2,244.8L752,246.6L756.4,248.5L760.4,250.5L763.9,252.7L766.9,254.9L769.3,257.2L771.3,259.6L772.6,262L773.5,264.4L773.8,266.8L773.5,269.3L772.6,271.7L771.3,274.1L769.3,276.5L766.9,278.8L763.9,281L760.4,283.1L756.4,285.2L752,287.1L747.2,288.9L741.9,290.6L736.3,292.1L730.4,293.4L724.2,294.6L717.7,295.7L711,296.5L704.2,297.2L697.2,297.6L690.1,297.9L683,298L675.9,297.9L668.8,297.6L661.8,297.2L655,296.5L648.3,295.7L641.8,294.6L635.6,293.4L629.7,292.1L624.1,290.6L618.8,288.9L614,287.1L609.6,285.2L605.6,283.1L602.1,281L599.1,278.8L596.7,276.5L594.7,274.1L593.4,271.7L592.5,269.3L592.2,266.8L592.5,264.4L593.4,262L594.7,259.6L596.7,257.2L599.1,254.9L602.1,252.7L605.6,250.5L609.6,248.5L614,246.6L618.8,244.8L624.1,243.1L629.7,241.6L635.6,240.2L641.8,239L648.3,238L655,237.2Z" fill="#ff2600"/><path d="M630.5,241.4L625,242.9L619.9,244.5L615.1,246.3L610.8,248.2L606.9,250.2L603.5,252.3L600.5,254.5L598.1,256.7L596.2,259.1L594.8,261.4L594,263.8L593.7,266.2L594,268.6L594.8,271L596.2,273.4L598.1,275.7L600.5,278L603.5,280.2L606.9,282.3L610.8,284.3L615.1,286.2L619.9,287.9L625,289.6L630.5,291L636.4,292.4L642.5,293.6L648.8,294.6L655.4,295.4L662.2,296.1L669,296.5L676,296.8L683,296.9L690,296.8L697,296.5L703.8,296.1L710.6,295.4L717.2,294.6L723.5,293.6L729.6,292.4L735.5,291L741,289.6L746.1,287.9L750.9,286.2L755.2,284.3L759.1,282.3L762.5,280.2L765.5,278L767.9,275.7L769.8,273.4L771.2,271L772,268.6L772.3,266.2L772,263.8L771.2,261.4L769.8,259.1L767.9,256.7L765.5,254.5L762.5,252.3L759.1,250.2L755.2,248.2L750.9,246.3L746.1,244.5L741,242.9L735.5,241.4L737.8,242L743.5,243.6L748.9,245.3L753.9,247.1L758.4,249.1L762.5,251.2L766,253.4L769.1,255.7L771.6,258L773.6,260.5L775,262.9L775.9,265.4L776.2,267.9L775.9,270.4L775,272.9L773.6,275.4L771.6,277.8L769.1,280.2L766,282.5L762.5,284.7L758.4,286.8L753.9,288.7L748.9,290.6L743.5,292.3L737.8,293.8L731.7,295.2L725.3,296.5L718.7,297.5L711.8,298.4L704.8,299.1L697.6,299.6L690.3,299.9L683,300L675.7,299.9L668.4,299.6L661.2,299.1L654.2,298.4L647.3,297.5L640.7,296.5L634.3,295.2L628.2,293.8L622.5,292.3L617.1,290.6L612.1,288.7L607.6,286.8L603.5,284.7L600,282.5L596.9,280.2L594.4,277.8L592.4,275.4L591,272.9L590.1,270.4L589.8,267.9L590.1,265.4L591,262.9L592.4,260.5L594.4,258L596.9,255.7L600,253.4L603.5,251.2L607.6,249.1L612.1,247.1L617.1,245.3L622.5,243.6L628.2,242Z" fill="#ff1a00"/><path d="M618.1,245L613.2,246.8L608.8,248.7L604.8,250.8L601.3,252.9L598.2,255.2L595.7,257.5L593.8,259.9L592.4,262.3L591.5,264.8L591.3,267.3L591.5,269.7L592.4,272.2L593.8,274.6L595.7,277L598.2,279.3L601.3,281.6L604.8,283.7L608.8,285.8L613.2,287.7L618.1,289.6L623.4,291.2L629.1,292.8L635.1,294.1L641.4,295.4L647.9,296.4L654.7,297.2L661.6,297.9L668.6,298.4L675.8,298.7L683,298.8L690.2,298.7L697.4,298.4L704.4,297.9L711.3,297.2L718.1,296.4L724.6,295.4L730.9,294.1L736.9,292.8L742.6,291.2L747.9,289.6L752.8,287.7L757.2,285.8L761.2,283.7L764.7,281.6L767.8,279.3L770.3,277L772.2,274.6L773.6,272.2L774.5,269.7L774.7,267.3L774.5,264.8L773.6,262.3L772.2,259.9L770.3,257.5L767.8,255.2L764.7,252.9L761.2,250.8L757.2,248.7L752.8,246.8L747.9,245L750.6,245.9L755.7,247.8L760.3,249.8L764.5,252L768.1,254.2L771.3,256.6L773.9,259L775.9,261.5L777.4,264L778.3,266.6L778.5,269.1L778.3,271.7L777.4,274.3L775.9,276.8L773.9,279.3L771.3,281.7L768.1,284L764.5,286.3L760.3,288.4L755.7,290.5L750.6,292.3L745.1,294.1L739.2,295.7L732.9,297.1L726.4,298.4L719.6,299.5L712.5,300.4L705.3,301.1L697.9,301.6L690.5,301.9L683,302L675.5,301.9L668.1,301.6L660.7,301.1L653.5,300.4L646.4,299.5L639.6,298.4L633.1,297.1L626.8,295.7L620.9,294.1L615.4,292.3L610.3,290.5L605.7,288.4L601.5,286.3L597.9,284L594.7,281.7L592.1,279.3L590.1,276.8L588.6,274.3L587.7,271.7L587.5,269.1L587.7,266.6L588.6,264L590.1,261.5L592.1,259L594.7,256.6L597.9,254.2L601.5,252L605.7,249.8L610.3,247.8L615.4,245.9Z" fill="#ff0d00"/><path d="M611.4,247.4L606.8,249.4L602.7,251.5L599.1,253.7L596,256L593.5,258.4L591.5,260.8L590,263.3L589.1,265.9L588.9,268.4L589.1,270.9L590,273.5L591.5,275.9L593.5,278.4L596,280.8L599.1,283.1L602.7,285.3L606.8,287.4L611.4,289.4L616.4,291.3L621.9,293L627.7,294.6L633.8,296L640.3,297.2L647,298.3L653.9,299.2L661,299.9L668.3,300.4L675.6,300.7L683,300.7L690.4,300.7L697.7,300.4L705,299.9L712.1,299.2L719,298.3L725.7,297.2L732.2,296L738.3,294.6L744.1,293L749.6,291.3L754.6,289.4L759.2,287.4L763.3,285.3L766.9,283.1L770,280.8L772.5,278.4L774.5,275.9L776,273.5L776.9,270.9L777.1,268.4L776.9,265.9L776,263.3L774.5,260.8L772.5,258.4L770,256L766.9,253.7L763.3,251.5L759.2,249.4L754.6,247.4L757.4,248.6L762.1,250.7L766.4,252.9L770.2,255.2L773.4,257.6L776,260L778.1,262.6L779.6,265.2L780.5,267.8L780.8,270.4L780.5,273.1L779.6,275.7L778.1,278.3L776,280.8L773.4,283.3L770.2,285.7L766.4,288L762.1,290.2L757.4,292.3L752.2,294.2L746.5,296L740.5,297.6L734.1,299.1L727.4,300.4L720.4,301.5L713.2,302.4L705.8,303.1L698.3,303.6L690.7,303.9L683,304.1L675.3,303.9L667.7,303.6L660.2,303.1L652.8,302.4L645.6,301.5L638.6,300.4L631.9,299.1L625.5,297.6L619.5,296L613.8,294.2L608.6,292.3L603.9,290.2L599.6,288L595.8,285.7L592.6,283.3L590,280.8L587.9,278.3L586.4,275.7L585.5,273.1L585.2,270.4L585.5,267.8L586.4,265.2L587.9,262.6L590,260L592.6,257.6L595.8,255.2L599.6,252.9L603.9,250.7L608.6,248.6Z" fill="#ff0100"/><path d="M605,250.1L600.7,252.3L597,254.6L593.9,256.9L591.2,259.4L589.2,261.9L587.7,264.5L586.8,267L586.5,269.6L586.8,272.2L587.7,274.8L589.2,277.4L591.2,279.9L593.9,282.3L597,284.7L600.7,287L605,289.1L609.6,291.2L614.8,293.1L620.3,294.8L626.3,296.5L632.6,297.9L639.2,299.2L646.1,300.3L653.2,301.2L660.5,301.9L667.9,302.4L675.4,302.7L683,302.8L690.6,302.7L698.1,302.4L705.5,301.9L712.8,301.2L719.9,300.3L726.8,299.2L733.4,297.9L739.7,296.5L745.7,294.8L751.2,293.1L756.4,291.2L761,289.1L765.3,287L769,284.7L772.1,282.3L774.8,279.9L776.8,277.4L778.3,274.8L779.2,272.2L779.5,269.6L779.2,267L778.3,264.5L776.8,261.9L774.8,259.4L772.1,256.9L769,254.6L765.3,252.3L761,250.1L763.9,251.6L768.3,253.9L772.1,256.2L775.4,258.7L778.1,261.2L780.3,263.8L781.8,266.4L782.7,269.1L783,271.8L782.7,274.5L781.8,277.2L780.3,279.9L778.1,282.5L775.4,285L772.1,287.4L768.3,289.8L763.9,292L759.1,294.2L753.7,296.1L748,298L741.8,299.6L735.3,301.1L728.4,302.5L721.3,303.6L713.9,304.5L706.4,305.3L698.6,305.8L690.8,306.1L683,306.2L675.2,306.1L667.4,305.8L659.6,305.3L652.1,304.5L644.7,303.6L637.6,302.5L630.7,301.1L624.2,299.6L618,298L612.3,296.1L606.9,294.2L602.1,292L597.7,289.8L593.9,287.4L590.6,285L587.9,282.5L585.7,279.9L584.2,277.2L583.3,274.5L583,271.8L583.3,269.1L584.2,266.4L585.7,263.8L587.9,261.2L590.6,258.7L593.9,256.2L597.7,253.9L602.1,251.6Z" fill="#f40000"/><path d="M598.8,253.2L595,255.6L591.8,258L589.1,260.5L587,263.1L585.5,265.7L584.6,268.3L584.3,271L584.6,273.6L585.5,276.3L587,278.9L589.1,281.5L591.8,284L595,286.4L598.8,288.7L603.1,290.9L607.9,293L613.2,295L618.9,296.8L625,298.4L631.4,299.9L638.2,301.2L645.2,302.3L652.5,303.2L660,304L667.6,304.5L675.3,304.8L683,304.9L690.7,304.8L698.4,304.5L706,304L713.5,303.2L720.8,302.3L727.8,301.2L734.6,299.9L741,298.4L747.1,296.8L752.8,295L758.1,293L762.9,290.9L767.2,288.7L771,286.4L774.2,284L776.9,281.5L779,278.9L780.5,276.3L781.4,273.6L781.7,271L781.4,268.3L780.5,265.7L779,263.1L776.9,260.5L774.2,258L771,255.6L767.2,253.2L770.1,255L774,257.4L777.4,259.9L780.2,262.5L782.3,265.1L783.9,267.8L784.9,270.6L785.2,273.3L784.9,276.1L783.9,278.8L782.3,281.5L780.2,284.2L777.4,286.8L774,289.3L770.1,291.7L765.7,294L760.7,296.1L755.2,298.1L749.4,300L743.1,301.7L736.4,303.3L729.4,304.6L722.1,305.8L714.6,306.7L706.8,307.5L699,308L691,308.3L683,308.4L675,308.3L667,308L659.2,307.5L651.4,306.7L643.9,305.8L636.6,304.6L629.6,303.3L622.9,301.7L616.6,300L610.8,298.1L605.3,296.1L600.3,294L595.9,291.7L592,289.3L588.6,286.8L585.8,284.2L583.7,281.5L582.1,278.8L581.1,276.1L580.8,273.3L581.1,270.6L582.1,267.8L583.7,265.1L585.8,262.5L588.6,259.9L592,257.4L595.9,255Z" fill="#e60000"/><path d="M593.1,256.7L589.8,259.1L587,261.7L584.9,264.3L583.3,267L582.4,269.7L582.1,272.4L582.4,275.1L583.3,277.8L584.9,280.5L587,283.1L589.8,285.7L593.1,288.2L597,290.5L601.4,292.8L606.3,294.9L611.7,296.9L617.5,298.8L623.7,300.5L630.3,302L637.2,303.3L644.4,304.4L651.8,305.4L659.4,306.1L667.2,306.7L675.1,307L683,307.1L690.9,307L698.8,306.7L706.6,306.1L714.2,305.4L721.6,304.4L728.8,303.3L735.7,302L742.3,300.5L748.5,298.8L754.3,296.9L759.7,294.9L764.6,292.8L769,290.5L772.9,288.2L776.2,285.7L779,283.1L781.1,280.5L782.7,277.8L783.6,275.1L783.9,272.4L783.6,269.7L782.7,267L781.1,264.3L779,261.7L776.2,259.1L772.9,256.7L775.8,258.6L779.3,261.2L782.1,263.8L784.3,266.5L785.9,269.3L786.9,272.1L787.2,274.9L786.9,277.7L785.9,280.5L784.3,283.3L782.1,286L779.3,288.6L775.8,291.2L771.8,293.6L767.3,295.9L762.2,298.2L756.7,300.2L750.7,302.1L744.2,303.9L737.4,305.4L730.3,306.8L722.9,308L715.2,309L707.3,309.7L699.3,310.3L691.2,310.6L683,310.7L674.8,310.6L666.7,310.3L658.7,309.7L650.8,309L643.1,308L635.7,306.8L628.6,305.4L621.8,303.9L615.3,302.1L609.3,300.2L603.8,298.2L598.7,295.9L594.2,293.6L590.2,291.2L586.7,288.6L583.9,286L581.7,283.3L580.1,280.5L579.1,277.7L578.8,274.9L579.1,272.1L580.1,269.3L581.7,266.5L583.9,263.8L586.7,261.2L590.2,258.6Z" fill="#d90000"/><path d="M591.2,257.9L587.8,260.4L585,263L582.9,265.7L581.3,268.4L580.3,271.2L580,273.9L580.3,276.7L581.3,279.5L582.9,282.2L585,284.9L587.8,287.5L591.2,290L595.2,292.4L599.7,294.7L604.7,296.9L610.2,299L616.1,300.9L622.5,302.6L629.2,304.1L636.2,305.5L643.6,306.6L651.2,307.6L659,308.4L666.9,308.9L674.9,309.2L683,309.3L691.1,309.2L699.1,308.9L707,308.4L714.8,307.6L722.4,306.6L729.8,305.5L736.8,304.1L743.5,302.6L749.9,300.9L755.8,299L761.3,296.9L766.3,294.7L770.8,292.4L774.8,290L778.2,287.5L781,284.9L783.1,282.2L784.7,279.5L785.7,276.7L786,273.9L785.7,271.2L784.7,268.4L783.1,265.7L781,263L778.2,260.4L774.8,257.9L777.6,260L781.1,262.6L784,265.3L786.2,268L787.8,270.9L788.8,273.7L789.2,276.6L788.8,279.4L787.8,282.3L786.2,285.1L784,287.8L781.1,290.5L777.6,293.1L773.5,295.6L768.9,298L763.7,300.3L758.1,302.4L751.9,304.3L745.4,306.1L738.5,307.7L731.2,309.1L723.6,310.3L715.8,311.3L707.8,312L699.6,312.6L691.3,312.9L683,313L674.7,312.9L666.4,312.6L658.2,312L650.2,311.3L642.4,310.3L634.8,309.1L627.5,307.7L620.6,306.1L614.1,304.3L607.9,302.4L602.3,300.3L597.1,298L592.5,295.6L588.4,293.1L584.9,290.5L582,287.8L579.8,285.1L578.2,282.3L577.2,279.4L576.8,276.6L577.2,273.7L578.2,270.9L579.8,268L582,265.3L584.9,262.6L588.4,260Z" fill="#cc0000"/><path d="M586,261.7L583.1,264.4L580.9,267.1L579.3,269.9L578.3,272.7L578,275.6L578.3,278.4L579.3,281.2L580.9,284L583.1,286.7L586,289.4L589.4,291.9L593.5,294.4L598.1,296.8L603.2,299L608.8,301.1L614.8,303L621.3,304.7L628.1,306.3L635.3,307.7L642.8,308.9L650.6,309.9L658.5,310.6L666.6,311.2L674.8,311.5L683,311.6L691.2,311.5L699.4,311.2L707.5,310.6L715.4,309.9L723.2,308.9L730.7,307.7L737.9,306.3L744.7,304.7L751.2,303L757.2,301.1L762.8,299L767.9,296.8L772.5,294.4L776.6,291.9L780,289.4L782.9,286.7L785.1,284L786.7,281.2L787.7,278.4L788,275.6L787.7,272.7L786.7,269.9L785.1,267.1L782.9,264.4L780,261.7L782.8,264.1L785.7,266.8L788,269.6L789.7,272.5L790.7,275.4L791,278.3L790.7,281.2L789.7,284.1L788,287L785.7,289.8L782.8,292.5L779.2,295.2L775.1,297.7L770.4,300.1L765.1,302.4L759.4,304.6L753.2,306.5L746.5,308.3L739.4,310L732,311.4L724.3,312.6L716.4,313.6L708.2,314.4L699.9,315L691.5,315.3L683,315.4L674.5,315.3L666.1,315L657.8,314.4L649.6,313.6L641.7,312.6L634,311.4L626.6,310L619.5,308.3L612.8,306.5L606.6,304.6L600.9,302.4L595.6,300.1L590.9,297.7L586.8,295.2L583.2,292.5L580.3,289.8L578,287L576.3,284.1L575.3,281.2L575,278.3L575.3,275.4L576.3,272.5L578,269.6L580.3,266.8L583.2,264.1Z" fill="#c10000"/><path d="M584.2,263.2L581.3,265.9L579,268.7L577.4,271.5L576.4,274.4L576.1,277.2L576.4,280.1L577.4,283L579,285.8L581.3,288.6L584.2,291.3L587.7,293.9L591.8,296.4L596.5,298.8L601.7,301.1L607.4,303.2L613.6,305.2L620.2,307L627.1,308.6L634.5,310L642.1,311.2L650,312.2L658,313L666.3,313.5L674.6,313.9L683,314L691.4,313.9L699.7,313.5L708,313L716,312.2L723.9,311.2L731.5,310L738.9,308.6L745.8,307L752.4,305.2L758.6,303.2L764.3,301.1L769.5,298.8L774.2,296.4L778.3,293.9L781.8,291.3L784.7,288.6L787,285.8L788.6,283L789.6,280.1L789.9,277.2L789.6,274.4L788.6,271.5L787,268.7L784.7,265.9L781.8,263.2L784.4,265.7L787.4,268.5L789.7,271.3L791.4,274.2L792.4,277.2L792.8,280.1L792.4,283.1L791.4,286L789.7,288.9L787.4,291.8L784.4,294.6L780.8,297.3L776.6,299.8L771.8,302.3L766.5,304.6L760.6,306.8L754.3,308.8L747.5,310.6L740.4,312.3L732.8,313.7L725,315L716.9,316L708.6,316.8L700.2,317.4L691.6,317.7L683,317.9L674.4,317.7L665.8,317.4L657.4,316.8L649.1,316L641,315L633.2,313.7L625.6,312.3L618.5,310.6L611.7,308.8L605.4,306.8L599.5,304.6L594.2,302.3L589.4,299.8L585.2,297.3L581.6,294.6L578.6,291.8L576.3,288.9L574.6,286L573.6,283.1L573.2,280.1L573.6,277.2L574.6,274.2L576.3,271.3L578.6,268.5L581.6,265.7Z" fill="#b70000"/><path d="M579.6,267.5L577.3,270.3L575.6,273.2L574.6,276.1L574.3,279L574.6,282L575.6,284.9L577.3,287.7L579.6,290.6L582.5,293.3L586.1,296L590.3,298.5L595,301L600.3,303.3L606.1,305.4L612.4,307.4L619.1,309.3L626.2,310.9L633.6,312.3L641.4,313.5L649.4,314.6L657.6,315.4L666,315.9L674.5,316.3L683,316.4L691.5,316.3L700,315.9L708.4,315.4L716.6,314.6L724.6,313.5L732.4,312.3L739.8,310.9L746.9,309.3L753.6,307.4L759.9,305.4L765.7,303.3L771,301L775.7,298.5L779.9,296L783.5,293.3L786.4,290.6L788.7,287.7L790.4,284.9L791.4,282L791.7,279L791.4,276.1L790.4,273.2L788.7,270.3L786.4,267.5L789,270.2L791.4,273.1L793.1,276L794.1,279L794.4,282L794.1,285L793.1,288L791.4,291L789,293.9L786,296.7L782.3,299.4L778,302L773.2,304.5L767.7,306.9L761.8,309.1L755.4,311.1L748.5,313L741.2,314.7L733.6,316.1L725.6,317.4L717.4,318.4L709,319.3L700.4,319.9L691.7,320.2L683,320.3L674.3,320.2L665.6,319.9L657,319.3L648.6,318.4L640.4,317.4L632.4,316.1L624.8,314.7L617.5,313L610.6,311.1L604.2,309.1L598.3,306.9L592.8,304.5L588,302L583.7,299.4L580,296.7L577,293.9L574.6,291L572.9,288L571.9,285L571.6,282L571.9,279L572.9,276L574.6,273.1L577,270.2Z" fill="#b00000"/><path d="M577.9,269.1L575.6,272L573.9,274.9L572.9,277.9L572.5,280.9L572.9,283.9L573.9,286.8L575.6,289.7L577.9,292.6L580.9,295.4L584.6,298.1L588.8,300.7L593.6,303.2L599,305.5L604.9,307.7L611.3,309.7L618.1,311.6L625.3,313.2L632.9,314.7L640.7,315.9L648.9,317L657.2,317.8L665.7,318.4L674.3,318.7L683,318.8L691.7,318.7L700.3,318.4L708.8,317.8L717.1,317L725.3,315.9L733.1,314.7L740.7,313.2L747.9,311.6L754.7,309.7L761.1,307.7L767,305.5L772.4,303.2L777.2,300.7L781.4,298.1L785.1,295.4L788.1,292.6L790.4,289.7L792.1,286.8L793.1,283.9L793.5,280.9L793.1,277.9L792.1,274.9L790.4,272L788.1,269.1L790.5,272L792.9,274.9L794.6,277.9L795.7,280.9L796,284L795.7,287L794.6,290.1L792.9,293.1L790.5,296L787.4,298.8L783.7,301.6L779.4,304.3L774.4,306.8L768.9,309.2L762.9,311.4L756.4,313.5L749.4,315.4L742.1,317.1L734.3,318.6L726.2,319.9L717.9,320.9L709.4,321.7L700.7,322.3L691.9,322.7L683,322.8L674.1,322.7L665.3,322.3L656.6,321.7L648.1,320.9L639.8,319.9L631.7,318.6L623.9,317.1L616.6,315.4L609.6,313.5L603.1,311.4L597.1,309.2L591.6,306.8L586.6,304.3L582.3,301.6L578.6,298.8L575.5,296L573.1,293.1L571.4,290.1L570.3,287L570,284L570.3,280.9L571.4,277.9L573.1,274.9L575.5,272Z" fill="#ab0000"/><path d="M574,273.8L572.3,276.8L571.3,279.8L570.9,282.8L571.3,285.8L572.3,288.8L574,291.8L576.4,294.7L579.4,297.5L583.1,300.3L587.4,302.9L592.3,305.4L597.8,307.8L603.7,310L610.2,312.1L617.1,314L624.4,315.6L632.1,317.1L640.1,318.4L648.4,319.4L656.8,320.3L665.5,320.8L674.2,321.2L683,321.3L691.8,321.2L700.5,320.8L709.2,320.3L717.6,319.4L725.9,318.4L733.9,317.1L741.6,315.6L748.9,314L755.8,312.1L762.3,310L768.2,307.8L773.7,305.4L778.6,302.9L782.9,300.3L786.6,297.5L789.6,294.7L792,291.8L793.7,288.8L794.7,285.8L795.1,282.8L794.7,279.8L793.7,276.8L792,273.8L794.3,276.8L796.1,279.9L797.1,282.9L797.5,286L797.1,289.1L796.1,292.2L794.3,295.2L791.9,298.2L788.8,301.1L785,303.9L780.6,306.6L775.6,309.1L770.1,311.6L764,313.8L757.4,315.9L750.3,317.8L742.8,319.6L735,321.1L726.8,322.4L718.4,323.4L709.7,324.3L700.9,324.9L692,325.2L683,325.4L674,325.2L665.1,324.9L656.3,324.3L647.6,323.4L639.2,322.4L631,321.1L623.2,319.6L615.7,317.8L608.6,315.9L602,313.8L595.9,311.6L590.4,309.1L585.4,306.6L581,303.9L577.2,301.1L574.1,298.2L571.7,295.2L569.9,292.2L568.9,289.1L568.5,286L568.9,282.9L569.9,279.9L571.7,276.8Z" fill="#a60000"/><path d="M572.5,275.7L570.8,278.7L569.7,281.7L569.4,284.8L569.7,287.9L570.8,290.9L572.5,293.9L574.9,296.9L578,299.7L581.8,302.5L586.1,305.2L591.1,307.7L596.6,310.1L602.7,312.4L609.2,314.5L616.2,316.4L623.6,318.1L631.4,319.6L639.5,320.9L647.9,321.9L656.5,322.8L665.2,323.4L674.1,323.7L683,323.8L691.9,323.7L700.8,323.4L709.5,322.8L718.1,321.9L726.5,320.9L734.6,319.6L742.4,318.1L749.8,316.4L756.8,314.5L763.3,312.4L769.4,310.1L774.9,307.7L779.9,305.2L784.2,302.5L788,299.7L791.1,296.9L793.5,293.9L795.2,290.9L796.3,287.9L796.6,284.8L796.3,281.7L795.2,278.7L793.5,275.7L795.6,278.8L797.4,281.9L798.5,285L798.8,288.1L798.5,291.2L797.4,294.3L795.6,297.4L793.2,300.4L790,303.3L786.2,306.2L781.8,308.9L776.7,311.5L771.1,313.9L764.9,316.2L758.2,318.4L751.1,320.3L743.5,322L735.6,323.6L727.3,324.9L718.8,326L710,326.8L701.1,327.4L692.1,327.8L683,327.9L673.9,327.8L664.9,327.4L656,326.8L647.2,326L638.7,324.9L630.4,323.6L622.5,322L614.9,320.3L607.8,318.4L601.1,316.2L594.9,313.9L589.3,311.5L584.2,308.9L579.8,306.2L576,303.3L572.8,300.4L570.4,297.4L568.6,294.3L567.5,291.2L567.2,288.1L567.5,285L568.6,281.9L570.4,278.8Z" fill="#a10000"/><path d="M571.1,277.6L569.4,280.7L568.3,283.7L568,286.8L568.3,289.9L569.4,293L571.1,296.1L573.6,299.1L576.7,302L580.5,304.8L584.9,307.5L589.9,310.1L595.5,312.5L601.7,314.8L608.3,316.9L615.4,318.8L622.9,320.5L630.8,322.1L639,323.4L647.5,324.4L656.1,325.3L665,325.9L674,326.2L683,326.4L692,326.2L701,325.9L709.9,325.3L718.5,324.4L727,323.4L735.2,322.1L743.1,320.5L750.6,318.8L757.7,316.9L764.3,314.8L770.5,312.5L776.1,310.1L781.1,307.5L785.5,304.8L789.3,302L792.4,299.1L794.9,296.1L796.6,293L797.7,289.9L798,286.8L797.7,283.7L796.6,280.7L794.9,277.6L796.9,280.8L798.7,283.9L799.7,287.1L800.1,290.2L799.7,293.4L798.7,296.5L796.9,299.6L794.4,302.7L791.2,305.6L787.3,308.5L782.8,311.3L777.7,313.9L772,316.4L765.8,318.7L759.1,320.8L751.8,322.8L744.2,324.5L736.2,326.1L727.8,327.4L719.2,328.5L710.3,329.4L701.3,330L692.2,330.4L683,330.5L673.8,330.4L664.7,330L655.7,329.4L646.8,328.5L638.2,327.4L629.8,326.1L621.8,324.5L614.2,322.8L606.9,320.8L600.2,318.7L594,316.4L588.3,313.9L583.2,311.3L578.7,308.5L574.8,305.6L571.6,302.7L569.1,299.6L567.3,296.5L566.3,293.4L565.9,290.2L566.3,287.1L567.3,283.9L569.1,280.8Z" fill="#9d0000"/><path d="M568.1,282.7L567,285.8L566.6,288.9L567,292.1L568.1,295.2L569.9,298.3L572.3,301.3L575.5,304.2L579.3,307.1L583.8,309.8L588.9,312.4L594.5,314.9L600.7,317.2L607.4,319.4L614.6,321.3L622.2,323L630.2,324.6L638.5,325.9L647,327L655.8,327.8L664.8,328.4L673.9,328.8L683,328.9L692.1,328.8L701.2,328.4L710.2,327.8L719,327L727.5,325.9L735.8,324.6L743.8,323L751.4,321.3L758.6,319.4L765.3,317.2L771.5,314.9L777.1,312.4L782.2,309.8L786.7,307.1L790.5,304.2L793.7,301.3L796.1,298.3L797.9,295.2L799,292.1L799.4,288.9L799,285.8L797.9,282.7L799.8,286.1L800.9,289.2L801.2,292.4L800.9,295.6L799.8,298.8L798,301.9L795.5,305L792.2,308L788.4,310.9L783.8,313.7L778.7,316.3L772.9,318.8L766.6,321.2L759.8,323.3L752.5,325.3L744.8,327.1L736.7,328.6L728.3,330L719.5,331.1L710.6,331.9L701.5,332.6L692.3,332.9L683,333.1L673.7,332.9L664.5,332.6L655.4,331.9L646.5,331.1L637.7,330L629.3,328.6L621.2,327.1L613.5,325.3L606.2,323.3L599.4,321.2L593.1,318.8L587.3,316.3L582.2,313.7L577.6,310.9L573.8,308L570.5,305L568,301.9L566.2,298.8L565.1,295.6L564.8,292.4L565.1,289.2L566.2,286.1Z" fill="#9a0000"/><path d="M566.9,284.8L565.8,287.9L565.4,291.1L565.8,294.3L566.9,297.4L568.7,300.5L571.2,303.6L574.4,306.6L578.2,309.4L582.8,312.2L587.9,314.9L593.6,317.3L599.9,319.7L606.6,321.8L613.9,323.8L621.6,325.6L629.6,327.1L638,328.4L646.7,329.5L655.6,330.4L664.6,331L673.8,331.4L683,331.5L692.2,331.4L701.4,331L710.4,330.4L719.3,329.5L728,328.4L736.4,327.1L744.4,325.6L752.1,323.8L759.4,321.8L766.1,319.7L772.4,317.3L778.1,314.9L783.2,312.2L787.8,309.4L791.6,306.6L794.8,303.6L797.3,300.5L799.1,297.4L800.2,294.3L800.6,291.1L800.2,287.9L799.1,284.8L800.8,288.2L801.9,291.4L802.3,294.7L801.9,297.9L800.8,301.1L799,304.2L796.4,307.3L793.2,310.3L789.3,313.3L784.7,316.1L779.5,318.8L773.7,321.3L767.3,323.6L760.5,325.8L753.1,327.8L745.3,329.6L737.2,331.2L728.6,332.5L719.9,333.6L710.8,334.5L701.7,335.1L692.4,335.5L683,335.7L673.6,335.5L664.3,335.1L655.2,334.5L646.1,333.6L637.4,332.5L628.8,331.2L620.7,329.6L612.9,327.8L605.5,325.8L598.7,323.6L592.3,321.3L586.5,318.8L581.3,316.1L576.7,313.3L572.8,310.3L569.6,307.3L567,304.2L565.2,301.1L564.1,297.9L563.7,294.7L564.1,291.4L565.2,288.2Z" fill="#960000"/><path d="M565.8,286.9L564.7,290.1L564.3,293.3L564.7,296.5L565.8,299.7L567.6,302.8L570.1,305.9L573.4,308.9L577.3,311.8L581.8,314.6L587,317.3L592.8,319.8L599.1,322.1L605.9,324.3L613.2,326.3L621,328.1L629.1,329.7L637.6,331L646.3,332.1L655.3,333L664.4,333.6L673.7,334L683,334.1L692.3,334L701.6,333.6L710.7,333L719.7,332.1L728.4,331L736.9,329.7L745,328.1L752.8,326.3L760.1,324.3L766.9,322.1L773.2,319.8L779,317.3L784.2,314.6L788.7,311.8L792.6,308.9L795.9,305.9L798.4,302.8L800.2,299.7L801.3,296.5L801.7,293.3L801.3,290.1L800.2,286.9L801.7,290.5L802.8,293.7L803.2,296.9L802.8,300.2L801.7,303.4L799.9,306.6L797.3,309.7L794.1,312.7L790.1,315.7L785.5,318.5L780.3,321.2L774.4,323.8L768,326.1L761.1,328.3L753.7,330.4L745.8,332.2L737.6,333.7L729,335.1L720.1,336.2L711.1,337.1L701.8,337.7L692.4,338.1L683,338.2L673.6,338.1L664.2,337.7L654.9,337.1L645.9,336.2L637,335.1L628.4,333.7L620.2,332.2L612.3,330.4L604.9,328.3L598,326.1L591.6,323.8L585.7,321.2L580.5,318.5L575.9,315.7L571.9,312.7L568.7,309.7L566.1,306.6L564.3,303.4L563.2,300.2L562.8,296.9L563.2,293.7L564.3,290.5Z" fill="#930000"/><path d="M564.8,289.1L563.7,292.3L563.3,295.6L563.7,298.8L564.8,302L566.6,305.2L569.2,308.3L572.4,311.3L576.4,314.2L581,317.1L586.2,319.7L592,322.3L598.4,324.6L605.3,326.8L612.7,328.8L620.5,330.6L628.7,332.2L637.2,333.6L646,334.7L655.1,335.6L664.3,336.2L673.6,336.6L683,336.7L692.4,336.6L701.7,336.2L710.9,335.6L720,334.7L728.8,333.6L737.3,332.2L745.5,330.6L753.3,328.8L760.7,326.8L767.6,324.6L774,322.3L779.8,319.7L785,317.1L789.6,314.2L793.6,311.3L796.8,308.3L799.4,305.2L801.2,302L802.3,298.8L802.7,295.6L802.3,292.3L801.2,289.1L802.5,292.7L803.7,296L804,299.2L803.7,302.5L802.5,305.7L800.7,309L798.1,312.1L794.8,315.2L790.8,318.1L786.2,321L780.9,323.7L775,326.3L768.6,328.7L761.6,330.9L754.1,332.9L746.2,334.7L737.9,336.3L729.3,337.7L720.4,338.8L711.3,339.7L701.9,340.3L692.5,340.7L683,340.8L673.5,340.7L664.1,340.3L654.7,339.7L645.6,338.8L636.7,337.7L628.1,336.3L619.8,334.7L611.9,332.9L604.4,330.9L597.4,328.7L591,326.3L585.1,323.7L579.8,321L575.2,318.1L571.2,315.2L567.9,312.1L565.3,309L563.5,305.7L562.3,302.5L562,299.2L562.3,296L563.5,292.7Z" fill="#910000"/><path d="M562.8,294.6L562.4,297.9L562.8,301.1L563.9,304.3L565.8,307.5L568.3,310.7L571.6,313.7L575.6,316.7L580.2,319.5L585.5,322.2L591.3,324.8L597.8,327.1L604.7,329.4L612.1,331.4L620,333.2L628.3,334.8L636.9,336.1L645.7,337.3L654.9,338.1L664.1,338.8L673.5,339.2L683,339.3L692.5,339.2L701.9,338.8L711.1,338.1L720.3,337.3L729.1,336.1L737.7,334.8L746,333.2L753.9,331.4L761.3,329.4L768.2,327.1L774.7,324.8L780.5,322.2L785.8,319.5L790.4,316.7L794.4,313.7L797.7,310.7L800.2,307.5L802.1,304.3L803.2,301.1L803.6,297.9L803.2,294.6L804.4,298.3L804.7,301.6L804.4,304.9L803.2,308.1L801.4,311.4L798.8,314.5L795.5,317.6L791.5,320.6L786.8,323.4L781.5,326.2L775.6,328.8L769.1,331.2L762.1,333.4L754.6,335.4L746.6,337.3L738.3,338.9L729.6,340.2L720.6,341.4L711.4,342.3L702,342.9L692.6,343.3L683,343.4L673.4,343.3L664,342.9L654.6,342.3L645.4,341.4L636.4,340.2L627.7,338.9L619.4,337.3L611.4,335.4L603.9,333.4L596.9,331.2L590.4,328.8L584.5,326.2L579.2,323.4L574.5,320.6L570.5,317.6L567.2,314.5L564.6,311.4L562.8,308.1L561.6,304.9L561.3,301.6L561.6,298.3Z" fill="#8e0000"/><path d="M562.1,296.9L561.7,300.2L562.1,303.4L563.2,306.7L565,309.9L567.6,313.1L570.9,316.1L574.9,319.1L579.6,322L584.8,324.7L590.7,327.3L597.2,329.7L604.2,331.9L611.7,333.9L619.6,335.7L627.9,337.3L636.6,338.7L645.5,339.8L654.7,340.7L664,341.4L673.5,341.7L683,341.9L692.5,341.7L702,341.4L711.3,340.7L720.5,339.8L729.4,338.7L738.1,337.3L746.4,335.7L754.3,333.9L761.8,331.9L768.8,329.7L775.3,327.3L781.2,324.7L786.4,322L791.1,319.1L795.1,316.1L798.4,313.1L801,309.9L802.8,306.7L803.9,303.4L804.3,300.2L803.9,296.9L804.9,300.7L805.3,304L804.9,307.3L803.8,310.5L801.9,313.8L799.3,316.9L796,320L792,323L787.3,325.9L782,328.7L776,331.3L769.5,333.7L762.4,335.9L754.9,338L746.9,339.8L738.5,341.4L729.8,342.8L720.8,343.9L711.6,344.8L702.1,345.5L692.6,345.9L683,346L673.4,345.9L663.9,345.5L654.4,344.8L645.2,343.9L636.2,342.8L627.5,341.4L619.1,339.8L611.1,338L603.6,335.9L596.5,333.7L590,331.3L584,328.7L578.7,325.9L574,323L570,320L566.7,316.9L564.1,313.8L562.2,310.5L561.1,307.3L560.7,304L561.1,300.7Z" fill="#8c0000"/><path d="M561.4,299.2L561,302.5L561.4,305.8L562.5,309.1L564.4,312.3L567,315.5L570.3,318.6L574.3,321.6L579,324.4L584.3,327.2L590.2,329.8L596.7,332.2L603.8,334.4L611.3,336.4L619.3,338.3L627.6,339.9L636.3,341.3L645.3,342.4L654.5,343.3L663.9,343.9L673.4,344.3L683,344.4L692.6,344.3L702.1,343.9L711.5,343.3L720.7,342.4L729.7,341.3L738.4,339.9L746.7,338.3L754.7,336.4L762.2,334.4L769.3,332.2L775.8,329.8L781.7,327.2L787,324.4L791.7,321.6L795.7,318.6L799,315.5L801.6,312.3L803.5,309.1L804.6,305.8L805,302.5L804.6,299.2L805.4,303L805.8,306.3L805.4,309.7L804.3,312.9L802.4,316.2L799.8,319.4L796.4,322.5L792.4,325.5L787.7,328.4L782.3,331.1L776.4,333.7L769.8,336.2L762.7,338.4L755.2,340.5L747.2,342.3L738.7,343.9L730,345.3L720.9,346.5L711.7,347.4L702.2,348L692.6,348.4L683,348.5L673.4,348.4L663.8,348L654.3,347.4L645.1,346.5L636,345.3L627.3,343.9L618.8,342.3L610.8,340.5L603.3,338.4L596.2,336.2L589.6,333.7L583.7,331.1L578.3,328.4L573.6,325.5L569.6,322.5L566.2,319.4L563.6,316.2L561.7,312.9L560.6,309.7L560.2,306.3L560.6,303Z" fill="#890000"/><path d="M560.9,301.6L560.5,304.9L560.9,308.2L562,311.5L563.9,314.7L566.5,317.9L569.8,321L573.8,324L578.5,326.9L583.9,329.7L589.8,332.3L596.4,334.7L603.4,336.9L611,339L619,340.8L627.4,342.4L636.1,343.8L645.1,345L654.4,345.8L663.8,346.5L673.4,346.9L683,347L692.6,346.9L702.2,346.5L711.6,345.8L720.9,345L729.9,343.8L738.6,342.4L747,340.8L755,339L762.6,336.9L769.6,334.7L776.2,332.3L782.1,329.7L787.5,326.9L792.2,324L796.2,321L799.5,317.9L802.1,314.7L804,311.5L805.1,308.2L805.5,304.9L805.1,301.6L805.8,305.4L806.1,308.8L805.8,312.1L804.6,315.4L802.7,318.6L800.1,321.8L796.8,324.9L792.7,328L788,330.9L782.6,333.6L776.6,336.2L770.1,338.7L763,340.9L755.4,343L747.3,344.8L738.9,346.5L730.1,347.9L721.1,349L711.7,349.9L702.3,350.6L692.7,350.9L683,351.1L673.3,350.9L663.7,350.6L654.3,349.9L644.9,349L635.9,347.9L627.1,346.5L618.7,344.8L610.6,343L603,340.9L595.9,338.7L589.4,336.2L583.4,333.6L578,330.9L573.3,328L569.2,324.9L565.9,321.8L563.3,318.6L561.4,315.4L560.2,312.1L559.9,308.8L560.2,305.4Z" fill="#870000"/><path d="M560.4,304L560.1,307.3L560.4,310.6L561.6,313.9L563.4,317.2L566.1,320.4L569.4,323.5L573.5,326.5L578.2,329.4L583.5,332.1L589.5,334.7L596.1,337.2L603.2,339.4L610.7,341.5L618.8,343.3L627.2,345L635.9,346.3L645,347.5L654.3,348.4L663.8,349L673.4,349.4L683,349.6L692.6,349.4L702.2,349L711.7,348.4L721,347.5L730.1,346.3L738.8,345L747.2,343.3L755.3,341.5L762.8,339.4L769.9,337.2L776.5,334.7L782.5,332.1L787.8,329.4L792.5,326.5L796.6,323.5L799.9,320.4L802.6,317.2L804.4,313.9L805.6,310.6L805.9,307.3L805.6,304L806,307.8L806.3,311.2L806,314.5L804.8,317.8L802.9,321.1L800.3,324.3L797,327.4L792.9,330.4L788.2,333.3L782.8,336.1L776.8,338.7L770.2,341.1L763.1,343.4L755.5,345.5L747.4,347.3L739,348.9L730.2,350.3L721.1,351.5L711.8,352.4L702.3,353L692.7,353.4L683,353.6L673.3,353.4L663.7,353L654.2,352.4L644.9,351.5L635.8,350.3L627,348.9L618.6,347.3L610.5,345.5L602.9,343.4L595.8,341.1L589.2,338.7L583.2,336.1L577.8,333.3L573.1,330.4L569,327.4L565.7,324.3L563.1,321.1L561.2,317.8L560,314.5L559.7,311.2L560,307.8Z" fill="#850000"/><path d="M559.7,309.7L560.1,313L561.3,316.3L563.1,319.6L565.8,322.8L569.1,325.9L573.2,328.9L577.9,331.8L583.3,334.6L589.3,337.2L595.8,339.7L603,341.9L610.6,344L618.6,345.8L627,347.5L635.8,348.9L644.9,350L654.2,350.9L663.7,351.6L673.3,351.9L683,352.1L692.7,351.9L702.3,351.6L711.8,350.9L721.1,350L730.2,348.9L739,347.5L747.4,345.8L755.4,344L763,341.9L770.2,339.7L776.7,337.2L782.7,334.6L788.1,331.8L792.8,328.9L796.9,325.9L800.2,322.8L802.9,319.6L804.7,316.3L805.9,313L806.3,309.7L806.4,313.6L806.1,316.9L804.9,320.2L803,323.5L800.4,326.7L797.1,329.8L793,332.9L788.3,335.8L782.9,338.5L776.9,341.2L770.3,343.6L763.2,345.9L755.6,347.9L747.5,349.8L739,351.4L730.2,352.8L721.1,353.9L711.8,354.9L702.3,355.5L692.7,355.9L683,356L673.3,355.9L663.7,355.5L654.2,354.9L644.9,353.9L635.8,352.8L627,351.4L618.5,349.8L610.4,347.9L602.8,345.9L595.7,343.6L589.1,341.2L583.1,338.5L577.7,335.8L573,332.9L568.9,329.8L565.6,326.7L563,323.5L561.1,320.2L559.9,316.9L559.6,313.6Z" fill="#830000"/><path d="M559.6,312.1L560,315.5L561.1,318.8L563,322L565.6,325.2L569,328.4L573.1,331.4L577.8,334.3L583.2,337.1L589.2,339.7L595.7,342.1L602.9,344.4L610.5,346.4L618.5,348.3L627,349.9L635.8,351.3L644.9,352.5L654.2,353.4L663.7,354L673.3,354.4L683,354.5L692.7,354.4L702.3,354L711.8,353.4L721.1,352.5L730.2,351.3L739,349.9L747.5,348.3L755.5,346.4L763.1,344.4L770.3,342.1L776.8,339.7L782.8,337.1L788.2,334.3L792.9,331.4L797,328.4L800.4,325.2L803,322L804.9,318.8L806,315.5L806.4,312.1L806.5,316L806.1,319.4L805,322.7L803.1,325.9L800.5,329.1L797.1,332.3L793,335.3L788.3,338.2L782.9,341L776.9,343.6L770.3,346L763.2,348.3L755.6,350.4L747.5,352.2L739.1,353.8L730.3,355.2L721.2,356.4L711.8,357.3L702.3,357.9L692.7,358.3L683,358.5L673.3,358.3L663.7,357.9L654.2,357.3L644.8,356.4L635.7,355.2L626.9,353.8L618.5,352.2L610.4,350.4L602.8,348.3L595.7,346L589.1,343.6L583.1,341L577.7,338.2L573,335.3L568.9,332.3L565.5,329.1L562.9,325.9L561,322.7L559.9,319.4L559.5,316Z" fill="#810000"/><path d="M559.5,314.6L559.9,317.9L561,321.2L562.9,324.5L565.6,327.7L568.9,330.8L573,333.8L577.7,336.7L583.1,339.5L589.1,342.1L595.7,344.6L602.8,346.8L610.4,348.9L618.5,350.8L626.9,352.4L635.7,353.8L644.8,354.9L654.2,355.8L663.7,356.5L673.3,356.9L683,357L692.7,356.9L702.3,356.5L711.8,355.8L721.2,354.9L730.3,353.8L739.1,352.4L747.5,350.8L755.6,348.9L763.2,346.8L770.3,344.6L776.9,342.1L782.9,339.5L788.3,336.7L793,333.8L797.1,330.8L800.4,327.7L803.1,324.5L805,321.2L806.1,317.9L806.5,314.6L806.5,318.5L806.1,321.8L805,325.1L803.1,328.4L800.4,331.6L797.1,334.7L793,337.7L788.3,340.6L782.9,343.4L776.9,346L770.3,348.5L763.2,350.7L755.6,352.8L747.5,354.6L739.1,356.3L730.3,357.7L721.2,358.8L711.8,359.7L702.3,360.4L692.7,360.8L683,360.9L673.3,360.8L663.7,360.4L654.2,359.7L644.8,358.8L635.7,357.7L626.9,356.3L618.5,354.6L610.4,352.8L602.8,350.7L595.7,348.5L589.1,346L583.1,343.4L577.7,340.6L573,337.7L568.9,334.7L565.6,331.6L562.9,328.4L561,325.1L559.9,321.8L559.5,318.5Z" fill="#800000"/><path d="M559.5,317L559.9,320.3L561,323.6L562.9,326.9L565.5,330.1L568.9,333.2L573,336.3L577.7,339.2L583.1,341.9L589.1,344.6L595.7,347L602.8,349.3L610.4,351.3L618.5,353.2L626.9,354.8L635.7,356.2L644.8,357.4L654.2,358.3L663.7,358.9L673.3,359.3L683,359.4L692.7,359.3L702.3,358.9L711.8,358.3L721.2,357.4L730.3,356.2L739.1,354.8L747.5,353.2L755.6,351.3L763.2,349.3L770.3,347L776.9,344.6L782.9,341.9L788.3,339.2L793,336.3L797.1,333.2L800.5,330.1L803.1,326.9L805,323.6L806.1,320.3L806.5,317L806.4,320.9L806.1,324.2L804.9,327.5L803,330.8L800.4,334L797,337.1L793,340.1L788.2,343L782.9,345.8L776.9,348.4L770.3,350.9L763.2,353.1L755.6,355.2L747.5,357.1L739,358.7L730.2,360.1L721.1,361.2L711.8,362.1L702.3,362.8L692.7,363.2L683,363.3L673.3,363.2L663.7,362.8L654.2,362.1L644.9,361.2L635.8,360.1L627,358.7L618.5,357.1L610.4,355.2L602.8,353.1L595.7,350.9L589.1,348.4L583.1,345.8L577.8,343L573,340.1L569,337.1L565.6,334L563,330.8L561.1,327.5L559.9,324.2L559.6,320.9Z" fill="#800000"/><path d="M559.5,319.4L559.9,322.8L561,326.1L562.9,329.3L565.6,332.5L568.9,335.7L573,338.7L577.7,341.6L583.1,344.4L589.1,347L595.7,349.4L602.8,351.7L610.4,353.8L618.5,355.6L626.9,357.2L635.7,358.6L644.8,359.8L654.2,360.7L663.7,361.3L673.3,361.7L683,361.9L692.7,361.7L702.3,361.3L711.8,360.7L721.2,359.8L730.3,358.6L739.1,357.2L747.5,355.6L755.6,353.8L763.2,351.7L770.3,349.4L776.9,347L782.9,344.4L788.3,341.6L793,338.7L797.1,335.7L800.4,332.5L803.1,329.3L805,326.1L806.1,322.8L806.5,319.4L806.3,323.3L805.9,326.6L804.8,329.9L802.9,333.2L800.3,336.4L796.9,339.5L792.9,342.6L788.1,345.5L782.8,348.2L776.8,350.8L770.2,353.3L763.1,355.5L755.5,357.6L747.4,359.4L739,361.1L730.2,362.5L721.1,363.6L711.8,364.5L702.3,365.2L692.7,365.6L683,365.7L673.3,365.6L663.7,365.2L654.2,364.5L644.9,363.6L635.8,362.5L627,361.1L618.6,359.4L610.5,357.6L602.9,355.5L595.8,353.3L589.2,350.8L583.2,348.2L577.9,345.5L573.1,342.6L569.1,339.5L565.7,336.4L563.1,333.2L561.2,329.9L560.1,326.6L559.7,323.3Z" fill="#810000"/><path d="M559.6,321.9L560,325.2L561.1,328.5L563,331.8L565.6,335L569,338.1L573.1,341.1L577.8,344L583.2,346.8L589.2,349.4L595.7,351.8L602.9,354.1L610.5,356.2L618.5,358L627,359.6L635.8,361L644.9,362.2L654.2,363.1L663.7,363.7L673.3,364.1L683,364.3L692.7,364.1L702.3,363.7L711.8,363.1L721.1,362.2L730.2,361L739,359.6L747.5,358L755.5,356.2L763.1,354.1L770.3,351.8L776.8,349.4L782.8,346.8L788.2,344L792.9,341.1L797,338.1L800.4,335L803,331.8L804.9,328.5L806,325.2L806.4,321.9L806.1,325.7L805.7,329.1L804.6,332.3L802.7,335.6L800.1,338.8L796.7,341.9L792.7,344.9L787.9,347.8L782.6,350.6L776.6,353.2L770,355.6L762.9,357.9L755.3,360L747.3,361.8L738.9,363.4L730.1,364.8L721,366L711.7,366.9L702.3,367.5L692.7,367.9L683,368L673.3,367.9L663.7,367.5L654.3,366.9L645,366L635.9,364.8L627.1,363.4L618.7,361.8L610.7,360L603.1,357.9L596,355.6L589.4,353.2L583.4,350.6L578.1,347.8L573.3,344.9L569.3,341.9L565.9,338.8L563.3,335.6L561.4,332.3L560.3,329.1L559.9,325.7Z" fill="#840000"/><path d="M560.1,327.6L561.3,330.9L563.1,334.2L565.8,337.4L569.1,340.5L573.2,343.5L577.9,346.4L583.3,349.2L589.3,351.8L595.8,354.2L603,356.5L610.6,358.6L618.6,360.4L627,362L635.8,363.4L644.9,364.6L654.2,365.5L663.7,366.1L673.3,366.5L683,366.6L692.7,366.5L702.3,366.1L711.8,365.5L721.1,364.6L730.2,363.4L739,362L747.4,360.4L755.4,358.6L763,356.5L770.2,354.2L776.7,351.8L782.7,349.2L788.1,346.4L792.8,343.5L796.9,340.5L800.2,337.4L802.9,334.2L804.7,330.9L805.9,327.6L805.3,331.4L804.2,334.7L802.3,338L799.7,341.2L796.4,344.3L792.3,347.3L787.6,350.2L782.3,352.9L776.3,355.5L769.8,358L762.7,360.2L755.1,362.3L747.1,364.1L738.7,365.7L730,367.1L720.9,368.2L711.6,369.1L702.2,369.8L692.6,370.2L683,370.3L673.4,370.2L663.8,369.8L654.4,369.1L645.1,368.2L636,367.1L627.3,365.7L618.9,364.1L610.9,362.3L603.3,360.2L596.2,358L589.7,355.5L583.7,352.9L578.4,350.2L573.7,347.3L569.6,344.3L566.3,341.2L563.7,338L561.8,334.7L560.7,331.4Z" fill="#860000"/><path d="M560.4,330L561.6,333.3L563.4,336.6L566.1,339.8L569.4,342.9L573.5,345.9L578.2,348.8L583.5,351.5L589.5,354.1L596.1,356.6L603.2,358.8L610.7,360.9L618.8,362.7L627.2,364.3L635.9,365.7L645,366.9L654.3,367.8L663.8,368.4L673.4,368.8L683,368.9L692.6,368.8L702.2,368.4L711.7,367.8L721,366.9L730.1,365.7L738.8,364.3L747.2,362.7L755.3,360.9L762.8,358.8L769.9,356.6L776.5,354.1L782.5,351.5L787.8,348.8L792.5,345.9L796.6,342.9L799.9,339.8L802.6,336.6L804.4,333.3L805.6,330L804.8,333.8L803.7,337.1L801.8,340.3L799.2,343.5L795.9,346.6L791.9,349.6L787.2,352.5L781.9,355.2L775.9,357.8L769.4,360.2L762.4,362.5L754.8,364.5L746.9,366.3L738.5,367.9L729.8,369.3L720.8,370.5L711.5,371.4L702.1,372L692.6,372.4L683,372.5L673.4,372.4L663.9,372L654.5,371.4L645.2,370.5L636.2,369.3L627.5,367.9L619.1,366.3L611.2,364.5L603.6,362.5L596.6,360.2L590.1,357.8L584.1,355.2L578.8,352.5L574.1,349.6L570.1,346.6L566.8,343.5L564.2,340.3L562.3,337.1L561.2,333.8Z" fill="#890000"/><path d="M560.9,332.4L562,335.7L563.9,338.9L566.5,342.1L569.8,345.2L573.8,348.2L578.5,351.1L583.9,353.8L589.8,356.4L596.4,358.9L603.4,361.1L611,363.2L619,365L627.4,366.6L636.1,368L645.1,369.1L654.4,370L663.8,370.7L673.4,371.1L683,371.2L692.6,371.1L702.2,370.7L711.6,370L720.9,369.1L729.9,368L738.6,366.6L747,365L755,363.2L762.6,361.1L769.6,358.9L776.2,356.4L782.1,353.8L787.5,351.1L792.2,348.2L796.2,345.2L799.5,342.1L802.1,338.9L804,335.7L805.1,332.4L804.2,336.2L803.1,339.4L801.2,342.6L798.6,345.8L795.3,348.9L791.3,351.9L786.7,354.7L781.4,357.4L775.5,360L769,362.4L762,364.7L754.5,366.7L746.5,368.5L738.2,370.1L729.5,371.5L720.6,372.6L711.4,373.5L702,374.2L692.5,374.5L683,374.7L673.5,374.5L664,374.2L654.6,373.5L645.4,372.6L636.5,371.5L627.8,370.1L619.5,368.5L611.5,366.7L604,364.7L597,362.4L590.5,360L584.6,357.4L579.3,354.7L574.7,351.9L570.7,348.9L567.4,345.8L564.8,342.6L562.9,339.4L561.8,336.2Z" fill="#8d0000"/><path d="M561.4,334.8L562.5,338L564.4,341.3L567,344.4L570.3,347.5L574.3,350.5L579,353.4L584.3,356.1L590.2,358.7L596.7,361.1L603.8,363.3L611.3,365.4L619.3,367.2L627.6,368.8L636.3,370.2L645.3,371.3L654.5,372.2L663.9,372.9L673.4,373.3L683,373.4L692.6,373.3L702.1,372.9L711.5,372.2L720.7,371.3L729.7,370.2L738.4,368.8L746.7,367.2L754.7,365.4L762.2,363.3L769.3,361.1L775.8,358.7L781.7,356.1L787,353.4L791.7,350.5L795.7,347.5L799,344.4L801.6,341.3L803.5,338L804.6,334.8L803.5,338.5L802.4,341.7L800.5,344.9L798,348.1L794.7,351.1L790.7,354.1L786.1,356.9L780.8,359.6L774.9,362.2L768.5,364.6L761.5,366.8L754,368.8L746.2,370.6L737.9,372.2L729.3,373.6L720.4,374.7L711.2,375.6L701.9,376.3L692.5,376.6L683,376.8L673.5,376.6L664.1,376.3L654.8,375.6L645.6,374.7L636.7,373.6L628.1,372.2L619.8,370.6L612,368.8L604.5,366.8L597.5,364.6L591.1,362.2L585.2,359.6L579.9,356.9L575.3,354.1L571.3,351.1L568,348.1L565.5,344.9L563.6,341.7L562.5,338.5Z" fill="#910000"/><path d="M562.1,337.1L563.2,340.3L565,343.6L567.6,346.7L570.9,349.8L574.9,352.8L579.6,355.6L584.8,358.3L590.7,360.9L597.2,363.3L604.2,365.5L611.7,367.6L619.6,369.4L627.9,371L636.6,372.3L645.5,373.5L654.7,374.4L664,375L673.5,375.4L683,375.5L692.5,375.4L702,375L711.3,374.4L720.5,373.5L729.4,372.3L738.1,371L746.4,369.4L754.3,367.6L761.8,365.5L768.8,363.3L775.3,360.9L781.2,358.3L786.4,355.6L791.1,352.8L795.1,349.8L798.4,346.7L801,343.6L802.8,340.3L803.9,337.1L802.7,340.8L801.6,344L799.7,347.2L797.2,350.3L793.9,353.3L790,356.3L785.3,359.1L780.1,361.8L774.3,364.3L767.9,366.7L761,368.9L753.6,370.9L745.7,372.7L737.5,374.3L728.9,375.6L720.1,376.8L711,377.6L701.8,378.3L692.4,378.7L683,378.8L673.6,378.7L664.2,378.3L655,377.6L645.9,376.8L637.1,375.6L628.5,374.3L620.3,372.7L612.4,370.9L605,368.9L598.1,366.7L591.7,364.3L585.9,361.8L580.7,359.1L576,356.3L572.1,353.3L568.8,350.3L566.3,347.2L564.4,344L563.3,340.8Z" fill="#960000"/><path d="M563.9,342.6L565.8,345.8L568.3,349L571.6,352L575.6,355L580.2,357.8L585.5,360.5L591.3,363.1L597.8,365.4L604.7,367.7L612.1,369.7L620,371.5L628.3,373.1L636.9,374.4L645.7,375.5L654.9,376.4L664.1,377.1L673.5,377.4L683,377.6L692.5,377.4L701.9,377.1L711.1,376.4L720.3,375.5L729.1,374.4L737.7,373.1L746,371.5L753.9,369.7L761.3,367.7L768.2,365.4L774.7,363.1L780.5,360.5L785.8,357.8L790.4,355L794.4,352L797.7,349L800.2,345.8L802.1,342.6L800.6,346.2L798.8,349.3L796.3,352.4L793,355.5L789.1,358.4L784.5,361.2L779.3,363.8L773.6,366.4L767.2,368.7L760.3,370.9L753,372.9L745.2,374.7L737.1,376.3L728.6,377.6L719.8,378.7L710.8,379.6L701.6,380.2L692.3,380.6L683,380.7L673.7,380.6L664.4,380.2L655.2,379.6L646.2,378.7L637.4,377.6L628.9,376.3L620.8,374.7L613,372.9L605.7,370.9L598.8,368.7L592.4,366.4L586.7,363.8L581.5,361.2L576.9,358.4L573,355.5L569.7,352.4L567.2,349.3L565.4,346.2Z" fill="#9c0000"/><path d="M564.8,344.9L566.6,348L569.2,351.1L572.4,354.2L576.4,357.1L581,359.9L586.2,362.6L592,365.1L598.4,367.5L605.3,369.7L612.7,371.7L620.5,373.5L628.7,375.1L637.2,376.4L646,377.6L655.1,378.4L664.3,379.1L673.6,379.4L683,379.6L692.4,379.4L701.7,379.1L710.9,378.4L720,377.6L728.8,376.4L737.3,375.1L745.5,373.5L753.3,371.7L760.7,369.7L767.6,367.5L774,365.1L779.8,362.6L785,359.9L789.6,357.1L793.6,354.2L796.8,351.1L799.4,348L801.2,344.9L799.6,348.4L797.8,351.5L795.3,354.6L792,357.5L788.2,360.4L783.6,363.2L778.5,365.9L772.7,368.4L766.5,370.7L759.7,372.9L752.4,374.8L744.7,376.6L736.6,378.2L728.2,379.5L719.5,380.6L710.6,381.5L701.5,382.1L692.3,382.5L683,382.6L673.7,382.5L664.5,382.1L655.4,381.5L646.5,380.6L637.8,379.5L629.4,378.2L621.3,376.6L613.6,374.8L606.3,372.9L599.5,370.7L593.3,368.4L587.5,365.9L582.4,363.2L577.8,360.4L574,357.5L570.7,354.6L568.2,351.5L566.4,348.4Z" fill="#a30000"/><path d="M565.8,347.1L567.6,350.2L570.1,353.3L573.4,356.3L577.3,359.2L581.8,362L587,364.7L592.8,367.2L599.1,369.5L605.9,371.7L613.2,373.7L621,375.5L629.1,377L637.6,378.4L646.3,379.5L655.3,380.3L664.4,381L673.7,381.3L683,381.5L692.3,381.3L701.6,381L710.7,380.3L719.7,379.5L728.4,378.4L736.9,377L745,375.5L752.8,373.7L760.1,371.7L766.9,369.5L773.2,367.2L779,364.7L784.2,362L788.7,359.2L792.6,356.3L795.9,353.3L798.4,350.2L800.2,347.1L798.4,350.5L796.6,353.6L794.1,356.6L791,359.6L787.1,362.4L782.6,365.2L777.5,367.8L771.9,370.3L765.6,372.6L758.9,374.7L751.7,376.7L744.1,378.4L736.1,380L727.7,381.3L719.1,382.4L710.3,383.2L701.3,383.9L692.2,384.2L683,384.4L673.8,384.2L664.7,383.9L655.7,383.2L646.9,382.4L638.3,381.3L629.9,380L621.9,378.4L614.3,376.7L607.1,374.7L600.4,372.6L594.1,370.3L588.5,367.8L583.4,365.2L578.9,362.4L575,359.6L571.9,356.6L569.4,353.6L567.6,350.5Z" fill="#ac0000"/><path d="M566.9,349.2L568.7,352.3L571.2,355.4L574.4,358.4L578.2,361.2L582.8,364L587.9,366.6L593.6,369.1L599.9,371.5L606.6,373.6L613.9,375.6L621.6,377.3L629.6,378.9L638,380.2L646.7,381.3L655.6,382.2L664.6,382.8L673.8,383.2L683,383.3L692.2,383.2L701.4,382.8L710.4,382.2L719.3,381.3L728,380.2L736.4,378.9L744.4,377.3L752.1,375.6L759.4,373.6L766.1,371.5L772.4,369.1L778.1,366.6L783.2,364L787.8,361.2L791.6,358.4L794.8,355.4L797.3,352.3L799.1,349.2L797.2,352.5L795.4,355.6L792.9,358.6L789.8,361.5L786,364.4L781.5,367.1L776.5,369.7L770.9,372.1L764.7,374.4L758.1,376.5L750.9,378.5L743.4,380.2L735.5,381.7L727.2,383L718.7,384.1L710,385L701.1,385.6L692.1,385.9L683,386L673.9,385.9L664.9,385.6L656,385L647.3,384.1L638.8,383L630.5,381.7L622.6,380.2L615.1,378.5L607.9,376.5L601.3,374.4L595.1,372.1L589.5,369.7L584.5,367.1L580,364.4L576.2,361.5L573.1,358.6L570.6,355.6L568.8,352.5Z" fill="#b70000"/><path d="M569.9,354.4L572.3,357.4L575.5,360.4L579.3,363.2L583.8,366L588.9,368.6L594.5,371L600.7,373.3L607.4,375.5L614.6,377.4L622.2,379.2L630.2,380.7L638.5,382L647,383.1L655.8,383.9L664.8,384.6L673.9,384.9L683,385L692.1,384.9L701.2,384.6L710.2,383.9L719,383.1L727.5,382L735.8,380.7L743.8,379.2L751.4,377.4L758.6,375.5L765.3,373.3L771.5,371L777.1,368.6L782.2,366L786.7,363.2L790.5,360.4L793.7,357.4L796.1,354.4L794,357.6L791.6,360.5L788.5,363.4L784.8,366.2L780.4,368.9L775.4,371.5L769.8,373.9L763.7,376.2L757.2,378.2L750.1,380.2L742.7,381.9L734.8,383.4L726.7,384.7L718.3,385.7L709.7,386.6L700.9,387.2L692,387.5L683,387.6L674,387.5L665.1,387.2L656.3,386.6L647.7,385.7L639.3,384.7L631.2,383.4L623.3,381.9L615.9,380.2L608.8,378.2L602.3,376.2L596.2,373.9L590.6,371.5L585.6,368.9L581.2,366.2L577.5,363.4L574.4,360.5L572,357.6Z" fill="#c30000"/><path d="M571.1,356.4L573.6,359.4L576.7,362.3L580.5,365.1L584.9,367.8L589.9,370.4L595.5,372.8L601.7,375.1L608.3,377.2L615.4,379.1L622.9,380.9L630.8,382.4L639,383.7L647.5,384.8L656.1,385.6L665,386.2L674,386.6L683,386.7L692,386.6L701,386.2L709.9,385.6L718.5,384.8L727,383.7L735.2,382.4L743.1,380.9L750.6,379.1L757.7,377.2L764.3,375.1L770.5,372.8L776.1,370.4L781.1,367.8L785.5,365.1L789.3,362.3L792.4,359.4L794.9,356.4L792.6,359.5L790.2,362.4L787.1,365.2L783.4,368L779.1,370.7L774.2,373.2L768.7,375.6L762.7,377.8L756.2,379.9L749.2,381.8L741.9,383.4L734.2,384.9L726.1,386.2L717.8,387.3L709.3,388.1L700.6,388.7L691.8,389L683,389.1L674.2,389L665.4,388.7L656.7,388.1L648.2,387.3L639.9,386.2L631.8,384.9L624.1,383.4L616.8,381.8L609.8,379.9L603.3,377.8L597.3,375.6L591.8,373.2L586.9,370.7L582.6,368L578.9,365.2L575.8,362.4L573.4,359.5Z" fill="#ce0000"/><path d="M572.5,358.3L574.9,361.3L578,364.2L581.8,366.9L586.1,369.6L591.1,372.2L596.6,374.6L602.7,376.8L609.2,378.9L616.2,380.8L623.6,382.5L631.4,384L639.5,385.3L647.9,386.3L656.5,387.2L665.2,387.8L674.1,388.1L683,388.3L691.9,388.1L700.8,387.8L709.5,387.2L718.1,386.3L726.5,385.3L734.6,384L742.4,382.5L749.8,380.8L756.8,378.9L763.3,376.8L769.4,374.6L774.9,372.2L779.9,369.6L784.2,366.9L788,364.2L791.1,361.3L793.5,358.3L791.1,361.3L788.7,364.2L785.7,367L782,369.7L777.7,372.3L772.9,374.8L767.5,377.2L761.6,379.4L755.2,381.4L748.3,383.3L741.1,384.9L733.4,386.4L725.5,387.6L717.3,388.7L708.9,389.5L700.4,390.1L691.7,390.4L683,390.6L674.3,390.4L665.6,390.1L657.1,389.5L648.7,388.7L640.5,387.6L632.6,386.4L624.9,384.9L617.7,383.3L610.8,381.4L604.4,379.4L598.5,377.2L593.1,374.8L588.3,372.3L584,369.7L580.3,367L577.3,364.2L574.9,361.3Z" fill="#d90000"/><path d="M576.4,363.1L579.4,365.9L583.1,368.7L587.4,371.3L592.3,373.8L597.8,376.2L603.7,378.4L610.2,380.5L617.1,382.4L624.4,384L632.1,385.5L640.1,386.8L648.4,387.8L656.8,388.7L665.5,389.2L674.2,389.6L683,389.7L691.8,389.6L700.5,389.2L709.2,388.7L717.6,387.8L725.9,386.8L733.9,385.5L741.6,384L748.9,382.4L755.8,380.5L762.3,378.4L768.2,376.2L773.7,373.8L778.6,371.3L782.9,368.7L786.6,365.9L789.6,363.1L787.1,365.9L784.1,368.6L780.5,371.3L776.3,373.9L771.5,376.3L766.2,378.7L760.4,380.8L754.1,382.8L747.3,384.7L740.2,386.3L732.7,387.8L724.9,389L716.8,390L708.5,390.8L700.1,391.4L691.6,391.7L683,391.9L674.4,391.7L665.9,391.4L657.5,390.8L649.2,390L641.1,389L633.3,387.8L625.8,386.3L618.7,384.7L611.9,382.8L605.6,380.8L599.8,378.7L594.5,376.3L589.7,373.9L585.5,371.3L581.9,368.6L578.9,365.9Z" fill="#e10000"/><path d="M577.9,364.9L580.9,367.6L584.6,370.4L588.8,373L593.6,375.4L599,377.8L604.9,380L611.3,382L618.1,383.8L625.3,385.5L632.9,386.9L640.7,388.2L648.9,389.2L657.2,390L665.7,390.6L674.3,391L683,391.1L691.7,391L700.3,390.6L708.8,390L717.1,389.2L725.3,388.2L733.1,386.9L740.7,385.5L747.9,383.8L754.7,382L761.1,380L767,377.8L772.4,375.4L777.2,373L781.4,370.4L785.1,367.6L788.1,364.9L785.4,367.5L782.5,370.2L778.9,372.8L774.8,375.4L770.1,377.8L764.9,380.1L759.1,382.2L752.9,384.2L746.3,386L739.2,387.6L731.9,389L724.2,390.2L716.3,391.2L708.1,392L699.8,392.6L691.4,392.9L683,393L674.6,392.9L666.2,392.6L657.9,392L649.7,391.2L641.8,390.2L634.1,389L626.8,387.6L619.7,386L613.1,384.2L606.9,382.2L601.1,380.1L595.9,377.8L591.2,375.4L587.1,372.8L583.5,370.2L580.6,367.5Z" fill="#e90000"/><path d="M582.5,369.3L586.1,371.9L590.3,374.5L595,376.9L600.3,379.2L606.1,381.4L612.4,383.4L619.1,385.2L626.2,386.8L633.6,388.3L641.4,389.5L649.4,390.5L657.6,391.3L666,391.9L674.5,392.2L683,392.3L691.5,392.2L700,391.9L708.4,391.3L716.6,390.5L724.6,389.5L732.4,388.3L739.8,386.8L746.9,385.2L753.6,383.4L759.9,381.4L765.7,379.2L771,376.9L775.7,374.5L779.9,371.9L783.5,369.3L780.7,371.7L777.2,374.3L773.2,376.8L768.6,379.1L763.4,381.4L757.8,383.5L751.7,385.4L745.2,387.2L738.3,388.8L731,390.2L723.5,391.4L715.7,392.3L707.7,393.1L699.5,393.7L691.3,394L683,394.1L674.7,394L666.5,393.7L658.3,393.1L650.3,392.3L642.5,391.4L635,390.2L627.7,388.8L620.8,387.2L614.3,385.4L608.2,383.5L602.6,381.4L597.4,379.1L592.8,376.8L588.8,374.3L585.3,371.7Z" fill="#f10000"/><path d="M584.2,370.8L587.7,373.4L591.8,375.9L596.5,378.3L601.7,380.6L607.4,382.7L613.6,384.7L620.2,386.5L627.1,388.1L634.5,389.5L642.1,390.7L650,391.7L658,392.5L666.3,393L674.6,393.4L683,393.5L691.4,393.4L699.7,393L708,392.5L716,391.7L723.9,390.7L731.5,389.5L738.9,388.1L745.8,386.5L752.4,384.7L758.6,382.7L764.3,380.6L769.5,378.3L774.2,375.9L778.3,373.4L781.8,370.8L778.9,373.1L775.5,375.6L771.5,378.1L767,380.4L761.9,382.6L756.4,384.7L750.4,386.6L744,388.3L737.2,389.8L730.1,391.2L722.7,392.4L715.1,393.4L707.2,394.1L699.2,394.7L691.1,395L683,395.1L674.9,395L666.8,394.7L658.8,394.1L650.9,393.4L643.3,392.4L635.9,391.2L628.8,389.8L622,388.3L615.6,386.6L609.6,384.7L604.1,382.6L599,380.4L594.5,378.1L590.5,375.6L587.1,373.1Z" fill="#f70000"/><path d="M589.4,374.8L593.5,377.3L598.1,379.7L603.2,381.9L608.8,384L614.8,385.9L621.3,387.6L628.1,389.2L635.3,390.6L642.8,391.8L650.6,392.8L658.5,393.5L666.6,394.1L674.8,394.4L683,394.5L691.2,394.4L699.4,394.1L707.5,393.5L715.4,392.8L723.2,391.8L730.7,390.6L737.9,389.2L744.7,387.6L751.2,385.9L757.2,384L762.8,381.9L767.9,379.7L772.5,377.3L776.6,374.8L773.7,376.9L769.8,379.3L765.3,381.5L760.4,383.7L754.9,385.7L749.1,387.6L742.8,389.3L736.2,390.8L729.2,392.1L721.9,393.3L714.4,394.2L706.8,395L698.9,395.5L691,395.8L683,396L675,395.8L667.1,395.5L659.2,395L651.6,394.2L644.1,393.3L636.8,392.1L629.8,390.8L623.2,389.3L616.9,387.6L611.1,385.7L605.6,383.7L600.7,381.5L596.2,379.3L592.3,376.9Z" fill="#fd0000"/><path d="M591.2,376.1L595.2,378.6L599.7,380.9L604.7,383L610.2,385.1L616.1,387L622.5,388.7L629.2,390.2L636.2,391.6L643.6,392.8L651.2,393.7L659,394.5L666.9,395L674.9,395.3L683,395.5L691.1,395.3L699.1,395L707,394.5L714.8,393.7L722.4,392.8L729.8,391.6L736.8,390.2L743.5,388.7L749.9,387L755.8,385.1L761.3,383L766.3,380.9L770.8,378.6L774.8,376.1L771.7,378L767.9,380.3L763.6,382.6L758.7,384.7L753.4,386.7L747.7,388.5L741.5,390.2L735,391.6L728.2,393L721.1,394.1L713.8,395L706.3,395.7L698.6,396.3L690.8,396.6L683,396.7L675.2,396.6L667.4,396.3L659.7,395.7L652.2,395L644.9,394.1L637.8,393L631,391.6L624.5,390.2L618.3,388.5L612.6,386.7L607.3,384.7L602.4,382.6L598.1,380.3L594.3,378Z" fill="#ff0300"/><path d="M597,379.7L601.4,382L606.3,384.1L611.7,386.1L617.5,388L623.7,389.6L630.3,391.2L637.2,392.5L644.4,393.6L651.8,394.6L659.4,395.3L667.2,395.8L675.1,396.2L683,396.3L690.9,396.2L698.8,395.8L706.6,395.3L714.2,394.6L721.6,393.6L728.8,392.5L735.7,391.2L742.3,389.6L748.5,388L754.3,386.1L759.7,384.1L764.6,382L769,379.7L766,381.3L761.8,383.5L757.1,385.6L751.9,387.5L746.2,389.3L740.2,390.9L733.9,392.4L727.2,393.7L720.3,394.8L713.1,395.7L705.7,396.4L698.2,396.9L690.6,397.2L683,397.3L675.4,397.2L667.8,396.9L660.3,396.4L652.9,395.7L645.7,394.8L638.8,393.7L632.1,392.4L625.8,390.9L619.8,389.3L614.1,387.5L608.9,385.6L604.2,383.5L600,381.3Z" fill="#ff0700"/><path d="M603.1,383L607.9,385.1L613.2,387L618.9,388.8L625,390.5L631.4,392L638.2,393.3L645.2,394.4L652.5,395.3L660,396L667.6,396.5L675.3,396.8L683,397L690.7,396.8L698.4,396.5L706,396L713.5,395.3L720.8,394.4L727.8,393.3L734.6,392L741,390.5L747.1,388.8L752.8,387L758.1,385.1L762.9,383L759.9,384.3L755.3,386.3L750.2,388.2L744.8,390L738.9,391.6L732.7,393L726.2,394.2L719.4,395.3L712.4,396.2L705.2,396.9L697.9,397.4L690.5,397.7L683,397.8L675.5,397.7L668.1,397.4L660.8,396.9L653.6,396.2L646.6,395.3L639.8,394.2L633.3,393L627.1,391.6L621.2,390L615.8,388.2L610.7,386.3L606.1,384.3Z" fill="#ff0b00"/><path d="M609.6,385.9L614.8,387.8L620.3,389.6L626.3,391.2L632.6,392.6L639.2,393.9L646.1,395L653.2,395.9L660.5,396.6L667.9,397.1L675.4,397.4L683,397.5L690.6,397.4L698.1,397.1L705.5,396.6L712.8,395.9L719.9,395L726.8,393.9L733.4,392.6L739.7,391.2L745.7,389.6L751.2,387.8L756.4,385.9L753.5,387L748.6,388.8L743.2,390.5L737.5,392.1L731.4,393.5L725.1,394.7L718.5,395.7L711.6,396.6L704.6,397.3L697.5,397.8L690.3,398.1L683,398.2L675.7,398.1L668.5,397.8L661.4,397.3L654.4,396.6L647.5,395.7L640.9,394.7L634.6,393.5L628.5,392.1L622.8,390.5L617.4,388.8L612.5,387Z" fill="#ff1100"/><path d="M616.4,388.5L621.9,390.2L627.7,391.8L633.8,393.2L640.3,394.4L647,395.5L653.9,396.4L661,397.1L668.3,397.6L675.6,397.9L683,398L690.4,397.9L697.7,397.6L705,397.1L712.1,396.4L719,395.5L725.7,394.4L732.2,393.2L738.3,391.8L744.1,390.2L749.6,388.5L746.8,389.3L741.6,391L736.1,392.5L730.2,393.8L724,395L717.5,396L710.9,396.9L704.1,397.5L697.1,398L690.1,398.3L683,398.4L675.9,398.3L668.9,398L661.9,397.5L655.1,396.9L648.5,396L642,395L635.8,393.8L629.9,392.5L624.4,391L619.2,389.3Z" fill="#ff1800"/><path d="M629.1,392.2L635.1,393.6L641.4,394.8L647.9,395.9L654.7,396.7L661.6,397.4L668.6,397.9L675.8,398.2L683,398.3L690.2,398.2L697.4,397.9L704.4,397.4L711.3,396.7L718.1,395.9L724.6,394.8L730.9,393.6L736.9,392.2L734.6,392.7L728.9,394.1L722.8,395.2L716.6,396.2L710.1,397L703.5,397.7L696.7,398.1L689.9,398.4L683,398.5L676.1,398.4L669.3,398.1L662.5,397.7L655.9,397L649.4,396.2L643.2,395.2L637.1,394.1L631.4,392.7Z" fill="#ff2100"/><path d="M655.4,397L662.2,397.6L669,398.1L676,398.4L683,398.5L690,398.4L697,398.1L703.8,397.6L710.6,397L709.3,397L702.9,397.7L696.3,398.1L689.7,398.4L683,398.5L676.3,398.4L669.7,398.1L663.1,397.7L656.7,397Z" fill="#ff2b00"/></g>
<path d="M683,270.5V177.3" stroke="#1010f0" stroke-width="1.7"/>
<path d="M586.1,350.3L588.7,351.2L591.3,352L594,352.8L596.8,353.6L599.6,354.4L602.5,355.1L605.4,355.8L608.4,356.5L611.4,357.1L614.5,357.8L617.6,358.4L620.8,358.9L624,359.5L627.3,360L630.6,360.5L633.9,361L637.3,361.4L640.7,361.8L644.1,362.1L647.5,362.5L651,362.8L654.5,363.1L658,363.3L661.6,363.5L665.1,363.7L668.7,363.8L672.3,363.9L675.8,364L679.4,364.1L683,364.1L686.6,364.1L690.2,364L693.7,363.9L697.3,363.8L700.9,363.7L704.4,363.5L708,363.3L711.5,363.1L715,362.8L718.5,362.5L721.9,362.1L725.3,361.8L728.7,361.4L732.1,361L735.4,360.5L738.7,360L742,359.5L745.2,358.9L748.4,358.4L751.5,357.8L754.6,357.1L757.6,356.5L760.6,355.8L763.5,355.1L766.4,354.4L769.2,353.6L772,352.8L774.7,352L777.3,351.2L779.9,350.3L782.4,349.4L784.8,348.5L787.2,347.6L789.5,346.6L791.7,345.7L793.8,344.7L795.9,343.7L797.9,342.6L799.8,341.6L801.6,340.5L803.4,339.5L805.1,338.4L806.7,337.3L808.2,336.1L809.6,335L810.9,333.9L812.1,332.7L813.3,331.5L814.4,330.4L815.3,329.2L816.2,328L817,326.8L817.7,325.6L818.3,324.4L818.8,323.1L819.2,321.9L819.6,320.7L819.8,319.5L820,318.2L820,317L820,315.8M546,317L546,318.2L546.2,319.5L546.4,320.7L546.8,321.9L547.2,323.1L547.7,324.4L548.3,325.6L549,326.8L549.8,328L550.7,329.2L551.6,330.4L552.7,331.5L553.9,332.7L555.1,333.9L556.4,335L557.8,336.1L559.3,337.3L560.9,338.4L562.6,339.5L564.4,340.5L566.2,341.6L568.1,342.6L570.1,343.7L572.2,344.7L574.3,345.7L576.5,346.6L578.8,347.6L581.2,348.5L583.6,349.4L586.1,350.3" fill="none" stroke="#0000ff" stroke-width="2.0"/><path d="M779.9,350.3L779.8,346.9L779.7,343.5L779.6,340.1L779.3,336.7L779,333.2L778.7,329.8L778.3,326.3L777.8,322.8L777.2,319.3L776.6,315.9L775.9,312.4L775.1,308.9L774.3,305.4L773.4,302L772.5,298.5L771.5,295.1L770.4,291.7L769.3,288.3L768.1,284.9L766.9,281.5L765.6,278.2L764.2,274.8L762.8,271.6L761.4,268.3L759.9,265.1L758.3,261.9L756.7,258.8L755,255.7L753.3,252.6L751.5,249.6L749.7,246.6L747.8,243.7L745.9,240.8L744,238L742,235.2L739.9,232.5L737.9,229.8L735.8,227.2L733.6,224.7L731.4,222.2L729.2,219.8L727,217.5L724.7,215.2L722.4,213L720.1,210.9L717.7,208.8L715.3,206.8L712.9,204.9L710.5,203.1L708.1,201.3L705.6,199.7L703.1,198.1L700.7,196.6L698.2,195.1L695.6,193.8L693.1,192.5L690.6,191.4L688.1,190.3L685.5,189.3L683,188.3L680.5,187.5L677.9,186.8L675.4,186.1L672.9,185.6L670.4,185.1L667.8,184.7L665.3,184.4L662.9,184.2L660.4,184.1L657.9,184.1L655.5,184.2L653.1,184.4L650.7,184.6L648.3,185L645.9,185.4L643.6,185.9L641.3,186.5L639,187.3L636.8,188M727,446.7L729.2,446L731.4,445.1L733.6,444.1L735.8,443L737.9,441.9L739.9,440.7L742,439.3L744,437.9L745.9,436.5L747.8,434.9L749.7,433.2L751.5,431.5L753.3,429.7L755,427.8L756.7,425.9L758.3,423.8L759.9,421.7L761.4,419.6L762.8,417.3L764.2,415L765.6,412.6L766.9,410.2L768.1,407.6L769.3,405.1L770.4,402.4L771.5,399.7L772.5,397L773.4,394.2L774.3,391.3L775.1,388.4L775.9,385.5L776.6,382.5L777.2,379.4L777.8,376.3L778.3,373.2L778.7,370L779,366.8L779.3,363.6L779.6,360.3L779.7,357L779.8,353.6L779.9,350.3" fill="none" stroke="#e60000" stroke-width="1.6"/><path d="M586.1,350.3L586.2,346.9L586.3,343.5L586.4,340.1L586.7,336.7L587,333.2L587.3,329.8L587.7,326.3L588.2,322.8L588.8,319.3L589.4,315.9L590.1,312.4L590.9,308.9L591.7,305.4L592.6,302L593.5,298.5L594.5,295.1L595.6,291.7L596.7,288.3L597.9,284.9L599.1,281.5L600.4,278.2L601.8,274.8L603.2,271.6L604.6,268.3L606.1,265.1L607.7,261.9L609.3,258.8L611,255.7L612.7,252.6L614.5,249.6L616.3,246.6L618.2,243.7L620.1,240.8L622,238L624,235.2L626.1,232.5L628.1,229.8L630.2,227.2L632.4,224.7L634.6,222.2L636.8,219.8L639,217.5L641.3,215.2L643.6,213L645.9,210.9L648.3,208.8L650.7,206.8L653.1,204.9L655.5,203.1L657.9,201.3L660.4,199.7L662.9,198.1L665.3,196.6L667.8,195.1L670.4,193.8L672.9,192.5L675.4,191.4L677.9,190.3L680.5,189.3L683,188.3L685.5,187.5L688.1,186.8L690.6,186.1L693.1,185.6L695.6,185.1L698.2,184.7L700.7,184.4L703.1,184.2L705.6,184.1L708.1,184.1L710.5,184.2L712.9,184.4L715.3,184.6L717.7,185L720.1,185.4L722.4,185.9L724.7,186.5L727,187.3L729.2,188M639,446.7L636.8,446L634.6,445.1L632.4,444.1L630.2,443L628.1,441.9L626.1,440.7L624,439.3L622,437.9L620.1,436.5L618.2,434.9L616.3,433.2L614.5,431.5L612.7,429.7L611,427.8L609.3,425.9L607.7,423.8L606.1,421.7L604.6,419.6L603.2,417.3L601.8,415L600.4,412.6L599.1,410.2L597.9,407.6L596.7,405.1L595.6,402.4L594.5,399.7L593.5,397L592.6,394.2L591.7,391.3L590.9,388.4L590.1,385.5L589.4,382.5L588.8,379.4L588.2,376.3L587.7,373.2L587.3,370L587,366.8L586.7,363.6L586.4,360.3L586.3,357L586.2,353.6L586.1,350.3" fill="none" stroke="#008000" stroke-width="1.7"/>
<path d="M578,353L595.4,346.7" stroke="#ff1a1a" stroke-width="1.3"/>
<path d="M770.6,346.9L788,353" stroke="#22dd22" stroke-width="1.4"/>
<path d="M582.5,350.5V341" stroke="#111" stroke-width="1.3"/>
<path d="M580.3,343L582.5,338.5L584.7,343z" fill="#111"/>
<path d="M583,351.5L590.5,353.5" stroke="#111" stroke-width="1.3"/>
<text x="685" y="174.5" font-family="Liberation Sans" font-size="8.5" fill="#444" text-anchor="middle">z</text>
<text x="569.5" y="360.5" font-family="Liberation Sans" font-size="8.5" fill="#333" text-anchor="middle">x</text>
<text x="796.5" y="358.5" font-family="Liberation Sans" font-size="8.5" fill="#333" text-anchor="middle">y</text>
<text x="580.5" y="337.5" font-family="Liberation Sans" font-size="8.5" fill="#3a0000" text-anchor="middle">el</text>
<text x="594.5" y="360" font-family="Liberation Sans" font-size="8.5" fill="#3a0000" text-anchor="middle">az</text>
</svg>
<div class="a" style="left:961px;top:160.5px;width:16px;height:307.5px;background:linear-gradient(to bottom,#800000 0%,#ff0000 12.5%,#ffff00 37.5%,#00ffff 62.5%,#0000ff 87.5%,#000080 100%);box-shadow:0 0 0 0.5px rgba(0,0,0,.25)"></div>
<div class="a" style="left:973px;top:193.0px;width:4px;height:1px;background:rgba(0,0,0,.45)"></div>
<div class="t" style="left:980.5px;top:190.0px;font-size:8.5px;color:#262626">0</div>
<div class="a" style="left:973px;top:234.3px;width:4px;height:1px;background:rgba(0,0,0,.45)"></div>
<div class="t" style="left:980.5px;top:231.3px;font-size:8.5px;color:#262626">-5</div>
<div class="a" style="left:973px;top:275.7px;width:4px;height:1px;background:rgba(0,0,0,.45)"></div>
<div class="t" style="left:980.5px;top:272.7px;font-size:8.5px;color:#262626">-10</div>
<div class="a" style="left:973px;top:317.1px;width:4px;height:1px;background:rgba(0,0,0,.45)"></div>
<div class="t" style="left:980.5px;top:314.1px;font-size:8.5px;color:#262626">-15</div>
<div class="a" style="left:973px;top:358.4px;width:4px;height:1px;background:rgba(0,0,0,.45)"></div>
<div class="t" style="left:980.5px;top:355.4px;font-size:8.5px;color:#262626">-20</div>
<div class="a" style="left:973px;top:399.8px;width:4px;height:1px;background:rgba(0,0,0,.45)"></div>
<div class="t" style="left:980.5px;top:396.8px;font-size:8.5px;color:#262626">-25</div>
<div class="a" style="left:973px;top:441.1px;width:4px;height:1px;background:rgba(0,0,0,.45)"></div>
<div class="t" style="left:980.5px;top:438.1px;font-size:8.5px;color:#262626">-30</div>
<div class="t" style="left:993.5px;top:309.5px;font-size:8.5px;color:#262626;transform:rotate(-90deg);transform-origin:50% 50%;width:14px;text-align:center">dBi</div>
<div class="a" style="left:270px;top:397px;width:218px;height:1px;background:repeating-linear-gradient(to right,#9a9a9a 0 1px,transparent 1px 3px)"></div>
<div class="a" style="left:487px;top:397px;width:1px;height:158px;background:repeating-linear-gradient(to bottom,#9a9a9a 0 1px,transparent 1px 3px)"></div>
<svg class="a" style="left:360px;top:398px" width="36" height="118" viewBox="0 0 36 118">
<path d="M5.5,8 L18,4 L30.5,8 V109.5 L18,114 L5.5,109.5z" fill="#fff"/>
<path d="M5.5,8 V109.5 L18,114 L30.5,109.5" fill="none" stroke="#666" stroke-width="0.8"/>
<path d="M15,15.5 L21.5,18.5 V111 L15,108z" fill="#e8b832" stroke="#7a5a10" stroke-width="0.7"/>
<circle cx="17.8" cy="63" r="1.7" fill="#d02020"/>
</svg>
<div class="a" style="left:277.5px;top:528.5px;width:161px;height:22px;background:#fff;border:1px solid #c4c4c4;border-radius:3px"></div>
<div class="t" style="left:281px;top:535.5px;font-size:8.3px;color:#262626">Show Antenna</div>
<div class="a" style="left:425px;top:538.5px;width:0;height:0;border-left:2.5px solid transparent;border-right:2.5px solid transparent;border-top:4px solid #333"></div>
<!--/PLOT-->
<!-- status bar -->
<div class="a" style="left:0;top:555px;width:1075px;height:16px;background:#e6e6e6;border-top:1px solid #d6d6d6"></div>
<div class="a" style="left:268px;top:555px;width:2px;height:16px;background:#d2d2d2"></div>
<svg class="a" style="left:4px;top:559px" width="9" height="9" viewBox="0 0 9 9"><rect x="0.5" y="0.5" width="1.5" height="8" fill="#8a8a8a"/><path d="M8,0.5 V8.5 L2.5,4.5z" fill="#8a8a8a"/></svg>
<div class="t" style="left:275px;top:560px;font-size:8.7px;color:#262626;transform:scaleX(.93);transform-origin:0 0">Finished Updating</div>
</body></html>
